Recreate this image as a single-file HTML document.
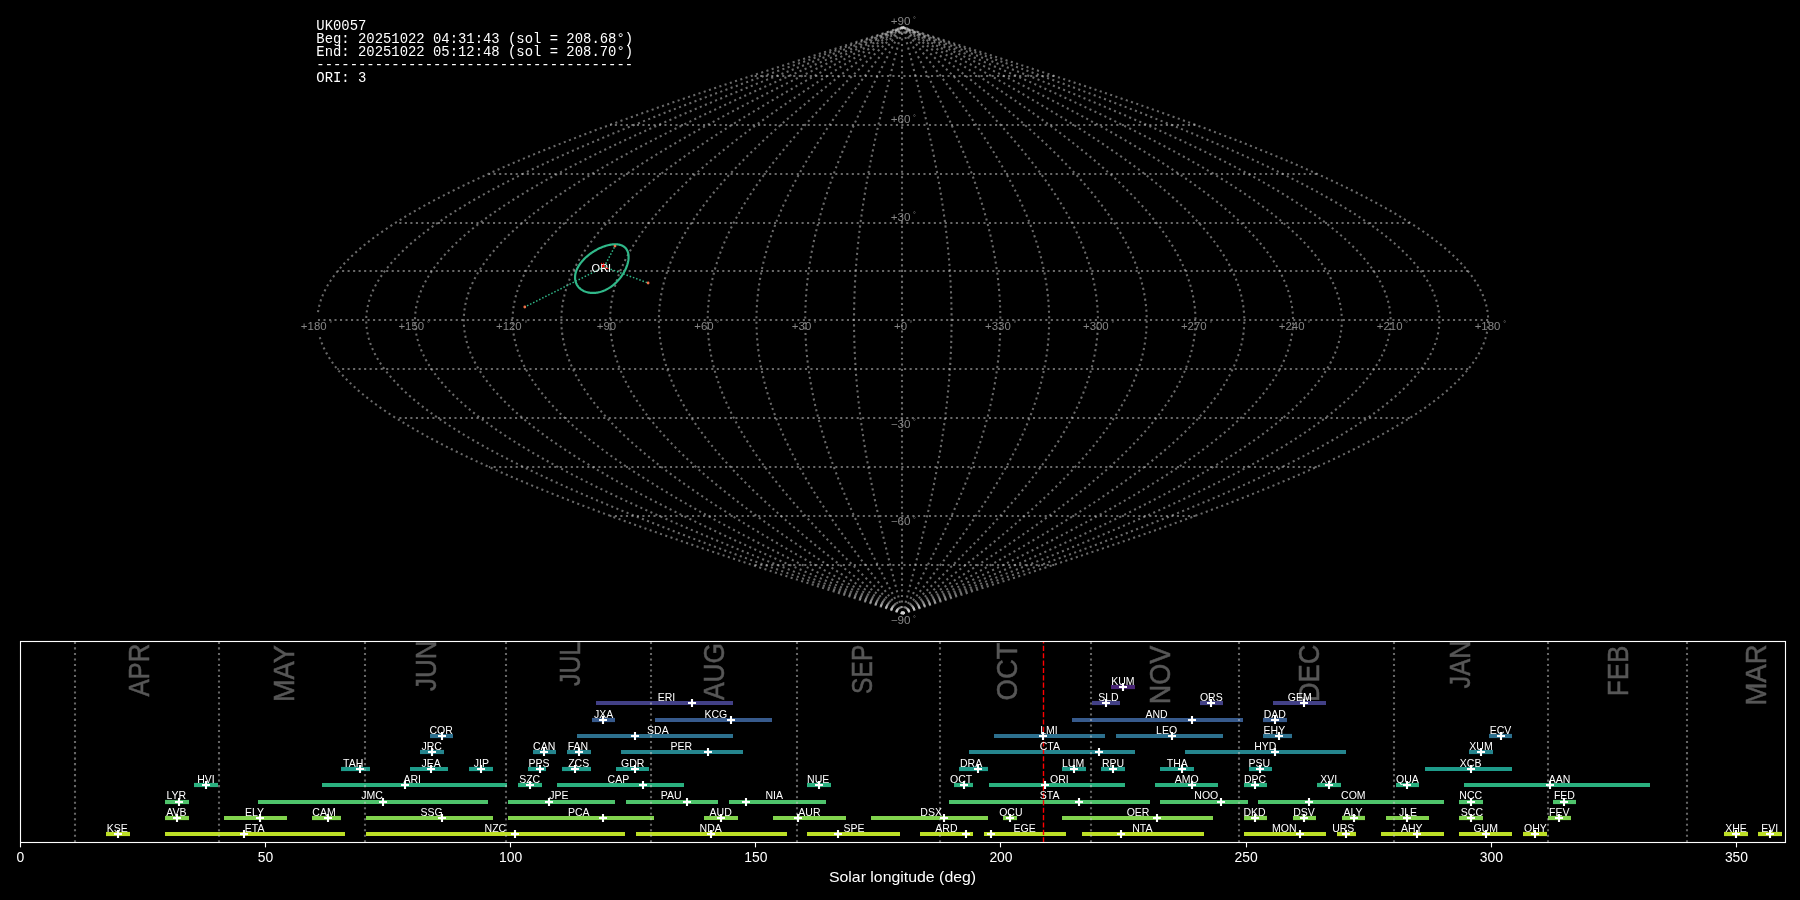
<!DOCTYPE html>
<html><head><meta charset="utf-8"><title>UK0057</title>
<style>html,body{margin:0;padding:0;background:#000;width:1800px;height:900px;overflow:hidden}svg{display:block;will-change:transform}</style>
</head><body>
<svg width="1800" height="900" viewBox="0 0 1800 900">
<rect width="1800" height="900" fill="#000"/>
<g fill="none" stroke="#d2d2d2" stroke-opacity="0.5" stroke-width="2.08" stroke-dasharray="2.08 3.43">
<path d="M902.80,613.52 L907.91,611.89 L913.02,610.26 L918.12,608.63 L923.23,607.00 L928.33,605.38 L933.44,603.75 L938.54,602.12 L943.63,600.49 L948.73,598.86 L953.82,597.23 L958.90,595.60 L963.99,593.97 L969.06,592.34 L974.14,590.71 L979.20,589.09 L984.27,587.46 L989.32,585.83 L994.37,584.20 L999.41,582.57 L1004.45,580.94 L1009.47,579.31 L1014.49,577.68 L1019.50,576.05 L1024.50,574.42 L1029.50,572.80 L1034.48,571.17 L1039.45,569.54 L1044.41,567.91 L1049.36,566.28 L1054.30,564.65 L1059.23,563.02 L1064.15,561.39 L1069.05,559.76 L1073.94,558.13 L1078.82,556.50 L1083.69,554.88 L1088.54,553.25 L1093.37,551.62 L1098.20,549.99 L1103.00,548.36 L1107.80,546.73 L1112.57,545.10 L1117.34,543.47 L1122.08,541.84 L1126.81,540.22 L1131.52,538.59 L1136.21,536.96 L1140.89,535.33 L1145.54,533.70 L1150.18,532.07 L1154.80,530.44 L1159.40,528.81 L1163.99,527.18 L1168.55,525.55 L1173.09,523.92 L1177.61,522.30 L1182.11,520.67 L1186.59,519.04 L1191.05,517.41 L1195.48,515.78 L1199.89,514.15 L1204.28,512.52 L1208.65,510.89 L1212.99,509.26 L1217.31,507.63 L1221.61,506.01 L1225.88,504.38 L1230.13,502.75 L1234.35,501.12 L1238.55,499.49 L1242.72,497.86 L1246.87,496.23 L1250.99,494.60 L1255.08,492.97 L1259.14,491.35 L1263.18,489.72 L1267.20,488.09 L1271.18,486.46 L1275.13,484.83 L1279.06,483.20 L1282.96,481.57 L1286.83,479.94 L1290.67,478.31 L1294.48,476.68 L1298.26,475.06 L1302.01,473.43 L1305.74,471.80 L1309.43,470.17 L1313.08,468.54 L1316.71,466.91 L1320.31,465.28 L1323.87,463.65 L1327.41,462.02 L1330.91,460.39 L1334.37,458.76 L1337.81,457.14 L1341.21,455.51 L1344.58,453.88 L1347.91,452.25 L1351.21,450.62 L1354.48,448.99 L1357.71,447.36 L1360.91,445.73 L1364.07,444.10 L1367.20,442.48 L1370.29,440.85 L1373.35,439.22 L1376.37,437.59 L1379.35,435.96 L1382.30,434.33 L1385.21,432.70 L1388.09,431.07 L1390.92,429.44 L1393.72,427.81 L1396.49,426.19 L1399.21,424.56 L1401.90,422.93 L1404.55,421.30 L1407.16,419.67 L1409.74,418.04 L1412.27,416.41 L1414.77,414.78 L1417.22,413.15 L1419.64,411.52 L1422.02,409.89 L1424.36,408.27 L1426.66,406.64 L1428.92,405.01 L1431.14,403.38 L1433.32,401.75 L1435.45,400.12 L1437.55,398.49 L1439.61,396.86 L1441.63,395.23 L1443.60,393.61 L1445.54,391.98 L1447.43,390.35 L1449.28,388.72 L1451.09,387.09 L1452.86,385.46 L1454.58,383.83 L1456.27,382.20 L1457.91,380.57 L1459.51,378.94 L1461.07,377.31 L1462.58,375.69 L1464.05,374.06 L1465.48,372.43 L1466.87,370.80 L1468.21,369.17 L1469.51,367.54 L1470.77,365.91 L1471.99,364.28 L1473.16,362.65 L1474.28,361.03 L1475.37,359.40 L1476.41,357.77 L1477.41,356.14 L1478.36,354.51 L1479.27,352.88 L1480.13,351.25 L1480.95,349.62 L1481.73,347.99 L1482.46,346.36 L1483.15,344.74 L1483.80,343.11 L1484.40,341.48 L1484.95,339.85 L1485.47,338.22 L1485.93,336.59 L1486.36,334.96 L1486.73,333.33 L1487.07,331.70 L1487.36,330.07 L1487.60,328.44 L1487.80,326.82 L1487.96,325.19 L1488.07,323.56 L1488.14,321.93 L1488.16,320.30 L1488.14,318.67 L1488.07,317.04 L1487.96,315.41 L1487.80,313.78 L1487.60,312.16 L1487.36,310.53 L1487.07,308.90 L1486.73,307.27 L1486.36,305.64 L1485.93,304.01 L1485.47,302.38 L1484.95,300.75 L1484.40,299.12 L1483.80,297.49 L1483.15,295.87 L1482.46,294.24 L1481.73,292.61 L1480.95,290.98 L1480.13,289.35 L1479.27,287.72 L1478.36,286.09 L1477.41,284.46 L1476.41,282.83 L1475.37,281.20 L1474.28,279.57 L1473.16,277.95 L1471.99,276.32 L1470.77,274.69 L1469.51,273.06 L1468.21,271.43 L1466.87,269.80 L1465.48,268.17 L1464.05,266.54 L1462.58,264.91 L1461.07,263.29 L1459.51,261.66 L1457.91,260.03 L1456.27,258.40 L1454.58,256.77 L1452.86,255.14 L1451.09,253.51 L1449.28,251.88 L1447.43,250.25 L1445.54,248.62 L1443.60,247.00 L1441.63,245.37 L1439.61,243.74 L1437.55,242.11 L1435.45,240.48 L1433.32,238.85 L1431.14,237.22 L1428.92,235.59 L1426.66,233.96 L1424.36,232.33 L1422.02,230.71 L1419.64,229.08 L1417.22,227.45 L1414.77,225.82 L1412.27,224.19 L1409.74,222.56 L1407.16,220.93 L1404.55,219.30 L1401.90,217.67 L1399.21,216.04 L1396.49,214.42 L1393.72,212.79 L1390.92,211.16 L1388.09,209.53 L1385.21,207.90 L1382.30,206.27 L1379.35,204.64 L1376.37,203.01 L1373.35,201.38 L1370.29,199.75 L1367.20,198.12 L1364.07,196.50 L1360.91,194.87 L1357.71,193.24 L1354.48,191.61 L1351.21,189.98 L1347.91,188.35 L1344.58,186.72 L1341.21,185.09 L1337.81,183.46 L1334.37,181.84 L1330.91,180.21 L1327.41,178.58 L1323.87,176.95 L1320.31,175.32 L1316.71,173.69 L1313.08,172.06 L1309.43,170.43 L1305.74,168.80 L1302.01,167.17 L1298.26,165.55 L1294.48,163.92 L1290.67,162.29 L1286.83,160.66 L1282.96,159.03 L1279.06,157.40 L1275.13,155.77 L1271.18,154.14 L1267.20,152.51 L1263.18,150.88 L1259.14,149.26 L1255.08,147.63 L1250.99,146.00 L1246.87,144.37 L1242.72,142.74 L1238.55,141.11 L1234.35,139.48 L1230.13,137.85 L1225.88,136.22 L1221.61,134.59 L1217.31,132.97 L1212.99,131.34 L1208.65,129.71 L1204.28,128.08 L1199.89,126.45 L1195.48,124.82 L1191.05,123.19 L1186.59,121.56 L1182.11,119.93 L1177.61,118.30 L1173.09,116.68 L1168.55,115.05 L1163.99,113.42 L1159.40,111.79 L1154.80,110.16 L1150.18,108.53 L1145.54,106.90 L1140.89,105.27 L1136.21,103.64 L1131.52,102.01 L1126.81,100.39 L1122.08,98.76 L1117.34,97.13 L1112.57,95.50 L1107.80,93.87 L1103.00,92.24 L1098.20,90.61 L1093.37,88.98 L1088.54,87.35 L1083.69,85.72 L1078.82,84.09 L1073.94,82.47 L1069.05,80.84 L1064.15,79.21 L1059.23,77.58 L1054.30,75.95 L1049.36,74.32 L1044.41,72.69 L1039.45,71.06 L1034.48,69.43 L1029.50,67.81 L1024.50,66.18 L1019.50,64.55 L1014.49,62.92 L1009.47,61.29 L1004.45,59.66 L999.41,58.03 L994.37,56.40 L989.32,54.77 L984.27,53.14 L979.20,51.51 L974.14,49.89 L969.06,48.26 L963.99,46.63 L958.90,45.00 L953.82,43.37 L948.73,41.74 L943.63,40.11 L938.54,38.48 L933.44,36.85 L928.33,35.23 L923.23,33.60 L918.12,31.97 L913.02,30.34 L907.91,28.71 L902.80,27.08"/>
<path d="M902.80,613.52 L907.48,611.89 L912.16,610.26 L916.85,608.63 L921.53,607.00 L926.21,605.38 L930.88,603.75 L935.56,602.12 L940.23,600.49 L944.90,598.86 L949.57,597.23 L954.23,595.60 L958.89,593.97 L963.54,592.34 L968.19,590.71 L972.84,589.09 L977.48,587.46 L982.11,585.83 L986.74,584.20 L991.36,582.57 L995.98,580.94 L1000.58,579.31 L1005.18,577.68 L1009.78,576.05 L1014.36,574.42 L1018.94,572.80 L1023.50,571.17 L1028.06,569.54 L1032.61,567.91 L1037.15,566.28 L1041.68,564.65 L1046.19,563.02 L1050.70,561.39 L1055.20,559.76 L1059.68,558.13 L1064.15,556.50 L1068.61,554.88 L1073.06,553.25 L1077.49,551.62 L1081.91,549.99 L1086.32,548.36 L1090.71,546.73 L1095.09,545.10 L1099.46,543.47 L1103.81,541.84 L1108.14,540.22 L1112.46,538.59 L1116.76,536.96 L1121.05,535.33 L1125.32,533.70 L1129.57,532.07 L1133.80,530.44 L1138.02,528.81 L1142.22,527.18 L1146.40,525.55 L1150.57,523.92 L1154.71,522.30 L1158.83,520.67 L1162.94,519.04 L1167.02,517.41 L1171.09,515.78 L1175.13,514.15 L1179.16,512.52 L1183.16,510.89 L1187.14,509.26 L1191.10,507.63 L1195.04,506.01 L1198.96,504.38 L1202.85,502.75 L1206.72,501.12 L1210.57,499.49 L1214.39,497.86 L1218.19,496.23 L1221.97,494.60 L1225.72,492.97 L1229.45,491.35 L1233.15,489.72 L1236.83,488.09 L1240.48,486.46 L1244.11,484.83 L1247.71,483.20 L1251.28,481.57 L1254.83,479.94 L1258.35,478.31 L1261.84,476.68 L1265.31,475.06 L1268.75,473.43 L1272.16,471.80 L1275.54,470.17 L1278.89,468.54 L1282.22,466.91 L1285.52,465.28 L1288.78,463.65 L1292.02,462.02 L1295.23,460.39 L1298.41,458.76 L1301.56,457.14 L1304.67,455.51 L1307.76,453.88 L1310.82,452.25 L1313.84,450.62 L1316.84,448.99 L1319.80,447.36 L1322.73,445.73 L1325.63,444.10 L1328.50,442.48 L1331.33,440.85 L1334.13,439.22 L1336.90,437.59 L1339.64,435.96 L1342.34,434.33 L1345.01,432.70 L1347.64,431.07 L1350.25,429.44 L1352.81,427.81 L1355.35,426.19 L1357.85,424.56 L1360.31,422.93 L1362.74,421.30 L1365.13,419.67 L1367.49,418.04 L1369.82,416.41 L1372.10,414.78 L1374.36,413.15 L1376.57,411.52 L1378.75,409.89 L1380.90,408.27 L1383.00,406.64 L1385.07,405.01 L1387.11,403.38 L1389.11,401.75 L1391.07,400.12 L1392.99,398.49 L1394.88,396.86 L1396.72,395.23 L1398.54,393.61 L1400.31,391.98 L1402.04,390.35 L1403.74,388.72 L1405.40,387.09 L1407.02,385.46 L1408.60,383.83 L1410.15,382.20 L1411.65,380.57 L1413.12,378.94 L1414.55,377.31 L1415.93,375.69 L1417.28,374.06 L1418.59,372.43 L1419.86,370.80 L1421.10,369.17 L1422.29,367.54 L1423.44,365.91 L1424.55,364.28 L1425.63,362.65 L1426.66,361.03 L1427.65,359.40 L1428.61,357.77 L1429.52,356.14 L1430.39,354.51 L1431.23,352.88 L1432.02,351.25 L1432.77,349.62 L1433.49,347.99 L1434.16,346.36 L1434.79,344.74 L1435.38,343.11 L1435.93,341.48 L1436.44,339.85 L1436.91,338.22 L1437.34,336.59 L1437.73,334.96 L1438.07,333.33 L1438.38,331.70 L1438.64,330.07 L1438.87,328.44 L1439.05,326.82 L1439.20,325.19 L1439.30,323.56 L1439.36,321.93 L1439.38,320.30 L1439.36,318.67 L1439.30,317.04 L1439.20,315.41 L1439.05,313.78 L1438.87,312.16 L1438.64,310.53 L1438.38,308.90 L1438.07,307.27 L1437.73,305.64 L1437.34,304.01 L1436.91,302.38 L1436.44,300.75 L1435.93,299.12 L1435.38,297.49 L1434.79,295.87 L1434.16,294.24 L1433.49,292.61 L1432.77,290.98 L1432.02,289.35 L1431.23,287.72 L1430.39,286.09 L1429.52,284.46 L1428.61,282.83 L1427.65,281.20 L1426.66,279.57 L1425.63,277.95 L1424.55,276.32 L1423.44,274.69 L1422.29,273.06 L1421.10,271.43 L1419.86,269.80 L1418.59,268.17 L1417.28,266.54 L1415.93,264.91 L1414.55,263.29 L1413.12,261.66 L1411.65,260.03 L1410.15,258.40 L1408.60,256.77 L1407.02,255.14 L1405.40,253.51 L1403.74,251.88 L1402.04,250.25 L1400.31,248.62 L1398.54,247.00 L1396.72,245.37 L1394.88,243.74 L1392.99,242.11 L1391.07,240.48 L1389.11,238.85 L1387.11,237.22 L1385.07,235.59 L1383.00,233.96 L1380.90,232.33 L1378.75,230.71 L1376.57,229.08 L1374.36,227.45 L1372.10,225.82 L1369.82,224.19 L1367.49,222.56 L1365.13,220.93 L1362.74,219.30 L1360.31,217.67 L1357.85,216.04 L1355.35,214.42 L1352.81,212.79 L1350.25,211.16 L1347.64,209.53 L1345.01,207.90 L1342.34,206.27 L1339.64,204.64 L1336.90,203.01 L1334.13,201.38 L1331.33,199.75 L1328.50,198.12 L1325.63,196.50 L1322.73,194.87 L1319.80,193.24 L1316.84,191.61 L1313.84,189.98 L1310.82,188.35 L1307.76,186.72 L1304.67,185.09 L1301.56,183.46 L1298.41,181.84 L1295.23,180.21 L1292.02,178.58 L1288.78,176.95 L1285.52,175.32 L1282.22,173.69 L1278.89,172.06 L1275.54,170.43 L1272.16,168.80 L1268.75,167.17 L1265.31,165.55 L1261.84,163.92 L1258.35,162.29 L1254.83,160.66 L1251.28,159.03 L1247.71,157.40 L1244.11,155.77 L1240.48,154.14 L1236.83,152.51 L1233.15,150.88 L1229.45,149.26 L1225.72,147.63 L1221.97,146.00 L1218.19,144.37 L1214.39,142.74 L1210.57,141.11 L1206.72,139.48 L1202.85,137.85 L1198.96,136.22 L1195.04,134.59 L1191.10,132.97 L1187.14,131.34 L1183.16,129.71 L1179.16,128.08 L1175.13,126.45 L1171.09,124.82 L1167.02,123.19 L1162.94,121.56 L1158.83,119.93 L1154.71,118.30 L1150.57,116.68 L1146.40,115.05 L1142.22,113.42 L1138.02,111.79 L1133.80,110.16 L1129.57,108.53 L1125.32,106.90 L1121.05,105.27 L1116.76,103.64 L1112.46,102.01 L1108.14,100.39 L1103.81,98.76 L1099.46,97.13 L1095.09,95.50 L1090.71,93.87 L1086.32,92.24 L1081.91,90.61 L1077.49,88.98 L1073.06,87.35 L1068.61,85.72 L1064.15,84.09 L1059.68,82.47 L1055.20,80.84 L1050.70,79.21 L1046.19,77.58 L1041.68,75.95 L1037.15,74.32 L1032.61,72.69 L1028.06,71.06 L1023.50,69.43 L1018.94,67.81 L1014.36,66.18 L1009.78,64.55 L1005.18,62.92 L1000.58,61.29 L995.98,59.66 L991.36,58.03 L986.74,56.40 L982.11,54.77 L977.48,53.14 L972.84,51.51 L968.19,49.89 L963.54,48.26 L958.89,46.63 L954.23,45.00 L949.57,43.37 L944.90,41.74 L940.23,40.11 L935.56,38.48 L930.88,36.85 L926.21,35.23 L921.53,33.60 L916.85,31.97 L912.16,30.34 L907.48,28.71 L902.80,27.08"/>
<path d="M902.80,613.52 L907.06,611.89 L911.31,610.26 L915.57,608.63 L919.82,607.00 L924.08,605.38 L928.33,603.75 L932.58,602.12 L936.83,600.49 L941.07,598.86 L945.31,597.23 L949.55,595.60 L953.79,593.97 L958.02,592.34 L962.25,590.71 L966.47,589.09 L970.69,587.46 L974.90,585.83 L979.11,584.20 L983.31,582.57 L987.51,580.94 L991.69,579.31 L995.88,577.68 L1000.05,576.05 L1004.22,574.42 L1008.38,572.80 L1012.53,571.17 L1016.67,569.54 L1020.81,567.91 L1024.94,566.28 L1029.05,564.65 L1033.16,563.02 L1037.26,561.39 L1041.34,559.76 L1045.42,558.13 L1049.48,556.50 L1053.54,554.88 L1057.58,553.25 L1061.61,551.62 L1065.63,549.99 L1069.64,548.36 L1073.63,546.73 L1077.61,545.10 L1081.58,543.47 L1085.53,541.84 L1089.47,540.22 L1093.40,538.59 L1097.31,536.96 L1101.21,535.33 L1105.09,533.70 L1108.95,532.07 L1112.80,530.44 L1116.64,528.81 L1120.46,527.18 L1124.26,525.55 L1128.04,523.92 L1131.81,522.30 L1135.56,520.67 L1139.29,519.04 L1143.00,517.41 L1146.70,515.78 L1150.38,514.15 L1154.04,512.52 L1157.67,510.89 L1161.29,509.26 L1164.89,507.63 L1168.47,506.01 L1172.03,504.38 L1175.57,502.75 L1179.09,501.12 L1182.59,499.49 L1186.07,497.86 L1189.52,496.23 L1192.95,494.60 L1196.37,492.97 L1199.75,491.35 L1203.12,489.72 L1206.46,488.09 L1209.78,486.46 L1213.08,484.83 L1216.35,483.20 L1219.60,481.57 L1222.83,479.94 L1226.03,478.31 L1229.20,476.68 L1232.35,475.06 L1235.48,473.43 L1238.58,471.80 L1241.65,470.17 L1244.70,468.54 L1247.73,466.91 L1250.72,465.28 L1253.69,463.65 L1256.64,462.02 L1259.55,460.39 L1262.44,458.76 L1265.31,457.14 L1268.14,455.51 L1270.95,453.88 L1273.73,452.25 L1276.48,450.62 L1279.20,448.99 L1281.89,447.36 L1284.56,445.73 L1287.19,444.10 L1289.80,442.48 L1292.37,440.85 L1294.92,439.22 L1297.44,437.59 L1299.93,435.96 L1302.38,434.33 L1304.81,432.70 L1307.20,431.07 L1309.57,429.44 L1311.90,427.81 L1314.21,426.19 L1316.48,424.56 L1318.72,422.93 L1320.93,421.30 L1323.10,419.67 L1325.25,418.04 L1327.36,416.41 L1329.44,414.78 L1331.49,413.15 L1333.50,411.52 L1335.48,409.89 L1337.43,408.27 L1339.35,406.64 L1341.23,405.01 L1343.08,403.38 L1344.90,401.75 L1346.68,400.12 L1348.43,398.49 L1350.14,396.86 L1351.82,395.23 L1353.47,393.61 L1355.08,391.98 L1356.66,390.35 L1358.20,388.72 L1359.71,387.09 L1361.18,385.46 L1362.62,383.83 L1364.02,382.20 L1365.39,380.57 L1366.73,378.94 L1368.02,377.31 L1369.29,375.69 L1370.51,374.06 L1371.70,372.43 L1372.86,370.80 L1373.98,369.17 L1375.06,367.54 L1376.11,365.91 L1377.12,364.28 L1378.10,362.65 L1379.04,361.03 L1379.94,359.40 L1380.81,357.77 L1381.64,356.14 L1382.43,354.51 L1383.19,352.88 L1383.91,351.25 L1384.59,349.62 L1385.24,347.99 L1385.85,346.36 L1386.43,344.74 L1386.96,343.11 L1387.46,341.48 L1387.93,339.85 L1388.35,338.22 L1388.74,336.59 L1389.10,334.96 L1389.41,333.33 L1389.69,331.70 L1389.93,330.07 L1390.14,328.44 L1390.30,326.82 L1390.43,325.19 L1390.53,323.56 L1390.58,321.93 L1390.60,320.30 L1390.58,318.67 L1390.53,317.04 L1390.43,315.41 L1390.30,313.78 L1390.14,312.16 L1389.93,310.53 L1389.69,308.90 L1389.41,307.27 L1389.10,305.64 L1388.74,304.01 L1388.35,302.38 L1387.93,300.75 L1387.46,299.12 L1386.96,297.49 L1386.43,295.87 L1385.85,294.24 L1385.24,292.61 L1384.59,290.98 L1383.91,289.35 L1383.19,287.72 L1382.43,286.09 L1381.64,284.46 L1380.81,282.83 L1379.94,281.20 L1379.04,279.57 L1378.10,277.95 L1377.12,276.32 L1376.11,274.69 L1375.06,273.06 L1373.98,271.43 L1372.86,269.80 L1371.70,268.17 L1370.51,266.54 L1369.29,264.91 L1368.02,263.29 L1366.73,261.66 L1365.39,260.03 L1364.02,258.40 L1362.62,256.77 L1361.18,255.14 L1359.71,253.51 L1358.20,251.88 L1356.66,250.25 L1355.08,248.62 L1353.47,247.00 L1351.82,245.37 L1350.14,243.74 L1348.43,242.11 L1346.68,240.48 L1344.90,238.85 L1343.08,237.22 L1341.23,235.59 L1339.35,233.96 L1337.43,232.33 L1335.48,230.71 L1333.50,229.08 L1331.49,227.45 L1329.44,225.82 L1327.36,224.19 L1325.25,222.56 L1323.10,220.93 L1320.93,219.30 L1318.72,217.67 L1316.48,216.04 L1314.21,214.42 L1311.90,212.79 L1309.57,211.16 L1307.20,209.53 L1304.81,207.90 L1302.38,206.27 L1299.93,204.64 L1297.44,203.01 L1294.92,201.38 L1292.37,199.75 L1289.80,198.12 L1287.19,196.50 L1284.56,194.87 L1281.89,193.24 L1279.20,191.61 L1276.48,189.98 L1273.73,188.35 L1270.95,186.72 L1268.14,185.09 L1265.31,183.46 L1262.44,181.84 L1259.55,180.21 L1256.64,178.58 L1253.69,176.95 L1250.72,175.32 L1247.73,173.69 L1244.70,172.06 L1241.65,170.43 L1238.58,168.80 L1235.48,167.17 L1232.35,165.55 L1229.20,163.92 L1226.03,162.29 L1222.83,160.66 L1219.60,159.03 L1216.35,157.40 L1213.08,155.77 L1209.78,154.14 L1206.46,152.51 L1203.12,150.88 L1199.75,149.26 L1196.37,147.63 L1192.95,146.00 L1189.52,144.37 L1186.07,142.74 L1182.59,141.11 L1179.09,139.48 L1175.57,137.85 L1172.03,136.22 L1168.47,134.59 L1164.89,132.97 L1161.29,131.34 L1157.67,129.71 L1154.04,128.08 L1150.38,126.45 L1146.70,124.82 L1143.00,123.19 L1139.29,121.56 L1135.56,119.93 L1131.81,118.30 L1128.04,116.68 L1124.26,115.05 L1120.46,113.42 L1116.64,111.79 L1112.80,110.16 L1108.95,108.53 L1105.09,106.90 L1101.21,105.27 L1097.31,103.64 L1093.40,102.01 L1089.47,100.39 L1085.53,98.76 L1081.58,97.13 L1077.61,95.50 L1073.63,93.87 L1069.64,92.24 L1065.63,90.61 L1061.61,88.98 L1057.58,87.35 L1053.54,85.72 L1049.48,84.09 L1045.42,82.47 L1041.34,80.84 L1037.26,79.21 L1033.16,77.58 L1029.05,75.95 L1024.94,74.32 L1020.81,72.69 L1016.67,71.06 L1012.53,69.43 L1008.38,67.81 L1004.22,66.18 L1000.05,64.55 L995.88,62.92 L991.69,61.29 L987.51,59.66 L983.31,58.03 L979.11,56.40 L974.90,54.77 L970.69,53.14 L966.47,51.51 L962.25,49.89 L958.02,48.26 L953.79,46.63 L949.55,45.00 L945.31,43.37 L941.07,41.74 L936.83,40.11 L932.58,38.48 L928.33,36.85 L924.08,35.23 L919.82,33.60 L915.57,31.97 L911.31,30.34 L907.06,28.71 L902.80,27.08"/>
<path d="M902.80,613.52 L906.63,611.89 L910.46,610.26 L914.29,608.63 L918.12,607.00 L921.95,605.38 L925.78,603.75 L929.60,602.12 L933.42,600.49 L937.25,598.86 L941.06,597.23 L944.88,595.60 L948.69,593.97 L952.50,592.34 L956.30,590.71 L960.10,589.09 L963.90,587.46 L967.69,585.83 L971.48,584.20 L975.26,582.57 L979.04,580.94 L982.81,579.31 L986.57,577.68 L990.33,576.05 L994.08,574.42 L997.82,572.80 L1001.56,571.17 L1005.29,569.54 L1009.01,567.91 L1012.72,566.28 L1016.43,564.65 L1020.12,563.02 L1023.81,561.39 L1027.49,559.76 L1031.16,558.13 L1034.82,556.50 L1038.46,554.88 L1042.10,553.25 L1045.73,551.62 L1049.35,549.99 L1052.95,548.36 L1056.55,546.73 L1060.13,545.10 L1063.70,543.47 L1067.26,541.84 L1070.81,540.22 L1074.34,538.59 L1077.86,536.96 L1081.37,535.33 L1084.86,533.70 L1088.34,532.07 L1091.80,530.44 L1095.25,528.81 L1098.69,527.18 L1102.11,525.55 L1105.52,523.92 L1108.91,522.30 L1112.28,520.67 L1115.64,519.04 L1118.98,517.41 L1122.31,515.78 L1125.62,514.15 L1128.91,512.52 L1132.19,510.89 L1135.45,509.26 L1138.69,507.63 L1141.91,506.01 L1145.11,504.38 L1148.30,502.75 L1151.46,501.12 L1154.61,499.49 L1157.74,497.86 L1160.85,496.23 L1163.94,494.60 L1167.01,492.97 L1170.06,491.35 L1173.09,489.72 L1176.10,488.09 L1179.08,486.46 L1182.05,484.83 L1185.00,483.20 L1187.92,481.57 L1190.82,479.94 L1193.70,478.31 L1196.56,476.68 L1199.40,475.06 L1202.21,473.43 L1205.00,471.80 L1207.77,470.17 L1210.51,468.54 L1213.23,466.91 L1215.93,465.28 L1218.60,463.65 L1221.25,462.02 L1223.88,460.39 L1226.48,458.76 L1229.06,457.14 L1231.61,455.51 L1234.13,453.88 L1236.63,452.25 L1239.11,450.62 L1241.56,448.99 L1243.98,447.36 L1246.38,445.73 L1248.75,444.10 L1251.10,442.48 L1253.42,440.85 L1255.71,439.22 L1257.97,437.59 L1260.21,435.96 L1262.42,434.33 L1264.61,432.70 L1266.76,431.07 L1268.89,429.44 L1270.99,427.81 L1273.07,426.19 L1275.11,424.56 L1277.13,422.93 L1279.11,421.30 L1281.07,419.67 L1283.00,418.04 L1284.90,416.41 L1286.78,414.78 L1288.62,413.15 L1290.43,411.52 L1292.22,409.89 L1293.97,408.27 L1295.69,406.64 L1297.39,405.01 L1299.05,403.38 L1300.69,401.75 L1302.29,400.12 L1303.86,398.49 L1305.41,396.86 L1306.92,395.23 L1308.40,393.61 L1309.85,391.98 L1311.27,390.35 L1312.66,388.72 L1314.02,387.09 L1315.34,385.46 L1316.64,383.83 L1317.90,382.20 L1319.13,380.57 L1320.33,378.94 L1321.50,377.31 L1322.64,375.69 L1323.74,374.06 L1324.81,372.43 L1325.85,370.80 L1326.86,369.17 L1327.84,367.54 L1328.78,365.91 L1329.69,364.28 L1330.57,362.65 L1331.41,361.03 L1332.23,359.40 L1333.01,357.77 L1333.75,356.14 L1334.47,354.51 L1335.15,352.88 L1335.80,351.25 L1336.41,349.62 L1337.00,347.99 L1337.55,346.36 L1338.06,344.74 L1338.55,343.11 L1339.00,341.48 L1339.42,339.85 L1339.80,338.22 L1340.15,336.59 L1340.47,334.96 L1340.75,333.33 L1341.00,331.70 L1341.22,330.07 L1341.40,328.44 L1341.55,326.82 L1341.67,325.19 L1341.75,323.56 L1341.80,321.93 L1341.82,320.30 L1341.80,318.67 L1341.75,317.04 L1341.67,315.41 L1341.55,313.78 L1341.40,312.16 L1341.22,310.53 L1341.00,308.90 L1340.75,307.27 L1340.47,305.64 L1340.15,304.01 L1339.80,302.38 L1339.42,300.75 L1339.00,299.12 L1338.55,297.49 L1338.06,295.87 L1337.55,294.24 L1337.00,292.61 L1336.41,290.98 L1335.80,289.35 L1335.15,287.72 L1334.47,286.09 L1333.75,284.46 L1333.01,282.83 L1332.23,281.20 L1331.41,279.57 L1330.57,277.95 L1329.69,276.32 L1328.78,274.69 L1327.84,273.06 L1326.86,271.43 L1325.85,269.80 L1324.81,268.17 L1323.74,266.54 L1322.64,264.91 L1321.50,263.29 L1320.33,261.66 L1319.13,260.03 L1317.90,258.40 L1316.64,256.77 L1315.34,255.14 L1314.02,253.51 L1312.66,251.88 L1311.27,250.25 L1309.85,248.62 L1308.40,247.00 L1306.92,245.37 L1305.41,243.74 L1303.86,242.11 L1302.29,240.48 L1300.69,238.85 L1299.05,237.22 L1297.39,235.59 L1295.69,233.96 L1293.97,232.33 L1292.22,230.71 L1290.43,229.08 L1288.62,227.45 L1286.78,225.82 L1284.90,224.19 L1283.00,222.56 L1281.07,220.93 L1279.11,219.30 L1277.13,217.67 L1275.11,216.04 L1273.07,214.42 L1270.99,212.79 L1268.89,211.16 L1266.76,209.53 L1264.61,207.90 L1262.42,206.27 L1260.21,204.64 L1257.97,203.01 L1255.71,201.38 L1253.42,199.75 L1251.10,198.12 L1248.75,196.50 L1246.38,194.87 L1243.98,193.24 L1241.56,191.61 L1239.11,189.98 L1236.63,188.35 L1234.13,186.72 L1231.61,185.09 L1229.06,183.46 L1226.48,181.84 L1223.88,180.21 L1221.25,178.58 L1218.60,176.95 L1215.93,175.32 L1213.23,173.69 L1210.51,172.06 L1207.77,170.43 L1205.00,168.80 L1202.21,167.17 L1199.40,165.55 L1196.56,163.92 L1193.70,162.29 L1190.82,160.66 L1187.92,159.03 L1185.00,157.40 L1182.05,155.77 L1179.08,154.14 L1176.10,152.51 L1173.09,150.88 L1170.06,149.26 L1167.01,147.63 L1163.94,146.00 L1160.85,144.37 L1157.74,142.74 L1154.61,141.11 L1151.46,139.48 L1148.30,137.85 L1145.11,136.22 L1141.91,134.59 L1138.69,132.97 L1135.45,131.34 L1132.19,129.71 L1128.91,128.08 L1125.62,126.45 L1122.31,124.82 L1118.98,123.19 L1115.64,121.56 L1112.28,119.93 L1108.91,118.30 L1105.52,116.68 L1102.11,115.05 L1098.69,113.42 L1095.25,111.79 L1091.80,110.16 L1088.34,108.53 L1084.86,106.90 L1081.37,105.27 L1077.86,103.64 L1074.34,102.01 L1070.81,100.39 L1067.26,98.76 L1063.70,97.13 L1060.13,95.50 L1056.55,93.87 L1052.95,92.24 L1049.35,90.61 L1045.73,88.98 L1042.10,87.35 L1038.46,85.72 L1034.82,84.09 L1031.16,82.47 L1027.49,80.84 L1023.81,79.21 L1020.12,77.58 L1016.43,75.95 L1012.72,74.32 L1009.01,72.69 L1005.29,71.06 L1001.56,69.43 L997.82,67.81 L994.08,66.18 L990.33,64.55 L986.57,62.92 L982.81,61.29 L979.04,59.66 L975.26,58.03 L971.48,56.40 L967.69,54.77 L963.90,53.14 L960.10,51.51 L956.30,49.89 L952.50,48.26 L948.69,46.63 L944.88,45.00 L941.06,43.37 L937.25,41.74 L933.42,40.11 L929.60,38.48 L925.78,36.85 L921.95,35.23 L918.12,33.60 L914.29,31.97 L910.46,30.34 L906.63,28.71 L902.80,27.08"/>
<path d="M902.80,613.52 L906.21,611.89 L909.61,610.26 L913.02,608.63 L916.42,607.00 L919.82,605.38 L923.22,603.75 L926.62,602.12 L930.02,600.49 L933.42,598.86 L936.81,597.23 L940.20,595.60 L943.59,593.97 L946.98,592.34 L950.36,590.71 L953.74,589.09 L957.11,587.46 L960.48,585.83 L963.85,584.20 L967.21,582.57 L970.56,580.94 L973.92,579.31 L977.26,577.68 L980.60,576.05 L983.94,574.42 L987.26,572.80 L990.58,571.17 L993.90,569.54 L997.21,567.91 L1000.51,566.28 L1003.80,564.65 L1007.09,563.02 L1010.36,561.39 L1013.63,559.76 L1016.90,558.13 L1020.15,556.50 L1023.39,554.88 L1026.62,553.25 L1029.85,551.62 L1033.06,549.99 L1036.27,548.36 L1039.46,546.73 L1042.65,545.10 L1045.82,543.47 L1048.99,541.84 L1052.14,540.22 L1055.28,538.59 L1058.41,536.96 L1061.52,535.33 L1064.63,533.70 L1067.72,532.07 L1070.80,530.44 L1073.87,528.81 L1076.92,527.18 L1079.97,525.55 L1082.99,523.92 L1086.01,522.30 L1089.01,520.67 L1091.99,519.04 L1094.96,517.41 L1097.92,515.78 L1100.86,514.15 L1103.79,512.52 L1106.70,510.89 L1109.60,509.26 L1112.48,507.63 L1115.34,506.01 L1118.19,504.38 L1121.02,502.75 L1123.83,501.12 L1126.63,499.49 L1129.41,497.86 L1132.18,496.23 L1134.92,494.60 L1137.65,492.97 L1140.36,491.35 L1143.06,489.72 L1145.73,488.09 L1148.39,486.46 L1151.02,484.83 L1153.64,483.20 L1156.24,481.57 L1158.82,479.94 L1161.38,478.31 L1163.92,476.68 L1166.44,475.06 L1168.94,473.43 L1171.42,471.80 L1173.88,470.17 L1176.32,468.54 L1178.74,466.91 L1181.14,465.28 L1183.52,463.65 L1185.87,462.02 L1188.20,460.39 L1190.52,458.76 L1192.80,457.14 L1195.07,455.51 L1197.32,453.88 L1199.54,452.25 L1201.74,450.62 L1203.92,448.99 L1206.07,447.36 L1208.21,445.73 L1210.31,444.10 L1212.40,442.48 L1214.46,440.85 L1216.50,439.22 L1218.51,437.59 L1220.50,435.96 L1222.47,434.33 L1224.41,432.70 L1226.32,431.07 L1228.22,429.44 L1230.08,427.81 L1231.93,426.19 L1233.74,424.56 L1235.53,422.93 L1237.30,421.30 L1239.04,419.67 L1240.76,418.04 L1242.45,416.41 L1244.11,414.78 L1245.75,413.15 L1247.36,411.52 L1248.95,409.89 L1250.51,408.27 L1252.04,406.64 L1253.55,405.01 L1255.02,403.38 L1256.48,401.75 L1257.90,400.12 L1259.30,398.49 L1260.67,396.86 L1262.02,395.23 L1263.33,393.61 L1264.62,391.98 L1265.89,390.35 L1267.12,388.72 L1268.33,387.09 L1269.51,385.46 L1270.66,383.83 L1271.78,382.20 L1272.87,380.57 L1273.94,378.94 L1274.98,377.31 L1275.99,375.69 L1276.97,374.06 L1277.92,372.43 L1278.85,370.80 L1279.74,369.17 L1280.61,367.54 L1281.45,365.91 L1282.26,364.28 L1283.04,362.65 L1283.79,361.03 L1284.51,359.40 L1285.21,357.77 L1285.87,356.14 L1286.51,354.51 L1287.11,352.88 L1287.69,351.25 L1288.24,349.62 L1288.75,347.99 L1289.24,346.36 L1289.70,344.74 L1290.13,343.11 L1290.53,341.48 L1290.90,339.85 L1291.24,338.22 L1291.56,336.59 L1291.84,334.96 L1292.09,333.33 L1292.31,331.70 L1292.51,330.07 L1292.67,328.44 L1292.80,326.82 L1292.91,325.19 L1292.98,323.56 L1293.03,321.93 L1293.04,320.30 L1293.03,318.67 L1292.98,317.04 L1292.91,315.41 L1292.80,313.78 L1292.67,312.16 L1292.51,310.53 L1292.31,308.90 L1292.09,307.27 L1291.84,305.64 L1291.56,304.01 L1291.24,302.38 L1290.90,300.75 L1290.53,299.12 L1290.13,297.49 L1289.70,295.87 L1289.24,294.24 L1288.75,292.61 L1288.24,290.98 L1287.69,289.35 L1287.11,287.72 L1286.51,286.09 L1285.87,284.46 L1285.21,282.83 L1284.51,281.20 L1283.79,279.57 L1283.04,277.95 L1282.26,276.32 L1281.45,274.69 L1280.61,273.06 L1279.74,271.43 L1278.85,269.80 L1277.92,268.17 L1276.97,266.54 L1275.99,264.91 L1274.98,263.29 L1273.94,261.66 L1272.87,260.03 L1271.78,258.40 L1270.66,256.77 L1269.51,255.14 L1268.33,253.51 L1267.12,251.88 L1265.89,250.25 L1264.62,248.62 L1263.33,247.00 L1262.02,245.37 L1260.67,243.74 L1259.30,242.11 L1257.90,240.48 L1256.48,238.85 L1255.02,237.22 L1253.55,235.59 L1252.04,233.96 L1250.51,232.33 L1248.95,230.71 L1247.36,229.08 L1245.75,227.45 L1244.11,225.82 L1242.45,224.19 L1240.76,222.56 L1239.04,220.93 L1237.30,219.30 L1235.53,217.67 L1233.74,216.04 L1231.93,214.42 L1230.08,212.79 L1228.22,211.16 L1226.32,209.53 L1224.41,207.90 L1222.47,206.27 L1220.50,204.64 L1218.51,203.01 L1216.50,201.38 L1214.46,199.75 L1212.40,198.12 L1210.31,196.50 L1208.21,194.87 L1206.07,193.24 L1203.92,191.61 L1201.74,189.98 L1199.54,188.35 L1197.32,186.72 L1195.07,185.09 L1192.80,183.46 L1190.52,181.84 L1188.20,180.21 L1185.87,178.58 L1183.52,176.95 L1181.14,175.32 L1178.74,173.69 L1176.32,172.06 L1173.88,170.43 L1171.42,168.80 L1168.94,167.17 L1166.44,165.55 L1163.92,163.92 L1161.38,162.29 L1158.82,160.66 L1156.24,159.03 L1153.64,157.40 L1151.02,155.77 L1148.39,154.14 L1145.73,152.51 L1143.06,150.88 L1140.36,149.26 L1137.65,147.63 L1134.92,146.00 L1132.18,144.37 L1129.41,142.74 L1126.63,141.11 L1123.83,139.48 L1121.02,137.85 L1118.19,136.22 L1115.34,134.59 L1112.48,132.97 L1109.60,131.34 L1106.70,129.71 L1103.79,128.08 L1100.86,126.45 L1097.92,124.82 L1094.96,123.19 L1091.99,121.56 L1089.01,119.93 L1086.01,118.30 L1082.99,116.68 L1079.97,115.05 L1076.92,113.42 L1073.87,111.79 L1070.80,110.16 L1067.72,108.53 L1064.63,106.90 L1061.52,105.27 L1058.41,103.64 L1055.28,102.01 L1052.14,100.39 L1048.99,98.76 L1045.82,97.13 L1042.65,95.50 L1039.46,93.87 L1036.27,92.24 L1033.06,90.61 L1029.85,88.98 L1026.62,87.35 L1023.39,85.72 L1020.15,84.09 L1016.90,82.47 L1013.63,80.84 L1010.36,79.21 L1007.09,77.58 L1003.80,75.95 L1000.51,74.32 L997.21,72.69 L993.90,71.06 L990.58,69.43 L987.26,67.81 L983.94,66.18 L980.60,64.55 L977.26,62.92 L973.92,61.29 L970.56,59.66 L967.21,58.03 L963.85,56.40 L960.48,54.77 L957.11,53.14 L953.74,51.51 L950.36,49.89 L946.98,48.26 L943.59,46.63 L940.20,45.00 L936.81,43.37 L933.42,41.74 L930.02,40.11 L926.62,38.48 L923.22,36.85 L919.82,35.23 L916.42,33.60 L913.02,31.97 L909.61,30.34 L906.21,28.71 L902.80,27.08"/>
<path d="M902.80,613.52 L905.78,611.89 L908.76,610.26 L911.74,608.63 L914.72,607.00 L917.69,605.38 L920.67,603.75 L923.65,602.12 L926.62,600.49 L929.59,598.86 L932.56,597.23 L935.53,595.60 L938.49,593.97 L941.45,592.34 L944.41,590.71 L947.37,589.09 L950.32,587.46 L953.27,585.83 L956.22,584.20 L959.16,582.57 L962.09,580.94 L965.03,579.31 L967.95,577.68 L970.88,576.05 L973.79,574.42 L976.71,572.80 L979.61,571.17 L982.51,569.54 L985.41,567.91 L988.29,566.28 L991.18,564.65 L994.05,563.02 L996.92,561.39 L999.78,559.76 L1002.63,558.13 L1005.48,556.50 L1008.32,554.88 L1011.15,553.25 L1013.97,551.62 L1016.78,549.99 L1019.59,548.36 L1022.38,546.73 L1025.17,545.10 L1027.95,543.47 L1030.71,541.84 L1033.47,540.22 L1036.22,538.59 L1038.96,536.96 L1041.68,535.33 L1044.40,533.70 L1047.11,532.07 L1049.80,530.44 L1052.49,528.81 L1055.16,527.18 L1057.82,525.55 L1060.47,523.92 L1063.11,522.30 L1065.73,520.67 L1068.34,519.04 L1070.94,517.41 L1073.53,515.78 L1076.10,514.15 L1078.66,512.52 L1081.21,510.89 L1083.75,509.26 L1086.27,507.63 L1088.77,506.01 L1091.26,504.38 L1093.74,502.75 L1096.21,501.12 L1098.65,499.49 L1101.09,497.86 L1103.51,496.23 L1105.91,494.60 L1108.30,492.97 L1110.67,491.35 L1113.02,489.72 L1115.36,488.09 L1117.69,486.46 L1120.00,484.83 L1122.29,483.20 L1124.56,481.57 L1126.82,479.94 L1129.06,478.31 L1131.28,476.68 L1133.49,475.06 L1135.68,473.43 L1137.85,471.80 L1140.00,470.17 L1142.13,468.54 L1144.25,466.91 L1146.35,465.28 L1148.43,463.65 L1150.49,462.02 L1152.53,460.39 L1154.55,458.76 L1156.55,457.14 L1158.54,455.51 L1160.50,453.88 L1162.45,452.25 L1164.37,450.62 L1166.28,448.99 L1168.16,447.36 L1170.03,445.73 L1171.87,444.10 L1173.70,442.48 L1175.50,440.85 L1177.28,439.22 L1179.05,437.59 L1180.79,435.96 L1182.51,434.33 L1184.21,432.70 L1185.88,431.07 L1187.54,429.44 L1189.17,427.81 L1190.78,426.19 L1192.37,424.56 L1193.94,422.93 L1195.49,421.30 L1197.01,419.67 L1198.51,418.04 L1199.99,416.41 L1201.45,414.78 L1202.88,413.15 L1204.29,411.52 L1205.68,409.89 L1207.04,408.27 L1208.38,406.64 L1209.70,405.01 L1211.00,403.38 L1212.27,401.75 L1213.52,400.12 L1214.74,398.49 L1215.94,396.86 L1217.12,395.23 L1218.27,393.61 L1219.40,391.98 L1220.50,390.35 L1221.58,388.72 L1222.64,387.09 L1223.67,385.46 L1224.67,383.83 L1225.66,382.20 L1226.61,380.57 L1227.55,378.94 L1228.46,377.31 L1229.34,375.69 L1230.20,374.06 L1231.03,372.43 L1231.84,370.80 L1232.63,369.17 L1233.38,367.54 L1234.12,365.91 L1234.83,364.28 L1235.51,362.65 L1236.17,361.03 L1236.80,359.40 L1237.41,357.77 L1237.99,356.14 L1238.54,354.51 L1239.07,352.88 L1239.58,351.25 L1240.06,349.62 L1240.51,347.99 L1240.94,346.36 L1241.34,344.74 L1241.71,343.11 L1242.07,341.48 L1242.39,339.85 L1242.69,338.22 L1242.96,336.59 L1243.21,334.96 L1243.43,333.33 L1243.62,331.70 L1243.79,330.07 L1243.94,328.44 L1244.05,326.82 L1244.14,325.19 L1244.21,323.56 L1244.25,321.93 L1244.26,320.30 L1244.25,318.67 L1244.21,317.04 L1244.14,315.41 L1244.05,313.78 L1243.94,312.16 L1243.79,310.53 L1243.62,308.90 L1243.43,307.27 L1243.21,305.64 L1242.96,304.01 L1242.69,302.38 L1242.39,300.75 L1242.07,299.12 L1241.71,297.49 L1241.34,295.87 L1240.94,294.24 L1240.51,292.61 L1240.06,290.98 L1239.58,289.35 L1239.07,287.72 L1238.54,286.09 L1237.99,284.46 L1237.41,282.83 L1236.80,281.20 L1236.17,279.57 L1235.51,277.95 L1234.83,276.32 L1234.12,274.69 L1233.38,273.06 L1232.63,271.43 L1231.84,269.80 L1231.03,268.17 L1230.20,266.54 L1229.34,264.91 L1228.46,263.29 L1227.55,261.66 L1226.61,260.03 L1225.66,258.40 L1224.67,256.77 L1223.67,255.14 L1222.64,253.51 L1221.58,251.88 L1220.50,250.25 L1219.40,248.62 L1218.27,247.00 L1217.12,245.37 L1215.94,243.74 L1214.74,242.11 L1213.52,240.48 L1212.27,238.85 L1211.00,237.22 L1209.70,235.59 L1208.38,233.96 L1207.04,232.33 L1205.68,230.71 L1204.29,229.08 L1202.88,227.45 L1201.45,225.82 L1199.99,224.19 L1198.51,222.56 L1197.01,220.93 L1195.49,219.30 L1193.94,217.67 L1192.37,216.04 L1190.78,214.42 L1189.17,212.79 L1187.54,211.16 L1185.88,209.53 L1184.21,207.90 L1182.51,206.27 L1180.79,204.64 L1179.05,203.01 L1177.28,201.38 L1175.50,199.75 L1173.70,198.12 L1171.87,196.50 L1170.03,194.87 L1168.16,193.24 L1166.28,191.61 L1164.37,189.98 L1162.45,188.35 L1160.50,186.72 L1158.54,185.09 L1156.55,183.46 L1154.55,181.84 L1152.53,180.21 L1150.49,178.58 L1148.43,176.95 L1146.35,175.32 L1144.25,173.69 L1142.13,172.06 L1140.00,170.43 L1137.85,168.80 L1135.68,167.17 L1133.49,165.55 L1131.28,163.92 L1129.06,162.29 L1126.82,160.66 L1124.56,159.03 L1122.29,157.40 L1120.00,155.77 L1117.69,154.14 L1115.36,152.51 L1113.02,150.88 L1110.67,149.26 L1108.30,147.63 L1105.91,146.00 L1103.51,144.37 L1101.09,142.74 L1098.65,141.11 L1096.21,139.48 L1093.74,137.85 L1091.26,136.22 L1088.77,134.59 L1086.27,132.97 L1083.75,131.34 L1081.21,129.71 L1078.66,128.08 L1076.10,126.45 L1073.53,124.82 L1070.94,123.19 L1068.34,121.56 L1065.73,119.93 L1063.11,118.30 L1060.47,116.68 L1057.82,115.05 L1055.16,113.42 L1052.49,111.79 L1049.80,110.16 L1047.11,108.53 L1044.40,106.90 L1041.68,105.27 L1038.96,103.64 L1036.22,102.01 L1033.47,100.39 L1030.71,98.76 L1027.95,97.13 L1025.17,95.50 L1022.38,93.87 L1019.59,92.24 L1016.78,90.61 L1013.97,88.98 L1011.15,87.35 L1008.32,85.72 L1005.48,84.09 L1002.63,82.47 L999.78,80.84 L996.92,79.21 L994.05,77.58 L991.18,75.95 L988.29,74.32 L985.41,72.69 L982.51,71.06 L979.61,69.43 L976.71,67.81 L973.79,66.18 L970.88,64.55 L967.95,62.92 L965.03,61.29 L962.09,59.66 L959.16,58.03 L956.22,56.40 L953.27,54.77 L950.32,53.14 L947.37,51.51 L944.41,49.89 L941.45,48.26 L938.49,46.63 L935.53,45.00 L932.56,43.37 L929.59,41.74 L926.62,40.11 L923.65,38.48 L920.67,36.85 L917.69,35.23 L914.72,33.60 L911.74,31.97 L908.76,30.34 L905.78,28.71 L902.80,27.08"/>
<path d="M902.80,613.52 L905.35,611.89 L907.91,610.26 L910.46,608.63 L913.01,607.00 L915.57,605.38 L918.12,603.75 L920.67,602.12 L923.22,600.49 L925.76,598.86 L928.31,597.23 L930.85,595.60 L933.39,593.97 L935.93,592.34 L938.47,590.71 L941.00,589.09 L943.53,587.46 L946.06,585.83 L948.59,584.20 L951.11,582.57 L953.62,580.94 L956.14,579.31 L958.65,577.68 L961.15,576.05 L963.65,574.42 L966.15,572.80 L968.64,571.17 L971.12,569.54 L973.61,567.91 L976.08,566.28 L978.55,564.65 L981.02,563.02 L983.47,561.39 L985.93,559.76 L988.37,558.13 L990.81,556.50 L993.24,554.88 L995.67,553.25 L998.09,551.62 L1000.50,549.99 L1002.90,548.36 L1005.30,546.73 L1007.69,545.10 L1010.07,543.47 L1012.44,541.84 L1014.80,540.22 L1017.16,538.59 L1019.51,536.96 L1021.84,535.33 L1024.17,533.70 L1026.49,532.07 L1028.80,530.44 L1031.10,528.81 L1033.39,527.18 L1035.67,525.55 L1037.94,523.92 L1040.20,522.30 L1042.45,520.67 L1044.69,519.04 L1046.92,517.41 L1049.14,515.78 L1051.35,514.15 L1053.54,512.52 L1055.72,510.89 L1057.90,509.26 L1060.06,507.63 L1062.20,506.01 L1064.34,504.38 L1066.46,502.75 L1068.58,501.12 L1070.67,499.49 L1072.76,497.86 L1074.83,496.23 L1076.89,494.60 L1078.94,492.97 L1080.97,491.35 L1082.99,489.72 L1085.00,488.09 L1086.99,486.46 L1088.97,484.83 L1090.93,483.20 L1092.88,481.57 L1094.82,479.94 L1096.74,478.31 L1098.64,476.68 L1100.53,475.06 L1102.41,473.43 L1104.27,471.80 L1106.11,470.17 L1107.94,468.54 L1109.76,466.91 L1111.55,465.28 L1113.34,463.65 L1115.10,462.02 L1116.85,460.39 L1118.59,458.76 L1120.30,457.14 L1122.00,455.51 L1123.69,453.88 L1125.36,452.25 L1127.01,450.62 L1128.64,448.99 L1130.26,447.36 L1131.85,445.73 L1133.43,444.10 L1135.00,442.48 L1136.54,440.85 L1138.07,439.22 L1139.58,437.59 L1141.08,435.96 L1142.55,434.33 L1144.01,432.70 L1145.44,431.07 L1146.86,429.44 L1148.26,427.81 L1149.64,426.19 L1151.01,424.56 L1152.35,422.93 L1153.68,421.30 L1154.98,419.67 L1156.27,418.04 L1157.54,416.41 L1158.78,414.78 L1160.01,413.15 L1161.22,411.52 L1162.41,409.89 L1163.58,408.27 L1164.73,406.64 L1165.86,405.01 L1166.97,403.38 L1168.06,401.75 L1169.13,400.12 L1170.18,398.49 L1171.21,396.86 L1172.21,395.23 L1173.20,393.61 L1174.17,391.98 L1175.11,390.35 L1176.04,388.72 L1176.95,387.09 L1177.83,385.46 L1178.69,383.83 L1179.53,382.20 L1180.36,380.57 L1181.16,378.94 L1181.93,377.31 L1182.69,375.69 L1183.43,374.06 L1184.14,372.43 L1184.84,370.80 L1185.51,369.17 L1186.16,367.54 L1186.79,365.91 L1187.39,364.28 L1187.98,362.65 L1188.54,361.03 L1189.08,359.40 L1189.60,357.77 L1190.10,356.14 L1190.58,354.51 L1191.03,352.88 L1191.47,351.25 L1191.88,349.62 L1192.27,347.99 L1192.63,346.36 L1192.98,344.74 L1193.30,343.11 L1193.60,341.48 L1193.88,339.85 L1194.13,338.22 L1194.37,336.59 L1194.58,334.96 L1194.77,333.33 L1194.93,331.70 L1195.08,330.07 L1195.20,328.44 L1195.30,326.82 L1195.38,325.19 L1195.44,323.56 L1195.47,321.93 L1195.48,320.30 L1195.47,318.67 L1195.44,317.04 L1195.38,315.41 L1195.30,313.78 L1195.20,312.16 L1195.08,310.53 L1194.93,308.90 L1194.77,307.27 L1194.58,305.64 L1194.37,304.01 L1194.13,302.38 L1193.88,300.75 L1193.60,299.12 L1193.30,297.49 L1192.98,295.87 L1192.63,294.24 L1192.27,292.61 L1191.88,290.98 L1191.47,289.35 L1191.03,287.72 L1190.58,286.09 L1190.10,284.46 L1189.60,282.83 L1189.08,281.20 L1188.54,279.57 L1187.98,277.95 L1187.39,276.32 L1186.79,274.69 L1186.16,273.06 L1185.51,271.43 L1184.84,269.80 L1184.14,268.17 L1183.43,266.54 L1182.69,264.91 L1181.93,263.29 L1181.16,261.66 L1180.36,260.03 L1179.53,258.40 L1178.69,256.77 L1177.83,255.14 L1176.95,253.51 L1176.04,251.88 L1175.11,250.25 L1174.17,248.62 L1173.20,247.00 L1172.21,245.37 L1171.21,243.74 L1170.18,242.11 L1169.13,240.48 L1168.06,238.85 L1166.97,237.22 L1165.86,235.59 L1164.73,233.96 L1163.58,232.33 L1162.41,230.71 L1161.22,229.08 L1160.01,227.45 L1158.78,225.82 L1157.54,224.19 L1156.27,222.56 L1154.98,220.93 L1153.68,219.30 L1152.35,217.67 L1151.01,216.04 L1149.64,214.42 L1148.26,212.79 L1146.86,211.16 L1145.44,209.53 L1144.01,207.90 L1142.55,206.27 L1141.08,204.64 L1139.58,203.01 L1138.07,201.38 L1136.54,199.75 L1135.00,198.12 L1133.43,196.50 L1131.85,194.87 L1130.26,193.24 L1128.64,191.61 L1127.01,189.98 L1125.36,188.35 L1123.69,186.72 L1122.00,185.09 L1120.30,183.46 L1118.59,181.84 L1116.85,180.21 L1115.10,178.58 L1113.34,176.95 L1111.55,175.32 L1109.76,173.69 L1107.94,172.06 L1106.11,170.43 L1104.27,168.80 L1102.41,167.17 L1100.53,165.55 L1098.64,163.92 L1096.74,162.29 L1094.82,160.66 L1092.88,159.03 L1090.93,157.40 L1088.97,155.77 L1086.99,154.14 L1085.00,152.51 L1082.99,150.88 L1080.97,149.26 L1078.94,147.63 L1076.89,146.00 L1074.83,144.37 L1072.76,142.74 L1070.67,141.11 L1068.58,139.48 L1066.46,137.85 L1064.34,136.22 L1062.20,134.59 L1060.06,132.97 L1057.90,131.34 L1055.72,129.71 L1053.54,128.08 L1051.35,126.45 L1049.14,124.82 L1046.92,123.19 L1044.69,121.56 L1042.45,119.93 L1040.20,118.30 L1037.94,116.68 L1035.67,115.05 L1033.39,113.42 L1031.10,111.79 L1028.80,110.16 L1026.49,108.53 L1024.17,106.90 L1021.84,105.27 L1019.51,103.64 L1017.16,102.01 L1014.80,100.39 L1012.44,98.76 L1010.07,97.13 L1007.69,95.50 L1005.30,93.87 L1002.90,92.24 L1000.50,90.61 L998.09,88.98 L995.67,87.35 L993.24,85.72 L990.81,84.09 L988.37,82.47 L985.93,80.84 L983.47,79.21 L981.02,77.58 L978.55,75.95 L976.08,74.32 L973.61,72.69 L971.12,71.06 L968.64,69.43 L966.15,67.81 L963.65,66.18 L961.15,64.55 L958.65,62.92 L956.14,61.29 L953.62,59.66 L951.11,58.03 L948.59,56.40 L946.06,54.77 L943.53,53.14 L941.00,51.51 L938.47,49.89 L935.93,48.26 L933.39,46.63 L930.85,45.00 L928.31,43.37 L925.76,41.74 L923.22,40.11 L920.67,38.48 L918.12,36.85 L915.57,35.23 L913.01,33.60 L910.46,31.97 L907.91,30.34 L905.35,28.71 L902.80,27.08"/>
<path d="M902.80,613.52 L904.93,611.89 L907.06,610.26 L909.18,608.63 L911.31,607.00 L913.44,605.38 L915.56,603.75 L917.69,602.12 L919.81,600.49 L921.94,598.86 L924.06,597.23 L926.18,595.60 L928.29,593.97 L930.41,592.34 L932.52,590.71 L934.64,589.09 L936.74,587.46 L938.85,585.83 L940.95,584.20 L943.06,582.57 L945.15,580.94 L947.25,579.31 L949.34,577.68 L951.43,576.05 L953.51,574.42 L955.59,572.80 L957.67,571.17 L959.74,569.54 L961.80,567.91 L963.87,566.28 L965.93,564.65 L967.98,563.02 L970.03,561.39 L972.07,559.76 L974.11,558.13 L976.14,556.50 L978.17,554.88 L980.19,553.25 L982.21,551.62 L984.22,549.99 L986.22,548.36 L988.22,546.73 L990.21,545.10 L992.19,543.47 L994.17,541.84 L996.14,540.22 L998.10,538.59 L1000.05,536.96 L1002.00,535.33 L1003.94,533.70 L1005.88,532.07 L1007.80,530.44 L1009.72,528.81 L1011.63,527.18 L1013.53,525.55 L1015.42,523.92 L1017.30,522.30 L1019.18,520.67 L1021.05,519.04 L1022.90,517.41 L1024.75,515.78 L1026.59,514.15 L1028.42,512.52 L1030.24,510.89 L1032.05,509.26 L1033.85,507.63 L1035.64,506.01 L1037.42,504.38 L1039.19,502.75 L1040.95,501.12 L1042.70,499.49 L1044.43,497.86 L1046.16,496.23 L1047.88,494.60 L1049.58,492.97 L1051.28,491.35 L1052.96,489.72 L1054.63,488.09 L1056.29,486.46 L1057.94,484.83 L1059.58,483.20 L1061.20,481.57 L1062.81,479.94 L1064.41,478.31 L1066.00,476.68 L1067.58,475.06 L1069.14,473.43 L1070.69,471.80 L1072.23,470.17 L1073.75,468.54 L1075.26,466.91 L1076.76,465.28 L1078.25,463.65 L1079.72,462.02 L1081.18,460.39 L1082.62,458.76 L1084.05,457.14 L1085.47,455.51 L1086.87,453.88 L1088.26,452.25 L1089.64,450.62 L1091.00,448.99 L1092.35,447.36 L1093.68,445.73 L1095.00,444.10 L1096.30,442.48 L1097.59,440.85 L1098.86,439.22 L1100.12,437.59 L1101.36,435.96 L1102.59,434.33 L1103.80,432.70 L1105.00,431.07 L1106.18,429.44 L1107.35,427.81 L1108.50,426.19 L1109.64,424.56 L1110.76,422.93 L1111.86,421.30 L1112.95,419.67 L1114.02,418.04 L1115.08,416.41 L1116.12,414.78 L1117.14,413.15 L1118.15,411.52 L1119.14,409.89 L1120.12,408.27 L1121.07,406.64 L1122.02,405.01 L1122.94,403.38 L1123.85,401.75 L1124.74,400.12 L1125.61,398.49 L1126.47,396.86 L1127.31,395.23 L1128.13,393.61 L1128.94,391.98 L1129.73,390.35 L1130.50,388.72 L1131.25,387.09 L1131.99,385.46 L1132.71,383.83 L1133.41,382.20 L1134.10,380.57 L1134.76,378.94 L1135.41,377.31 L1136.04,375.69 L1136.66,374.06 L1137.25,372.43 L1137.83,370.80 L1138.39,369.17 L1138.93,367.54 L1139.46,365.91 L1139.96,364.28 L1140.45,362.65 L1140.92,361.03 L1141.37,359.40 L1141.80,357.77 L1142.22,356.14 L1142.62,354.51 L1142.99,352.88 L1143.36,351.25 L1143.70,349.62 L1144.02,347.99 L1144.33,346.36 L1144.61,344.74 L1144.88,343.11 L1145.13,341.48 L1145.36,339.85 L1145.58,338.22 L1145.77,336.59 L1145.95,334.96 L1146.11,333.33 L1146.25,331.70 L1146.37,330.07 L1146.47,328.44 L1146.55,326.82 L1146.62,325.19 L1146.66,323.56 L1146.69,321.93 L1146.70,320.30 L1146.69,318.67 L1146.66,317.04 L1146.62,315.41 L1146.55,313.78 L1146.47,312.16 L1146.37,310.53 L1146.25,308.90 L1146.11,307.27 L1145.95,305.64 L1145.77,304.01 L1145.58,302.38 L1145.36,300.75 L1145.13,299.12 L1144.88,297.49 L1144.61,295.87 L1144.33,294.24 L1144.02,292.61 L1143.70,290.98 L1143.36,289.35 L1142.99,287.72 L1142.62,286.09 L1142.22,284.46 L1141.80,282.83 L1141.37,281.20 L1140.92,279.57 L1140.45,277.95 L1139.96,276.32 L1139.46,274.69 L1138.93,273.06 L1138.39,271.43 L1137.83,269.80 L1137.25,268.17 L1136.66,266.54 L1136.04,264.91 L1135.41,263.29 L1134.76,261.66 L1134.10,260.03 L1133.41,258.40 L1132.71,256.77 L1131.99,255.14 L1131.25,253.51 L1130.50,251.88 L1129.73,250.25 L1128.94,248.62 L1128.13,247.00 L1127.31,245.37 L1126.47,243.74 L1125.61,242.11 L1124.74,240.48 L1123.85,238.85 L1122.94,237.22 L1122.02,235.59 L1121.07,233.96 L1120.12,232.33 L1119.14,230.71 L1118.15,229.08 L1117.14,227.45 L1116.12,225.82 L1115.08,224.19 L1114.02,222.56 L1112.95,220.93 L1111.86,219.30 L1110.76,217.67 L1109.64,216.04 L1108.50,214.42 L1107.35,212.79 L1106.18,211.16 L1105.00,209.53 L1103.80,207.90 L1102.59,206.27 L1101.36,204.64 L1100.12,203.01 L1098.86,201.38 L1097.59,199.75 L1096.30,198.12 L1095.00,196.50 L1093.68,194.87 L1092.35,193.24 L1091.00,191.61 L1089.64,189.98 L1088.26,188.35 L1086.87,186.72 L1085.47,185.09 L1084.05,183.46 L1082.62,181.84 L1081.18,180.21 L1079.72,178.58 L1078.25,176.95 L1076.76,175.32 L1075.26,173.69 L1073.75,172.06 L1072.23,170.43 L1070.69,168.80 L1069.14,167.17 L1067.58,165.55 L1066.00,163.92 L1064.41,162.29 L1062.81,160.66 L1061.20,159.03 L1059.58,157.40 L1057.94,155.77 L1056.29,154.14 L1054.63,152.51 L1052.96,150.88 L1051.28,149.26 L1049.58,147.63 L1047.88,146.00 L1046.16,144.37 L1044.43,142.74 L1042.70,141.11 L1040.95,139.48 L1039.19,137.85 L1037.42,136.22 L1035.64,134.59 L1033.85,132.97 L1032.05,131.34 L1030.24,129.71 L1028.42,128.08 L1026.59,126.45 L1024.75,124.82 L1022.90,123.19 L1021.05,121.56 L1019.18,119.93 L1017.30,118.30 L1015.42,116.68 L1013.53,115.05 L1011.63,113.42 L1009.72,111.79 L1007.80,110.16 L1005.88,108.53 L1003.94,106.90 L1002.00,105.27 L1000.05,103.64 L998.10,102.01 L996.14,100.39 L994.17,98.76 L992.19,97.13 L990.21,95.50 L988.22,93.87 L986.22,92.24 L984.22,90.61 L982.21,88.98 L980.19,87.35 L978.17,85.72 L976.14,84.09 L974.11,82.47 L972.07,80.84 L970.03,79.21 L967.98,77.58 L965.93,75.95 L963.87,74.32 L961.80,72.69 L959.74,71.06 L957.67,69.43 L955.59,67.81 L953.51,66.18 L951.43,64.55 L949.34,62.92 L947.25,61.29 L945.15,59.66 L943.06,58.03 L940.95,56.40 L938.85,54.77 L936.74,53.14 L934.64,51.51 L932.52,49.89 L930.41,48.26 L928.29,46.63 L926.18,45.00 L924.06,43.37 L921.94,41.74 L919.81,40.11 L917.69,38.48 L915.56,36.85 L913.44,35.23 L911.31,33.60 L909.18,31.97 L907.06,30.34 L904.93,28.71 L902.80,27.08"/>
<path d="M902.80,613.52 L904.50,611.89 L906.21,610.26 L907.91,608.63 L909.61,607.00 L911.31,605.38 L913.01,603.75 L914.71,602.12 L916.41,600.49 L918.11,598.86 L919.81,597.23 L921.50,595.60 L923.20,593.97 L924.89,592.34 L926.58,590.71 L928.27,589.09 L929.96,587.46 L931.64,585.83 L933.32,584.20 L935.00,582.57 L936.68,580.94 L938.36,579.31 L940.03,577.68 L941.70,576.05 L943.37,574.42 L945.03,572.80 L946.69,571.17 L948.35,569.54 L950.00,567.91 L951.65,566.28 L953.30,564.65 L954.94,563.02 L956.58,561.39 L958.22,559.76 L959.85,558.13 L961.47,556.50 L963.10,554.88 L964.71,553.25 L966.32,551.62 L967.93,549.99 L969.53,548.36 L971.13,546.73 L972.72,545.10 L974.31,543.47 L975.89,541.84 L977.47,540.22 L979.04,538.59 L980.60,536.96 L982.16,535.33 L983.71,533.70 L985.26,532.07 L986.80,530.44 L988.33,528.81 L989.86,527.18 L991.38,525.55 L992.90,523.92 L994.40,522.30 L995.90,520.67 L997.40,519.04 L998.88,517.41 L1000.36,515.78 L1001.83,514.15 L1003.29,512.52 L1004.75,510.89 L1006.20,509.26 L1007.64,507.63 L1009.07,506.01 L1010.49,504.38 L1011.91,502.75 L1013.32,501.12 L1014.72,499.49 L1016.11,497.86 L1017.49,496.23 L1018.86,494.60 L1020.23,492.97 L1021.58,491.35 L1022.93,489.72 L1024.27,488.09 L1025.59,486.46 L1026.91,484.83 L1028.22,483.20 L1029.52,481.57 L1030.81,479.94 L1032.09,478.31 L1033.36,476.68 L1034.62,475.06 L1035.87,473.43 L1037.11,471.80 L1038.34,470.17 L1039.56,468.54 L1040.77,466.91 L1041.97,465.28 L1043.16,463.65 L1044.34,462.02 L1045.50,460.39 L1046.66,458.76 L1047.80,457.14 L1048.94,455.51 L1050.06,453.88 L1051.17,452.25 L1052.27,450.62 L1053.36,448.99 L1054.44,447.36 L1055.50,445.73 L1056.56,444.10 L1057.60,442.48 L1058.63,440.85 L1059.65,439.22 L1060.66,437.59 L1061.65,435.96 L1062.63,434.33 L1063.60,432.70 L1064.56,431.07 L1065.51,429.44 L1066.44,427.81 L1067.36,426.19 L1068.27,424.56 L1069.17,422.93 L1070.05,421.30 L1070.92,419.67 L1071.78,418.04 L1072.62,416.41 L1073.46,414.78 L1074.27,413.15 L1075.08,411.52 L1075.87,409.89 L1076.65,408.27 L1077.42,406.64 L1078.17,405.01 L1078.91,403.38 L1079.64,401.75 L1080.35,400.12 L1081.05,398.49 L1081.74,396.86 L1082.41,395.23 L1083.07,393.61 L1083.71,391.98 L1084.34,390.35 L1084.96,388.72 L1085.56,387.09 L1086.15,385.46 L1086.73,383.83 L1087.29,382.20 L1087.84,380.57 L1088.37,378.94 L1088.89,377.31 L1089.39,375.69 L1089.88,374.06 L1090.36,372.43 L1090.82,370.80 L1091.27,369.17 L1091.70,367.54 L1092.12,365.91 L1092.53,364.28 L1092.92,362.65 L1093.29,361.03 L1093.66,359.40 L1094.00,357.77 L1094.34,356.14 L1094.65,354.51 L1094.96,352.88 L1095.24,351.25 L1095.52,349.62 L1095.78,347.99 L1096.02,346.36 L1096.25,344.74 L1096.47,343.11 L1096.67,341.48 L1096.85,339.85 L1097.02,338.22 L1097.18,336.59 L1097.32,334.96 L1097.44,333.33 L1097.56,331.70 L1097.65,330.07 L1097.73,328.44 L1097.80,326.82 L1097.85,325.19 L1097.89,323.56 L1097.91,321.93 L1097.92,320.30 L1097.91,318.67 L1097.89,317.04 L1097.85,315.41 L1097.80,313.78 L1097.73,312.16 L1097.65,310.53 L1097.56,308.90 L1097.44,307.27 L1097.32,305.64 L1097.18,304.01 L1097.02,302.38 L1096.85,300.75 L1096.67,299.12 L1096.47,297.49 L1096.25,295.87 L1096.02,294.24 L1095.78,292.61 L1095.52,290.98 L1095.24,289.35 L1094.96,287.72 L1094.65,286.09 L1094.34,284.46 L1094.00,282.83 L1093.66,281.20 L1093.29,279.57 L1092.92,277.95 L1092.53,276.32 L1092.12,274.69 L1091.70,273.06 L1091.27,271.43 L1090.82,269.80 L1090.36,268.17 L1089.88,266.54 L1089.39,264.91 L1088.89,263.29 L1088.37,261.66 L1087.84,260.03 L1087.29,258.40 L1086.73,256.77 L1086.15,255.14 L1085.56,253.51 L1084.96,251.88 L1084.34,250.25 L1083.71,248.62 L1083.07,247.00 L1082.41,245.37 L1081.74,243.74 L1081.05,242.11 L1080.35,240.48 L1079.64,238.85 L1078.91,237.22 L1078.17,235.59 L1077.42,233.96 L1076.65,232.33 L1075.87,230.71 L1075.08,229.08 L1074.27,227.45 L1073.46,225.82 L1072.62,224.19 L1071.78,222.56 L1070.92,220.93 L1070.05,219.30 L1069.17,217.67 L1068.27,216.04 L1067.36,214.42 L1066.44,212.79 L1065.51,211.16 L1064.56,209.53 L1063.60,207.90 L1062.63,206.27 L1061.65,204.64 L1060.66,203.01 L1059.65,201.38 L1058.63,199.75 L1057.60,198.12 L1056.56,196.50 L1055.50,194.87 L1054.44,193.24 L1053.36,191.61 L1052.27,189.98 L1051.17,188.35 L1050.06,186.72 L1048.94,185.09 L1047.80,183.46 L1046.66,181.84 L1045.50,180.21 L1044.34,178.58 L1043.16,176.95 L1041.97,175.32 L1040.77,173.69 L1039.56,172.06 L1038.34,170.43 L1037.11,168.80 L1035.87,167.17 L1034.62,165.55 L1033.36,163.92 L1032.09,162.29 L1030.81,160.66 L1029.52,159.03 L1028.22,157.40 L1026.91,155.77 L1025.59,154.14 L1024.27,152.51 L1022.93,150.88 L1021.58,149.26 L1020.23,147.63 L1018.86,146.00 L1017.49,144.37 L1016.11,142.74 L1014.72,141.11 L1013.32,139.48 L1011.91,137.85 L1010.49,136.22 L1009.07,134.59 L1007.64,132.97 L1006.20,131.34 L1004.75,129.71 L1003.29,128.08 L1001.83,126.45 L1000.36,124.82 L998.88,123.19 L997.40,121.56 L995.90,119.93 L994.40,118.30 L992.90,116.68 L991.38,115.05 L989.86,113.42 L988.33,111.79 L986.80,110.16 L985.26,108.53 L983.71,106.90 L982.16,105.27 L980.60,103.64 L979.04,102.01 L977.47,100.39 L975.89,98.76 L974.31,97.13 L972.72,95.50 L971.13,93.87 L969.53,92.24 L967.93,90.61 L966.32,88.98 L964.71,87.35 L963.10,85.72 L961.47,84.09 L959.85,82.47 L958.22,80.84 L956.58,79.21 L954.94,77.58 L953.30,75.95 L951.65,74.32 L950.00,72.69 L948.35,71.06 L946.69,69.43 L945.03,67.81 L943.37,66.18 L941.70,64.55 L940.03,62.92 L938.36,61.29 L936.68,59.66 L935.00,58.03 L933.32,56.40 L931.64,54.77 L929.96,53.14 L928.27,51.51 L926.58,49.89 L924.89,48.26 L923.20,46.63 L921.50,45.00 L919.81,43.37 L918.11,41.74 L916.41,40.11 L914.71,38.48 L913.01,36.85 L911.31,35.23 L909.61,33.60 L907.91,31.97 L906.21,30.34 L904.50,28.71 L902.80,27.08"/>
<path d="M902.80,613.52 L904.08,611.89 L905.35,610.26 L906.63,608.63 L907.91,607.00 L909.18,605.38 L910.46,603.75 L911.73,602.12 L913.01,600.49 L914.28,598.86 L915.55,597.23 L916.83,595.60 L918.10,593.97 L919.37,592.34 L920.63,590.71 L921.90,589.09 L923.17,587.46 L924.43,585.83 L925.69,584.20 L926.95,582.57 L928.21,580.94 L929.47,579.31 L930.72,577.68 L931.98,576.05 L933.23,574.42 L934.47,572.80 L935.72,571.17 L936.96,569.54 L938.20,567.91 L939.44,566.28 L940.68,564.65 L941.91,563.02 L943.14,561.39 L944.36,559.76 L945.59,558.13 L946.81,556.50 L948.02,554.88 L949.23,553.25 L950.44,551.62 L951.65,549.99 L952.85,548.36 L954.05,546.73 L955.24,545.10 L956.43,543.47 L957.62,541.84 L958.80,540.22 L959.98,538.59 L961.15,536.96 L962.32,535.33 L963.49,533.70 L964.65,532.07 L965.80,530.44 L966.95,528.81 L968.10,527.18 L969.24,525.55 L970.37,523.92 L971.50,522.30 L972.63,520.67 L973.75,519.04 L974.86,517.41 L975.97,515.78 L977.07,514.15 L978.17,512.52 L979.26,510.89 L980.35,509.26 L981.43,507.63 L982.50,506.01 L983.57,504.38 L984.63,502.75 L985.69,501.12 L986.74,499.49 L987.78,497.86 L988.82,496.23 L989.85,494.60 L990.87,492.97 L991.89,491.35 L992.90,489.72 L993.90,488.09 L994.89,486.46 L995.88,484.83 L996.87,483.20 L997.84,481.57 L998.81,479.94 L999.77,478.31 L1000.72,476.68 L1001.67,475.06 L1002.60,473.43 L1003.53,471.80 L1004.46,470.17 L1005.37,468.54 L1006.28,466.91 L1007.18,465.28 L1008.07,463.65 L1008.95,462.02 L1009.83,460.39 L1010.69,458.76 L1011.55,457.14 L1012.40,455.51 L1013.24,453.88 L1014.08,452.25 L1014.90,450.62 L1015.72,448.99 L1016.53,447.36 L1017.33,445.73 L1018.12,444.10 L1018.90,442.48 L1019.67,440.85 L1020.44,439.22 L1021.19,437.59 L1021.94,435.96 L1022.67,434.33 L1023.40,432.70 L1024.12,431.07 L1024.83,429.44 L1025.53,427.81 L1026.22,426.19 L1026.90,424.56 L1027.58,422.93 L1028.24,421.30 L1028.89,419.67 L1029.53,418.04 L1030.17,416.41 L1030.79,414.78 L1031.41,413.15 L1032.01,411.52 L1032.61,409.89 L1033.19,408.27 L1033.76,406.64 L1034.33,405.01 L1034.88,403.38 L1035.43,401.75 L1035.96,400.12 L1036.49,398.49 L1037.00,396.86 L1037.51,395.23 L1038.00,393.61 L1038.48,391.98 L1038.96,390.35 L1039.42,388.72 L1039.87,387.09 L1040.31,385.46 L1040.75,383.83 L1041.17,382.20 L1041.58,380.57 L1041.98,378.94 L1042.37,377.31 L1042.75,375.69 L1043.11,374.06 L1043.47,372.43 L1043.82,370.80 L1044.15,369.17 L1044.48,367.54 L1044.79,365.91 L1045.10,364.28 L1045.39,362.65 L1045.67,361.03 L1045.94,359.40 L1046.20,357.77 L1046.45,356.14 L1046.69,354.51 L1046.92,352.88 L1047.13,351.25 L1047.34,349.62 L1047.53,347.99 L1047.72,346.36 L1047.89,344.74 L1048.05,343.11 L1048.20,341.48 L1048.34,339.85 L1048.47,338.22 L1048.58,336.59 L1048.69,334.96 L1048.78,333.33 L1048.87,331.70 L1048.94,330.07 L1049.00,328.44 L1049.05,326.82 L1049.09,325.19 L1049.12,323.56 L1049.13,321.93 L1049.14,320.30 L1049.13,318.67 L1049.12,317.04 L1049.09,315.41 L1049.05,313.78 L1049.00,312.16 L1048.94,310.53 L1048.87,308.90 L1048.78,307.27 L1048.69,305.64 L1048.58,304.01 L1048.47,302.38 L1048.34,300.75 L1048.20,299.12 L1048.05,297.49 L1047.89,295.87 L1047.72,294.24 L1047.53,292.61 L1047.34,290.98 L1047.13,289.35 L1046.92,287.72 L1046.69,286.09 L1046.45,284.46 L1046.20,282.83 L1045.94,281.20 L1045.67,279.57 L1045.39,277.95 L1045.10,276.32 L1044.79,274.69 L1044.48,273.06 L1044.15,271.43 L1043.82,269.80 L1043.47,268.17 L1043.11,266.54 L1042.75,264.91 L1042.37,263.29 L1041.98,261.66 L1041.58,260.03 L1041.17,258.40 L1040.75,256.77 L1040.31,255.14 L1039.87,253.51 L1039.42,251.88 L1038.96,250.25 L1038.48,248.62 L1038.00,247.00 L1037.51,245.37 L1037.00,243.74 L1036.49,242.11 L1035.96,240.48 L1035.43,238.85 L1034.88,237.22 L1034.33,235.59 L1033.76,233.96 L1033.19,232.33 L1032.61,230.71 L1032.01,229.08 L1031.41,227.45 L1030.79,225.82 L1030.17,224.19 L1029.53,222.56 L1028.89,220.93 L1028.24,219.30 L1027.58,217.67 L1026.90,216.04 L1026.22,214.42 L1025.53,212.79 L1024.83,211.16 L1024.12,209.53 L1023.40,207.90 L1022.67,206.27 L1021.94,204.64 L1021.19,203.01 L1020.44,201.38 L1019.67,199.75 L1018.90,198.12 L1018.12,196.50 L1017.33,194.87 L1016.53,193.24 L1015.72,191.61 L1014.90,189.98 L1014.08,188.35 L1013.24,186.72 L1012.40,185.09 L1011.55,183.46 L1010.69,181.84 L1009.83,180.21 L1008.95,178.58 L1008.07,176.95 L1007.18,175.32 L1006.28,173.69 L1005.37,172.06 L1004.46,170.43 L1003.53,168.80 L1002.60,167.17 L1001.67,165.55 L1000.72,163.92 L999.77,162.29 L998.81,160.66 L997.84,159.03 L996.87,157.40 L995.88,155.77 L994.89,154.14 L993.90,152.51 L992.90,150.88 L991.89,149.26 L990.87,147.63 L989.85,146.00 L988.82,144.37 L987.78,142.74 L986.74,141.11 L985.69,139.48 L984.63,137.85 L983.57,136.22 L982.50,134.59 L981.43,132.97 L980.35,131.34 L979.26,129.71 L978.17,128.08 L977.07,126.45 L975.97,124.82 L974.86,123.19 L973.75,121.56 L972.63,119.93 L971.50,118.30 L970.37,116.68 L969.24,115.05 L968.10,113.42 L966.95,111.79 L965.80,110.16 L964.65,108.53 L963.49,106.90 L962.32,105.27 L961.15,103.64 L959.98,102.01 L958.80,100.39 L957.62,98.76 L956.43,97.13 L955.24,95.50 L954.05,93.87 L952.85,92.24 L951.65,90.61 L950.44,88.98 L949.23,87.35 L948.02,85.72 L946.81,84.09 L945.59,82.47 L944.36,80.84 L943.14,79.21 L941.91,77.58 L940.68,75.95 L939.44,74.32 L938.20,72.69 L936.96,71.06 L935.72,69.43 L934.47,67.81 L933.23,66.18 L931.98,64.55 L930.72,62.92 L929.47,61.29 L928.21,59.66 L926.95,58.03 L925.69,56.40 L924.43,54.77 L923.17,53.14 L921.90,51.51 L920.63,49.89 L919.37,48.26 L918.10,46.63 L916.83,45.00 L915.55,43.37 L914.28,41.74 L913.01,40.11 L911.73,38.48 L910.46,36.85 L909.18,35.23 L907.91,33.60 L906.63,31.97 L905.35,30.34 L904.08,28.71 L902.80,27.08"/>
<path d="M902.80,613.52 L903.65,611.89 L904.50,610.26 L905.35,608.63 L906.20,607.00 L907.06,605.38 L907.91,603.75 L908.76,602.12 L909.61,600.49 L910.45,598.86 L911.30,597.23 L912.15,595.60 L913.00,593.97 L913.84,592.34 L914.69,590.71 L915.53,589.09 L916.38,587.46 L917.22,585.83 L918.06,584.20 L918.90,582.57 L919.74,580.94 L920.58,579.31 L921.42,577.68 L922.25,576.05 L923.08,574.42 L923.92,572.80 L924.75,571.17 L925.57,569.54 L926.40,567.91 L927.23,566.28 L928.05,564.65 L928.87,563.02 L929.69,561.39 L930.51,559.76 L931.32,558.13 L932.14,556.50 L932.95,554.88 L933.76,553.25 L934.56,551.62 L935.37,549.99 L936.17,548.36 L936.97,546.73 L937.76,545.10 L938.56,543.47 L939.35,541.84 L940.13,540.22 L940.92,538.59 L941.70,536.96 L942.48,535.33 L943.26,533.70 L944.03,532.07 L944.80,530.44 L945.57,528.81 L946.33,527.18 L947.09,525.55 L947.85,523.92 L948.60,522.30 L949.35,520.67 L950.10,519.04 L950.84,517.41 L951.58,515.78 L952.32,514.15 L953.05,512.52 L953.77,510.89 L954.50,509.26 L955.22,507.63 L955.93,506.01 L956.65,504.38 L957.35,502.75 L958.06,501.12 L958.76,499.49 L959.45,497.86 L960.14,496.23 L960.83,494.60 L961.51,492.97 L962.19,491.35 L962.86,489.72 L963.53,488.09 L964.20,486.46 L964.86,484.83 L965.51,483.20 L966.16,481.57 L966.81,479.94 L967.45,478.31 L968.08,476.68 L968.71,475.06 L969.34,473.43 L969.96,471.80 L970.57,470.17 L971.18,468.54 L971.79,466.91 L972.38,465.28 L972.98,463.65 L973.57,462.02 L974.15,460.39 L974.73,458.76 L975.30,457.14 L975.87,455.51 L976.43,453.88 L976.99,452.25 L977.54,450.62 L978.08,448.99 L978.62,447.36 L979.15,445.73 L979.68,444.10 L980.20,442.48 L980.71,440.85 L981.22,439.22 L981.73,437.59 L982.23,435.96 L982.72,434.33 L983.20,432.70 L983.68,431.07 L984.15,429.44 L984.62,427.81 L985.08,426.19 L985.54,424.56 L985.98,422.93 L986.43,421.30 L986.86,419.67 L987.29,418.04 L987.71,416.41 L988.13,414.78 L988.54,413.15 L988.94,411.52 L989.34,409.89 L989.73,408.27 L990.11,406.64 L990.49,405.01 L990.86,403.38 L991.22,401.75 L991.58,400.12 L991.93,398.49 L992.27,396.86 L992.60,395.23 L992.93,393.61 L993.26,391.98 L993.57,390.35 L993.88,388.72 L994.18,387.09 L994.48,385.46 L994.76,383.83 L995.04,382.20 L995.32,380.57 L995.59,378.94 L995.84,377.31 L996.10,375.69 L996.34,374.06 L996.58,372.43 L996.81,370.80 L997.04,369.17 L997.25,367.54 L997.46,365.91 L997.66,364.28 L997.86,362.65 L998.05,361.03 L998.23,359.40 L998.40,357.77 L998.57,356.14 L998.73,354.51 L998.88,352.88 L999.02,351.25 L999.16,349.62 L999.29,347.99 L999.41,346.36 L999.53,344.74 L999.63,343.11 L999.73,341.48 L999.83,339.85 L999.91,338.22 L999.99,336.59 L1000.06,334.96 L1000.12,333.33 L1000.18,331.70 L1000.23,330.07 L1000.27,328.44 L1000.30,326.82 L1000.33,325.19 L1000.35,323.56 L1000.36,321.93 L1000.36,320.30 L1000.36,318.67 L1000.35,317.04 L1000.33,315.41 L1000.30,313.78 L1000.27,312.16 L1000.23,310.53 L1000.18,308.90 L1000.12,307.27 L1000.06,305.64 L999.99,304.01 L999.91,302.38 L999.83,300.75 L999.73,299.12 L999.63,297.49 L999.53,295.87 L999.41,294.24 L999.29,292.61 L999.16,290.98 L999.02,289.35 L998.88,287.72 L998.73,286.09 L998.57,284.46 L998.40,282.83 L998.23,281.20 L998.05,279.57 L997.86,277.95 L997.66,276.32 L997.46,274.69 L997.25,273.06 L997.04,271.43 L996.81,269.80 L996.58,268.17 L996.34,266.54 L996.10,264.91 L995.84,263.29 L995.59,261.66 L995.32,260.03 L995.04,258.40 L994.76,256.77 L994.48,255.14 L994.18,253.51 L993.88,251.88 L993.57,250.25 L993.26,248.62 L992.93,247.00 L992.60,245.37 L992.27,243.74 L991.93,242.11 L991.58,240.48 L991.22,238.85 L990.86,237.22 L990.49,235.59 L990.11,233.96 L989.73,232.33 L989.34,230.71 L988.94,229.08 L988.54,227.45 L988.13,225.82 L987.71,224.19 L987.29,222.56 L986.86,220.93 L986.43,219.30 L985.98,217.67 L985.54,216.04 L985.08,214.42 L984.62,212.79 L984.15,211.16 L983.68,209.53 L983.20,207.90 L982.72,206.27 L982.23,204.64 L981.73,203.01 L981.22,201.38 L980.71,199.75 L980.20,198.12 L979.68,196.50 L979.15,194.87 L978.62,193.24 L978.08,191.61 L977.54,189.98 L976.99,188.35 L976.43,186.72 L975.87,185.09 L975.30,183.46 L974.73,181.84 L974.15,180.21 L973.57,178.58 L972.98,176.95 L972.38,175.32 L971.79,173.69 L971.18,172.06 L970.57,170.43 L969.96,168.80 L969.34,167.17 L968.71,165.55 L968.08,163.92 L967.45,162.29 L966.81,160.66 L966.16,159.03 L965.51,157.40 L964.86,155.77 L964.20,154.14 L963.53,152.51 L962.86,150.88 L962.19,149.26 L961.51,147.63 L960.83,146.00 L960.14,144.37 L959.45,142.74 L958.76,141.11 L958.06,139.48 L957.35,137.85 L956.65,136.22 L955.93,134.59 L955.22,132.97 L954.50,131.34 L953.77,129.71 L953.05,128.08 L952.32,126.45 L951.58,124.82 L950.84,123.19 L950.10,121.56 L949.35,119.93 L948.60,118.30 L947.85,116.68 L947.09,115.05 L946.33,113.42 L945.57,111.79 L944.80,110.16 L944.03,108.53 L943.26,106.90 L942.48,105.27 L941.70,103.64 L940.92,102.01 L940.13,100.39 L939.35,98.76 L938.56,97.13 L937.76,95.50 L936.97,93.87 L936.17,92.24 L935.37,90.61 L934.56,88.98 L933.76,87.35 L932.95,85.72 L932.14,84.09 L931.32,82.47 L930.51,80.84 L929.69,79.21 L928.87,77.58 L928.05,75.95 L927.23,74.32 L926.40,72.69 L925.57,71.06 L924.75,69.43 L923.92,67.81 L923.08,66.18 L922.25,64.55 L921.42,62.92 L920.58,61.29 L919.74,59.66 L918.90,58.03 L918.06,56.40 L917.22,54.77 L916.38,53.14 L915.53,51.51 L914.69,49.89 L913.84,48.26 L913.00,46.63 L912.15,45.00 L911.30,43.37 L910.45,41.74 L909.61,40.11 L908.76,38.48 L907.91,36.85 L907.06,35.23 L906.20,33.60 L905.35,31.97 L904.50,30.34 L903.65,28.71 L902.80,27.08"/>
<path d="M902.80,613.52 L903.23,611.89 L903.65,610.26 L904.08,608.63 L904.50,607.00 L904.93,605.38 L905.35,603.75 L905.78,602.12 L906.20,600.49 L906.63,598.86 L907.05,597.23 L907.48,595.60 L907.90,593.97 L908.32,592.34 L908.74,590.71 L909.17,589.09 L909.59,587.46 L910.01,585.83 L910.43,584.20 L910.85,582.57 L911.27,580.94 L911.69,579.31 L912.11,577.68 L912.53,576.05 L912.94,574.42 L913.36,572.80 L913.77,571.17 L914.19,569.54 L914.60,567.91 L915.01,566.28 L915.43,564.65 L915.84,563.02 L916.25,561.39 L916.65,559.76 L917.06,558.13 L917.47,556.50 L917.87,554.88 L918.28,553.25 L918.68,551.62 L919.08,549.99 L919.48,548.36 L919.88,546.73 L920.28,545.10 L920.68,543.47 L921.07,541.84 L921.47,540.22 L921.86,538.59 L922.25,536.96 L922.64,535.33 L923.03,533.70 L923.42,532.07 L923.80,530.44 L924.18,528.81 L924.57,527.18 L924.95,525.55 L925.32,523.92 L925.70,522.30 L926.08,520.67 L926.45,519.04 L926.82,517.41 L927.19,515.78 L927.56,514.15 L927.92,512.52 L928.29,510.89 L928.65,509.26 L929.01,507.63 L929.37,506.01 L929.72,504.38 L930.08,502.75 L930.43,501.12 L930.78,499.49 L931.13,497.86 L931.47,496.23 L931.82,494.60 L932.16,492.97 L932.50,491.35 L932.83,489.72 L933.17,488.09 L933.50,486.46 L933.83,484.83 L934.16,483.20 L934.48,481.57 L934.80,479.94 L935.12,478.31 L935.44,476.68 L935.76,475.06 L936.07,473.43 L936.38,471.80 L936.69,470.17 L936.99,468.54 L937.29,466.91 L937.59,465.28 L937.89,463.65 L938.18,462.02 L938.48,460.39 L938.76,458.76 L939.05,457.14 L939.33,455.51 L939.61,453.88 L939.89,452.25 L940.17,450.62 L940.44,448.99 L940.71,447.36 L940.98,445.73 L941.24,444.10 L941.50,442.48 L941.76,440.85 L942.01,439.22 L942.26,437.59 L942.51,435.96 L942.76,434.33 L943.00,432.70 L943.24,431.07 L943.48,429.44 L943.71,427.81 L943.94,426.19 L944.17,424.56 L944.39,422.93 L944.61,421.30 L944.83,419.67 L945.04,418.04 L945.26,416.41 L945.46,414.78 L945.67,413.15 L945.87,411.52 L946.07,409.89 L946.26,408.27 L946.45,406.64 L946.64,405.01 L946.83,403.38 L947.01,401.75 L947.19,400.12 L947.36,398.49 L947.53,396.86 L947.70,395.23 L947.87,393.61 L948.03,391.98 L948.19,390.35 L948.34,388.72 L948.49,387.09 L948.64,385.46 L948.78,383.83 L948.92,382.20 L949.06,380.57 L949.19,378.94 L949.32,377.31 L949.45,375.69 L949.57,374.06 L949.69,372.43 L949.81,370.80 L949.92,369.17 L950.03,367.54 L950.13,365.91 L950.23,364.28 L950.33,362.65 L950.42,361.03 L950.51,359.40 L950.60,357.77 L950.68,356.14 L950.76,354.51 L950.84,352.88 L950.91,351.25 L950.98,349.62 L951.04,347.99 L951.11,346.36 L951.16,344.74 L951.22,343.11 L951.27,341.48 L951.31,339.85 L951.36,338.22 L951.39,336.59 L951.43,334.96 L951.46,333.33 L951.49,331.70 L951.51,330.07 L951.53,328.44 L951.55,326.82 L951.56,325.19 L951.57,323.56 L951.58,321.93 L951.58,320.30 L951.58,318.67 L951.57,317.04 L951.56,315.41 L951.55,313.78 L951.53,312.16 L951.51,310.53 L951.49,308.90 L951.46,307.27 L951.43,305.64 L951.39,304.01 L951.36,302.38 L951.31,300.75 L951.27,299.12 L951.22,297.49 L951.16,295.87 L951.11,294.24 L951.04,292.61 L950.98,290.98 L950.91,289.35 L950.84,287.72 L950.76,286.09 L950.68,284.46 L950.60,282.83 L950.51,281.20 L950.42,279.57 L950.33,277.95 L950.23,276.32 L950.13,274.69 L950.03,273.06 L949.92,271.43 L949.81,269.80 L949.69,268.17 L949.57,266.54 L949.45,264.91 L949.32,263.29 L949.19,261.66 L949.06,260.03 L948.92,258.40 L948.78,256.77 L948.64,255.14 L948.49,253.51 L948.34,251.88 L948.19,250.25 L948.03,248.62 L947.87,247.00 L947.70,245.37 L947.53,243.74 L947.36,242.11 L947.19,240.48 L947.01,238.85 L946.83,237.22 L946.64,235.59 L946.45,233.96 L946.26,232.33 L946.07,230.71 L945.87,229.08 L945.67,227.45 L945.46,225.82 L945.26,224.19 L945.04,222.56 L944.83,220.93 L944.61,219.30 L944.39,217.67 L944.17,216.04 L943.94,214.42 L943.71,212.79 L943.48,211.16 L943.24,209.53 L943.00,207.90 L942.76,206.27 L942.51,204.64 L942.26,203.01 L942.01,201.38 L941.76,199.75 L941.50,198.12 L941.24,196.50 L940.98,194.87 L940.71,193.24 L940.44,191.61 L940.17,189.98 L939.89,188.35 L939.61,186.72 L939.33,185.09 L939.05,183.46 L938.76,181.84 L938.48,180.21 L938.18,178.58 L937.89,176.95 L937.59,175.32 L937.29,173.69 L936.99,172.06 L936.69,170.43 L936.38,168.80 L936.07,167.17 L935.76,165.55 L935.44,163.92 L935.12,162.29 L934.80,160.66 L934.48,159.03 L934.16,157.40 L933.83,155.77 L933.50,154.14 L933.17,152.51 L932.83,150.88 L932.50,149.26 L932.16,147.63 L931.82,146.00 L931.47,144.37 L931.13,142.74 L930.78,141.11 L930.43,139.48 L930.08,137.85 L929.72,136.22 L929.37,134.59 L929.01,132.97 L928.65,131.34 L928.29,129.71 L927.92,128.08 L927.56,126.45 L927.19,124.82 L926.82,123.19 L926.45,121.56 L926.08,119.93 L925.70,118.30 L925.32,116.68 L924.95,115.05 L924.57,113.42 L924.18,111.79 L923.80,110.16 L923.42,108.53 L923.03,106.90 L922.64,105.27 L922.25,103.64 L921.86,102.01 L921.47,100.39 L921.07,98.76 L920.68,97.13 L920.28,95.50 L919.88,93.87 L919.48,92.24 L919.08,90.61 L918.68,88.98 L918.28,87.35 L917.87,85.72 L917.47,84.09 L917.06,82.47 L916.65,80.84 L916.25,79.21 L915.84,77.58 L915.43,75.95 L915.01,74.32 L914.60,72.69 L914.19,71.06 L913.77,69.43 L913.36,67.81 L912.94,66.18 L912.53,64.55 L912.11,62.92 L911.69,61.29 L911.27,59.66 L910.85,58.03 L910.43,56.40 L910.01,54.77 L909.59,53.14 L909.17,51.51 L908.74,49.89 L908.32,48.26 L907.90,46.63 L907.48,45.00 L907.05,43.37 L906.63,41.74 L906.20,40.11 L905.78,38.48 L905.35,36.85 L904.93,35.23 L904.50,33.60 L904.08,31.97 L903.65,30.34 L903.23,28.71 L902.80,27.08"/>
<path d="M902.00,613.52 L902.00,611.89 L902.00,610.26 L902.00,608.63 L902.00,607.00 L902.00,605.38 L902.00,603.75 L902.00,602.12 L902.00,600.49 L902.00,598.86 L902.00,597.23 L902.00,595.60 L902.00,593.97 L902.00,592.34 L902.00,590.71 L902.00,589.09 L902.00,587.46 L902.00,585.83 L902.00,584.20 L902.00,582.57 L902.00,580.94 L902.00,579.31 L902.00,577.68 L902.00,576.05 L902.00,574.42 L902.00,572.80 L902.00,571.17 L902.00,569.54 L902.00,567.91 L902.00,566.28 L902.00,564.65 L902.00,563.02 L902.00,561.39 L902.00,559.76 L902.00,558.13 L902.00,556.50 L902.00,554.88 L902.00,553.25 L902.00,551.62 L902.00,549.99 L902.00,548.36 L902.00,546.73 L902.00,545.10 L902.00,543.47 L902.00,541.84 L902.00,540.22 L902.00,538.59 L902.00,536.96 L902.00,535.33 L902.00,533.70 L902.00,532.07 L902.00,530.44 L902.00,528.81 L902.00,527.18 L902.00,525.55 L902.00,523.92 L902.00,522.30 L902.00,520.67 L902.00,519.04 L902.00,517.41 L902.00,515.78 L902.00,514.15 L902.00,512.52 L902.00,510.89 L902.00,509.26 L902.00,507.63 L902.00,506.01 L902.00,504.38 L902.00,502.75 L902.00,501.12 L902.00,499.49 L902.00,497.86 L902.00,496.23 L902.00,494.60 L902.00,492.97 L902.00,491.35 L902.00,489.72 L902.00,488.09 L902.00,486.46 L902.00,484.83 L902.00,483.20 L902.00,481.57 L902.00,479.94 L902.00,478.31 L902.00,476.68 L902.00,475.06 L902.00,473.43 L902.00,471.80 L902.00,470.17 L902.00,468.54 L902.00,466.91 L902.00,465.28 L902.00,463.65 L902.00,462.02 L902.00,460.39 L902.00,458.76 L902.00,457.14 L902.00,455.51 L902.00,453.88 L902.00,452.25 L902.00,450.62 L902.00,448.99 L902.00,447.36 L902.00,445.73 L902.00,444.10 L902.00,442.48 L902.00,440.85 L902.00,439.22 L902.00,437.59 L902.00,435.96 L902.00,434.33 L902.00,432.70 L902.00,431.07 L902.00,429.44 L902.00,427.81 L902.00,426.19 L902.00,424.56 L902.00,422.93 L902.00,421.30 L902.00,419.67 L902.00,418.04 L902.00,416.41 L902.00,414.78 L902.00,413.15 L902.00,411.52 L902.00,409.89 L902.00,408.27 L902.00,406.64 L902.00,405.01 L902.00,403.38 L902.00,401.75 L902.00,400.12 L902.00,398.49 L902.00,396.86 L902.00,395.23 L902.00,393.61 L902.00,391.98 L902.00,390.35 L902.00,388.72 L902.00,387.09 L902.00,385.46 L902.00,383.83 L902.00,382.20 L902.00,380.57 L902.00,378.94 L902.00,377.31 L902.00,375.69 L902.00,374.06 L902.00,372.43 L902.00,370.80 L902.00,369.17 L902.00,367.54 L902.00,365.91 L902.00,364.28 L902.00,362.65 L902.00,361.03 L902.00,359.40 L902.00,357.77 L902.00,356.14 L902.00,354.51 L902.00,352.88 L902.00,351.25 L902.00,349.62 L902.00,347.99 L902.00,346.36 L902.00,344.74 L902.00,343.11 L902.00,341.48 L902.00,339.85 L902.00,338.22 L902.00,336.59 L902.00,334.96 L902.00,333.33 L902.00,331.70 L902.00,330.07 L902.00,328.44 L902.00,326.82 L902.00,325.19 L902.00,323.56 L902.00,321.93 L902.00,320.30 L902.00,318.67 L902.00,317.04 L902.00,315.41 L902.00,313.78 L902.00,312.16 L902.00,310.53 L902.00,308.90 L902.00,307.27 L902.00,305.64 L902.00,304.01 L902.00,302.38 L902.00,300.75 L902.00,299.12 L902.00,297.49 L902.00,295.87 L902.00,294.24 L902.00,292.61 L902.00,290.98 L902.00,289.35 L902.00,287.72 L902.00,286.09 L902.00,284.46 L902.00,282.83 L902.00,281.20 L902.00,279.57 L902.00,277.95 L902.00,276.32 L902.00,274.69 L902.00,273.06 L902.00,271.43 L902.00,269.80 L902.00,268.17 L902.00,266.54 L902.00,264.91 L902.00,263.29 L902.00,261.66 L902.00,260.03 L902.00,258.40 L902.00,256.77 L902.00,255.14 L902.00,253.51 L902.00,251.88 L902.00,250.25 L902.00,248.62 L902.00,247.00 L902.00,245.37 L902.00,243.74 L902.00,242.11 L902.00,240.48 L902.00,238.85 L902.00,237.22 L902.00,235.59 L902.00,233.96 L902.00,232.33 L902.00,230.71 L902.00,229.08 L902.00,227.45 L902.00,225.82 L902.00,224.19 L902.00,222.56 L902.00,220.93 L902.00,219.30 L902.00,217.67 L902.00,216.04 L902.00,214.42 L902.00,212.79 L902.00,211.16 L902.00,209.53 L902.00,207.90 L902.00,206.27 L902.00,204.64 L902.00,203.01 L902.00,201.38 L902.00,199.75 L902.00,198.12 L902.00,196.50 L902.00,194.87 L902.00,193.24 L902.00,191.61 L902.00,189.98 L902.00,188.35 L902.00,186.72 L902.00,185.09 L902.00,183.46 L902.00,181.84 L902.00,180.21 L902.00,178.58 L902.00,176.95 L902.00,175.32 L902.00,173.69 L902.00,172.06 L902.00,170.43 L902.00,168.80 L902.00,167.17 L902.00,165.55 L902.00,163.92 L902.00,162.29 L902.00,160.66 L902.00,159.03 L902.00,157.40 L902.00,155.77 L902.00,154.14 L902.00,152.51 L902.00,150.88 L902.00,149.26 L902.00,147.63 L902.00,146.00 L902.00,144.37 L902.00,142.74 L902.00,141.11 L902.00,139.48 L902.00,137.85 L902.00,136.22 L902.00,134.59 L902.00,132.97 L902.00,131.34 L902.00,129.71 L902.00,128.08 L902.00,126.45 L902.00,124.82 L902.00,123.19 L902.00,121.56 L902.00,119.93 L902.00,118.30 L902.00,116.68 L902.00,115.05 L902.00,113.42 L902.00,111.79 L902.00,110.16 L902.00,108.53 L902.00,106.90 L902.00,105.27 L902.00,103.64 L902.00,102.01 L902.00,100.39 L902.00,98.76 L902.00,97.13 L902.00,95.50 L902.00,93.87 L902.00,92.24 L902.00,90.61 L902.00,88.98 L902.00,87.35 L902.00,85.72 L902.00,84.09 L902.00,82.47 L902.00,80.84 L902.00,79.21 L902.00,77.58 L902.00,75.95 L902.00,74.32 L902.00,72.69 L902.00,71.06 L902.00,69.43 L902.00,67.81 L902.00,66.18 L902.00,64.55 L902.00,62.92 L902.00,61.29 L902.00,59.66 L902.00,58.03 L902.00,56.40 L902.00,54.77 L902.00,53.14 L902.00,51.51 L902.00,49.89 L902.00,48.26 L902.00,46.63 L902.00,45.00 L902.00,43.37 L902.00,41.74 L902.00,40.11 L902.00,38.48 L902.00,36.85 L902.00,35.23 L902.00,33.60 L902.00,31.97 L902.00,30.34 L902.00,28.71 L902.00,27.08"/>
<path d="M902.80,613.52 L902.37,611.89 L901.95,610.26 L901.52,608.63 L901.10,607.00 L900.67,605.38 L900.25,603.75 L899.82,602.12 L899.40,600.49 L898.97,598.86 L898.55,597.23 L898.12,595.60 L897.70,593.97 L897.28,592.34 L896.86,590.71 L896.43,589.09 L896.01,587.46 L895.59,585.83 L895.17,584.20 L894.75,582.57 L894.33,580.94 L893.91,579.31 L893.49,577.68 L893.07,576.05 L892.66,574.42 L892.24,572.80 L891.83,571.17 L891.41,569.54 L891.00,567.91 L890.59,566.28 L890.17,564.65 L889.76,563.02 L889.35,561.39 L888.95,559.76 L888.54,558.13 L888.13,556.50 L887.73,554.88 L887.32,553.25 L886.92,551.62 L886.52,549.99 L886.12,548.36 L885.72,546.73 L885.32,545.10 L884.92,543.47 L884.53,541.84 L884.13,540.22 L883.74,538.59 L883.35,536.96 L882.96,535.33 L882.57,533.70 L882.18,532.07 L881.80,530.44 L881.42,528.81 L881.03,527.18 L880.65,525.55 L880.28,523.92 L879.90,522.30 L879.52,520.67 L879.15,519.04 L878.78,517.41 L878.41,515.78 L878.04,514.15 L877.68,512.52 L877.31,510.89 L876.95,509.26 L876.59,507.63 L876.23,506.01 L875.88,504.38 L875.52,502.75 L875.17,501.12 L874.82,499.49 L874.47,497.86 L874.13,496.23 L873.78,494.60 L873.44,492.97 L873.10,491.35 L872.77,489.72 L872.43,488.09 L872.10,486.46 L871.77,484.83 L871.44,483.20 L871.12,481.57 L870.80,479.94 L870.48,478.31 L870.16,476.68 L869.84,475.06 L869.53,473.43 L869.22,471.80 L868.91,470.17 L868.61,468.54 L868.31,466.91 L868.01,465.28 L867.71,463.65 L867.42,462.02 L867.12,460.39 L866.84,458.76 L866.55,457.14 L866.27,455.51 L865.99,453.88 L865.71,452.25 L865.43,450.62 L865.16,448.99 L864.89,447.36 L864.62,445.73 L864.36,444.10 L864.10,442.48 L863.84,440.85 L863.59,439.22 L863.34,437.59 L863.09,435.96 L862.84,434.33 L862.60,432.70 L862.36,431.07 L862.12,429.44 L861.89,427.81 L861.66,426.19 L861.43,424.56 L861.21,422.93 L860.99,421.30 L860.77,419.67 L860.56,418.04 L860.34,416.41 L860.14,414.78 L859.93,413.15 L859.73,411.52 L859.53,409.89 L859.34,408.27 L859.15,406.64 L858.96,405.01 L858.77,403.38 L858.59,401.75 L858.41,400.12 L858.24,398.49 L858.07,396.86 L857.90,395.23 L857.73,393.61 L857.57,391.98 L857.41,390.35 L857.26,388.72 L857.11,387.09 L856.96,385.46 L856.82,383.83 L856.68,382.20 L856.54,380.57 L856.41,378.94 L856.28,377.31 L856.15,375.69 L856.03,374.06 L855.91,372.43 L855.79,370.80 L855.68,369.17 L855.57,367.54 L855.47,365.91 L855.37,364.28 L855.27,362.65 L855.18,361.03 L855.09,359.40 L855.00,357.77 L854.92,356.14 L854.84,354.51 L854.76,352.88 L854.69,351.25 L854.62,349.62 L854.56,347.99 L854.49,346.36 L854.44,344.74 L854.38,343.11 L854.33,341.48 L854.29,339.85 L854.24,338.22 L854.21,336.59 L854.17,334.96 L854.14,333.33 L854.11,331.70 L854.09,330.07 L854.07,328.44 L854.05,326.82 L854.04,325.19 L854.03,323.56 L854.02,321.93 L854.02,320.30 L854.02,318.67 L854.03,317.04 L854.04,315.41 L854.05,313.78 L854.07,312.16 L854.09,310.53 L854.11,308.90 L854.14,307.27 L854.17,305.64 L854.21,304.01 L854.24,302.38 L854.29,300.75 L854.33,299.12 L854.38,297.49 L854.44,295.87 L854.49,294.24 L854.56,292.61 L854.62,290.98 L854.69,289.35 L854.76,287.72 L854.84,286.09 L854.92,284.46 L855.00,282.83 L855.09,281.20 L855.18,279.57 L855.27,277.95 L855.37,276.32 L855.47,274.69 L855.57,273.06 L855.68,271.43 L855.79,269.80 L855.91,268.17 L856.03,266.54 L856.15,264.91 L856.28,263.29 L856.41,261.66 L856.54,260.03 L856.68,258.40 L856.82,256.77 L856.96,255.14 L857.11,253.51 L857.26,251.88 L857.41,250.25 L857.57,248.62 L857.73,247.00 L857.90,245.37 L858.07,243.74 L858.24,242.11 L858.41,240.48 L858.59,238.85 L858.77,237.22 L858.96,235.59 L859.15,233.96 L859.34,232.33 L859.53,230.71 L859.73,229.08 L859.93,227.45 L860.14,225.82 L860.34,224.19 L860.56,222.56 L860.77,220.93 L860.99,219.30 L861.21,217.67 L861.43,216.04 L861.66,214.42 L861.89,212.79 L862.12,211.16 L862.36,209.53 L862.60,207.90 L862.84,206.27 L863.09,204.64 L863.34,203.01 L863.59,201.38 L863.84,199.75 L864.10,198.12 L864.36,196.50 L864.62,194.87 L864.89,193.24 L865.16,191.61 L865.43,189.98 L865.71,188.35 L865.99,186.72 L866.27,185.09 L866.55,183.46 L866.84,181.84 L867.12,180.21 L867.42,178.58 L867.71,176.95 L868.01,175.32 L868.31,173.69 L868.61,172.06 L868.91,170.43 L869.22,168.80 L869.53,167.17 L869.84,165.55 L870.16,163.92 L870.48,162.29 L870.80,160.66 L871.12,159.03 L871.44,157.40 L871.77,155.77 L872.10,154.14 L872.43,152.51 L872.77,150.88 L873.10,149.26 L873.44,147.63 L873.78,146.00 L874.13,144.37 L874.47,142.74 L874.82,141.11 L875.17,139.48 L875.52,137.85 L875.88,136.22 L876.23,134.59 L876.59,132.97 L876.95,131.34 L877.31,129.71 L877.68,128.08 L878.04,126.45 L878.41,124.82 L878.78,123.19 L879.15,121.56 L879.52,119.93 L879.90,118.30 L880.28,116.68 L880.65,115.05 L881.03,113.42 L881.42,111.79 L881.80,110.16 L882.18,108.53 L882.57,106.90 L882.96,105.27 L883.35,103.64 L883.74,102.01 L884.13,100.39 L884.53,98.76 L884.92,97.13 L885.32,95.50 L885.72,93.87 L886.12,92.24 L886.52,90.61 L886.92,88.98 L887.32,87.35 L887.73,85.72 L888.13,84.09 L888.54,82.47 L888.95,80.84 L889.35,79.21 L889.76,77.58 L890.17,75.95 L890.59,74.32 L891.00,72.69 L891.41,71.06 L891.83,69.43 L892.24,67.81 L892.66,66.18 L893.07,64.55 L893.49,62.92 L893.91,61.29 L894.33,59.66 L894.75,58.03 L895.17,56.40 L895.59,54.77 L896.01,53.14 L896.43,51.51 L896.86,49.89 L897.28,48.26 L897.70,46.63 L898.12,45.00 L898.55,43.37 L898.97,41.74 L899.40,40.11 L899.82,38.48 L900.25,36.85 L900.67,35.23 L901.10,33.60 L901.52,31.97 L901.95,30.34 L902.37,28.71 L902.80,27.08"/>
<path d="M902.80,613.52 L901.95,611.89 L901.10,610.26 L900.25,608.63 L899.40,607.00 L898.54,605.38 L897.69,603.75 L896.84,602.12 L895.99,600.49 L895.15,598.86 L894.30,597.23 L893.45,595.60 L892.60,593.97 L891.76,592.34 L890.91,590.71 L890.07,589.09 L889.22,587.46 L888.38,585.83 L887.54,584.20 L886.70,582.57 L885.86,580.94 L885.02,579.31 L884.18,577.68 L883.35,576.05 L882.52,574.42 L881.68,572.80 L880.85,571.17 L880.03,569.54 L879.20,567.91 L878.37,566.28 L877.55,564.65 L876.73,563.02 L875.91,561.39 L875.09,559.76 L874.28,558.13 L873.46,556.50 L872.65,554.88 L871.84,553.25 L871.04,551.62 L870.23,549.99 L869.43,548.36 L868.63,546.73 L867.84,545.10 L867.04,543.47 L866.25,541.84 L865.47,540.22 L864.68,538.59 L863.90,536.96 L863.12,535.33 L862.34,533.70 L861.57,532.07 L860.80,530.44 L860.03,528.81 L859.27,527.18 L858.51,525.55 L857.75,523.92 L857.00,522.30 L856.25,520.67 L855.50,519.04 L854.76,517.41 L854.02,515.78 L853.28,514.15 L852.55,512.52 L851.83,510.89 L851.10,509.26 L850.38,507.63 L849.67,506.01 L848.95,504.38 L848.25,502.75 L847.54,501.12 L846.84,499.49 L846.15,497.86 L845.46,496.23 L844.77,494.60 L844.09,492.97 L843.41,491.35 L842.74,489.72 L842.07,488.09 L841.40,486.46 L840.74,484.83 L840.09,483.20 L839.44,481.57 L838.79,479.94 L838.15,478.31 L837.52,476.68 L836.89,475.06 L836.26,473.43 L835.64,471.80 L835.03,470.17 L834.42,468.54 L833.81,466.91 L833.22,465.28 L832.62,463.65 L832.03,462.02 L831.45,460.39 L830.87,458.76 L830.30,457.14 L829.73,455.51 L829.17,453.88 L828.61,452.25 L828.06,450.62 L827.52,448.99 L826.98,447.36 L826.45,445.73 L825.92,444.10 L825.40,442.48 L824.89,440.85 L824.38,439.22 L823.87,437.59 L823.37,435.96 L822.88,434.33 L822.40,432.70 L821.92,431.07 L821.45,429.44 L820.98,427.81 L820.52,426.19 L820.06,424.56 L819.62,422.93 L819.17,421.30 L818.74,419.67 L818.31,418.04 L817.89,416.41 L817.47,414.78 L817.06,413.15 L816.66,411.52 L816.26,409.89 L815.87,408.27 L815.49,406.64 L815.11,405.01 L814.74,403.38 L814.38,401.75 L814.02,400.12 L813.67,398.49 L813.33,396.86 L813.00,395.23 L812.67,393.61 L812.34,391.98 L812.03,390.35 L811.72,388.72 L811.42,387.09 L811.12,385.46 L810.84,383.83 L810.56,382.20 L810.28,380.57 L810.01,378.94 L809.76,377.31 L809.50,375.69 L809.26,374.06 L809.02,372.43 L808.79,370.80 L808.56,369.17 L808.35,367.54 L808.14,365.91 L807.94,364.28 L807.74,362.65 L807.55,361.03 L807.37,359.40 L807.20,357.77 L807.03,356.14 L806.87,354.51 L806.72,352.88 L806.58,351.25 L806.44,349.62 L806.31,347.99 L806.19,346.36 L806.07,344.74 L805.97,343.11 L805.87,341.48 L805.77,339.85 L805.69,338.22 L805.61,336.59 L805.54,334.96 L805.48,333.33 L805.42,331.70 L805.37,330.07 L805.33,328.44 L805.30,326.82 L805.27,325.19 L805.25,323.56 L805.24,321.93 L805.24,320.30 L805.24,318.67 L805.25,317.04 L805.27,315.41 L805.30,313.78 L805.33,312.16 L805.37,310.53 L805.42,308.90 L805.48,307.27 L805.54,305.64 L805.61,304.01 L805.69,302.38 L805.77,300.75 L805.87,299.12 L805.97,297.49 L806.07,295.87 L806.19,294.24 L806.31,292.61 L806.44,290.98 L806.58,289.35 L806.72,287.72 L806.87,286.09 L807.03,284.46 L807.20,282.83 L807.37,281.20 L807.55,279.57 L807.74,277.95 L807.94,276.32 L808.14,274.69 L808.35,273.06 L808.56,271.43 L808.79,269.80 L809.02,268.17 L809.26,266.54 L809.50,264.91 L809.76,263.29 L810.01,261.66 L810.28,260.03 L810.56,258.40 L810.84,256.77 L811.12,255.14 L811.42,253.51 L811.72,251.88 L812.03,250.25 L812.34,248.62 L812.67,247.00 L813.00,245.37 L813.33,243.74 L813.67,242.11 L814.02,240.48 L814.38,238.85 L814.74,237.22 L815.11,235.59 L815.49,233.96 L815.87,232.33 L816.26,230.71 L816.66,229.08 L817.06,227.45 L817.47,225.82 L817.89,224.19 L818.31,222.56 L818.74,220.93 L819.17,219.30 L819.62,217.67 L820.06,216.04 L820.52,214.42 L820.98,212.79 L821.45,211.16 L821.92,209.53 L822.40,207.90 L822.88,206.27 L823.37,204.64 L823.87,203.01 L824.38,201.38 L824.89,199.75 L825.40,198.12 L825.92,196.50 L826.45,194.87 L826.98,193.24 L827.52,191.61 L828.06,189.98 L828.61,188.35 L829.17,186.72 L829.73,185.09 L830.30,183.46 L830.87,181.84 L831.45,180.21 L832.03,178.58 L832.62,176.95 L833.22,175.32 L833.81,173.69 L834.42,172.06 L835.03,170.43 L835.64,168.80 L836.26,167.17 L836.89,165.55 L837.52,163.92 L838.15,162.29 L838.79,160.66 L839.44,159.03 L840.09,157.40 L840.74,155.77 L841.40,154.14 L842.07,152.51 L842.74,150.88 L843.41,149.26 L844.09,147.63 L844.77,146.00 L845.46,144.37 L846.15,142.74 L846.84,141.11 L847.54,139.48 L848.25,137.85 L848.95,136.22 L849.67,134.59 L850.38,132.97 L851.10,131.34 L851.83,129.71 L852.55,128.08 L853.28,126.45 L854.02,124.82 L854.76,123.19 L855.50,121.56 L856.25,119.93 L857.00,118.30 L857.75,116.68 L858.51,115.05 L859.27,113.42 L860.03,111.79 L860.80,110.16 L861.57,108.53 L862.34,106.90 L863.12,105.27 L863.90,103.64 L864.68,102.01 L865.47,100.39 L866.25,98.76 L867.04,97.13 L867.84,95.50 L868.63,93.87 L869.43,92.24 L870.23,90.61 L871.04,88.98 L871.84,87.35 L872.65,85.72 L873.46,84.09 L874.28,82.47 L875.09,80.84 L875.91,79.21 L876.73,77.58 L877.55,75.95 L878.37,74.32 L879.20,72.69 L880.03,71.06 L880.85,69.43 L881.68,67.81 L882.52,66.18 L883.35,64.55 L884.18,62.92 L885.02,61.29 L885.86,59.66 L886.70,58.03 L887.54,56.40 L888.38,54.77 L889.22,53.14 L890.07,51.51 L890.91,49.89 L891.76,48.26 L892.60,46.63 L893.45,45.00 L894.30,43.37 L895.15,41.74 L895.99,40.11 L896.84,38.48 L897.69,36.85 L898.54,35.23 L899.40,33.60 L900.25,31.97 L901.10,30.34 L901.95,28.71 L902.80,27.08"/>
<path d="M902.80,613.52 L901.52,611.89 L900.25,610.26 L898.97,608.63 L897.69,607.00 L896.42,605.38 L895.14,603.75 L893.87,602.12 L892.59,600.49 L891.32,598.86 L890.05,597.23 L888.77,595.60 L887.50,593.97 L886.23,592.34 L884.97,590.71 L883.70,589.09 L882.43,587.46 L881.17,585.83 L879.91,584.20 L878.65,582.57 L877.39,580.94 L876.13,579.31 L874.88,577.68 L873.62,576.05 L872.37,574.42 L871.13,572.80 L869.88,571.17 L868.64,569.54 L867.40,567.91 L866.16,566.28 L864.92,564.65 L863.69,563.02 L862.46,561.39 L861.24,559.76 L860.01,558.13 L858.79,556.50 L857.58,554.88 L856.37,553.25 L855.16,551.62 L853.95,549.99 L852.75,548.36 L851.55,546.73 L850.36,545.10 L849.17,543.47 L847.98,541.84 L846.80,540.22 L845.62,538.59 L844.45,536.96 L843.28,535.33 L842.11,533.70 L840.95,532.07 L839.80,530.44 L838.65,528.81 L837.50,527.18 L836.36,525.55 L835.23,523.92 L834.10,522.30 L832.97,520.67 L831.85,519.04 L830.74,517.41 L829.63,515.78 L828.53,514.15 L827.43,512.52 L826.34,510.89 L825.25,509.26 L824.17,507.63 L823.10,506.01 L822.03,504.38 L820.97,502.75 L819.91,501.12 L818.86,499.49 L817.82,497.86 L816.78,496.23 L815.75,494.60 L814.73,492.97 L813.71,491.35 L812.70,489.72 L811.70,488.09 L810.71,486.46 L809.72,484.83 L808.73,483.20 L807.76,481.57 L806.79,479.94 L805.83,478.31 L804.88,476.68 L803.93,475.06 L803.00,473.43 L802.07,471.80 L801.14,470.17 L800.23,468.54 L799.32,466.91 L798.42,465.28 L797.53,463.65 L796.65,462.02 L795.77,460.39 L794.91,458.76 L794.05,457.14 L793.20,455.51 L792.36,453.88 L791.52,452.25 L790.70,450.62 L789.88,448.99 L789.07,447.36 L788.27,445.73 L787.48,444.10 L786.70,442.48 L785.93,440.85 L785.16,439.22 L784.41,437.59 L783.66,435.96 L782.93,434.33 L782.20,432.70 L781.48,431.07 L780.77,429.44 L780.07,427.81 L779.38,426.19 L778.70,424.56 L778.02,422.93 L777.36,421.30 L776.71,419.67 L776.07,418.04 L775.43,416.41 L774.81,414.78 L774.19,413.15 L773.59,411.52 L772.99,409.89 L772.41,408.27 L771.84,406.64 L771.27,405.01 L770.72,403.38 L770.17,401.75 L769.64,400.12 L769.11,398.49 L768.60,396.86 L768.09,395.23 L767.60,393.61 L767.12,391.98 L766.64,390.35 L766.18,388.72 L765.73,387.09 L765.29,385.46 L764.85,383.83 L764.43,382.20 L764.02,380.57 L763.62,378.94 L763.23,377.31 L762.85,375.69 L762.49,374.06 L762.13,372.43 L761.78,370.80 L761.45,369.17 L761.12,367.54 L760.81,365.91 L760.50,364.28 L760.21,362.65 L759.93,361.03 L759.66,359.40 L759.40,357.77 L759.15,356.14 L758.91,354.51 L758.68,352.88 L758.47,351.25 L758.26,349.62 L758.07,347.99 L757.88,346.36 L757.71,344.74 L757.55,343.11 L757.40,341.48 L757.26,339.85 L757.13,338.22 L757.02,336.59 L756.91,334.96 L756.82,333.33 L756.73,331.70 L756.66,330.07 L756.60,328.44 L756.55,326.82 L756.51,325.19 L756.48,323.56 L756.47,321.93 L756.46,320.30 L756.47,318.67 L756.48,317.04 L756.51,315.41 L756.55,313.78 L756.60,312.16 L756.66,310.53 L756.73,308.90 L756.82,307.27 L756.91,305.64 L757.02,304.01 L757.13,302.38 L757.26,300.75 L757.40,299.12 L757.55,297.49 L757.71,295.87 L757.88,294.24 L758.07,292.61 L758.26,290.98 L758.47,289.35 L758.68,287.72 L758.91,286.09 L759.15,284.46 L759.40,282.83 L759.66,281.20 L759.93,279.57 L760.21,277.95 L760.50,276.32 L760.81,274.69 L761.12,273.06 L761.45,271.43 L761.78,269.80 L762.13,268.17 L762.49,266.54 L762.85,264.91 L763.23,263.29 L763.62,261.66 L764.02,260.03 L764.43,258.40 L764.85,256.77 L765.29,255.14 L765.73,253.51 L766.18,251.88 L766.64,250.25 L767.12,248.62 L767.60,247.00 L768.09,245.37 L768.60,243.74 L769.11,242.11 L769.64,240.48 L770.17,238.85 L770.72,237.22 L771.27,235.59 L771.84,233.96 L772.41,232.33 L772.99,230.71 L773.59,229.08 L774.19,227.45 L774.81,225.82 L775.43,224.19 L776.07,222.56 L776.71,220.93 L777.36,219.30 L778.02,217.67 L778.70,216.04 L779.38,214.42 L780.07,212.79 L780.77,211.16 L781.48,209.53 L782.20,207.90 L782.93,206.27 L783.66,204.64 L784.41,203.01 L785.16,201.38 L785.93,199.75 L786.70,198.12 L787.48,196.50 L788.27,194.87 L789.07,193.24 L789.88,191.61 L790.70,189.98 L791.52,188.35 L792.36,186.72 L793.20,185.09 L794.05,183.46 L794.91,181.84 L795.77,180.21 L796.65,178.58 L797.53,176.95 L798.42,175.32 L799.32,173.69 L800.23,172.06 L801.14,170.43 L802.07,168.80 L803.00,167.17 L803.93,165.55 L804.88,163.92 L805.83,162.29 L806.79,160.66 L807.76,159.03 L808.73,157.40 L809.72,155.77 L810.71,154.14 L811.70,152.51 L812.70,150.88 L813.71,149.26 L814.73,147.63 L815.75,146.00 L816.78,144.37 L817.82,142.74 L818.86,141.11 L819.91,139.48 L820.97,137.85 L822.03,136.22 L823.10,134.59 L824.17,132.97 L825.25,131.34 L826.34,129.71 L827.43,128.08 L828.53,126.45 L829.63,124.82 L830.74,123.19 L831.85,121.56 L832.97,119.93 L834.10,118.30 L835.23,116.68 L836.36,115.05 L837.50,113.42 L838.65,111.79 L839.80,110.16 L840.95,108.53 L842.11,106.90 L843.28,105.27 L844.45,103.64 L845.62,102.01 L846.80,100.39 L847.98,98.76 L849.17,97.13 L850.36,95.50 L851.55,93.87 L852.75,92.24 L853.95,90.61 L855.16,88.98 L856.37,87.35 L857.58,85.72 L858.79,84.09 L860.01,82.47 L861.24,80.84 L862.46,79.21 L863.69,77.58 L864.92,75.95 L866.16,74.32 L867.40,72.69 L868.64,71.06 L869.88,69.43 L871.13,67.81 L872.37,66.18 L873.62,64.55 L874.88,62.92 L876.13,61.29 L877.39,59.66 L878.65,58.03 L879.91,56.40 L881.17,54.77 L882.43,53.14 L883.70,51.51 L884.97,49.89 L886.23,48.26 L887.50,46.63 L888.77,45.00 L890.05,43.37 L891.32,41.74 L892.59,40.11 L893.87,38.48 L895.14,36.85 L896.42,35.23 L897.69,33.60 L898.97,31.97 L900.25,30.34 L901.52,28.71 L902.80,27.08"/>
<path d="M902.80,613.52 L901.10,611.89 L899.39,610.26 L897.69,608.63 L895.99,607.00 L894.29,605.38 L892.59,603.75 L890.89,602.12 L889.19,600.49 L887.49,598.86 L885.79,597.23 L884.10,595.60 L882.40,593.97 L880.71,592.34 L879.02,590.71 L877.33,589.09 L875.64,587.46 L873.96,585.83 L872.28,584.20 L870.60,582.57 L868.92,580.94 L867.24,579.31 L865.57,577.68 L863.90,576.05 L862.23,574.42 L860.57,572.80 L858.91,571.17 L857.25,569.54 L855.60,567.91 L853.95,566.28 L852.30,564.65 L850.66,563.02 L849.02,561.39 L847.38,559.76 L845.75,558.13 L844.13,556.50 L842.50,554.88 L840.89,553.25 L839.28,551.62 L837.67,549.99 L836.07,548.36 L834.47,546.73 L832.88,545.10 L831.29,543.47 L829.71,541.84 L828.13,540.22 L826.56,538.59 L825.00,536.96 L823.44,535.33 L821.89,533.70 L820.34,532.07 L818.80,530.44 L817.27,528.81 L815.74,527.18 L814.22,525.55 L812.70,523.92 L811.20,522.30 L809.70,520.67 L808.20,519.04 L806.72,517.41 L805.24,515.78 L803.77,514.15 L802.31,512.52 L800.85,510.89 L799.40,509.26 L797.96,507.63 L796.53,506.01 L795.11,504.38 L793.69,502.75 L792.28,501.12 L790.88,499.49 L789.49,497.86 L788.11,496.23 L786.74,494.60 L785.37,492.97 L784.02,491.35 L782.67,489.72 L781.33,488.09 L780.01,486.46 L778.69,484.83 L777.38,483.20 L776.08,481.57 L774.79,479.94 L773.51,478.31 L772.24,476.68 L770.98,475.06 L769.73,473.43 L768.49,471.80 L767.26,470.17 L766.04,468.54 L764.83,466.91 L763.63,465.28 L762.44,463.65 L761.26,462.02 L760.10,460.39 L758.94,458.76 L757.80,457.14 L756.66,455.51 L755.54,453.88 L754.43,452.25 L753.33,450.62 L752.24,448.99 L751.16,447.36 L750.10,445.73 L749.04,444.10 L748.00,442.48 L746.97,440.85 L745.95,439.22 L744.94,437.59 L743.95,435.96 L742.97,434.33 L742.00,432.70 L741.04,431.07 L740.09,429.44 L739.16,427.81 L738.24,426.19 L737.33,424.56 L736.43,422.93 L735.55,421.30 L734.68,419.67 L733.82,418.04 L732.98,416.41 L732.14,414.78 L731.33,413.15 L730.52,411.52 L729.73,409.89 L728.95,408.27 L728.18,406.64 L727.43,405.01 L726.69,403.38 L725.96,401.75 L725.25,400.12 L724.55,398.49 L723.86,396.86 L723.19,395.23 L722.53,393.61 L721.89,391.98 L721.26,390.35 L720.64,388.72 L720.04,387.09 L719.45,385.46 L718.87,383.83 L718.31,382.20 L717.76,380.57 L717.23,378.94 L716.71,377.31 L716.21,375.69 L715.72,374.06 L715.24,372.43 L714.78,370.80 L714.33,369.17 L713.90,367.54 L713.48,365.91 L713.07,364.28 L712.68,362.65 L712.31,361.03 L711.94,359.40 L711.60,357.77 L711.26,356.14 L710.95,354.51 L710.64,352.88 L710.36,351.25 L710.08,349.62 L709.82,347.99 L709.58,346.36 L709.35,344.74 L709.13,343.11 L708.93,341.48 L708.75,339.85 L708.58,338.22 L708.42,336.59 L708.28,334.96 L708.16,333.33 L708.04,331.70 L707.95,330.07 L707.87,328.44 L707.80,326.82 L707.75,325.19 L707.71,323.56 L707.69,321.93 L707.68,320.30 L707.69,318.67 L707.71,317.04 L707.75,315.41 L707.80,313.78 L707.87,312.16 L707.95,310.53 L708.04,308.90 L708.16,307.27 L708.28,305.64 L708.42,304.01 L708.58,302.38 L708.75,300.75 L708.93,299.12 L709.13,297.49 L709.35,295.87 L709.58,294.24 L709.82,292.61 L710.08,290.98 L710.36,289.35 L710.64,287.72 L710.95,286.09 L711.26,284.46 L711.60,282.83 L711.94,281.20 L712.31,279.57 L712.68,277.95 L713.07,276.32 L713.48,274.69 L713.90,273.06 L714.33,271.43 L714.78,269.80 L715.24,268.17 L715.72,266.54 L716.21,264.91 L716.71,263.29 L717.23,261.66 L717.76,260.03 L718.31,258.40 L718.87,256.77 L719.45,255.14 L720.04,253.51 L720.64,251.88 L721.26,250.25 L721.89,248.62 L722.53,247.00 L723.19,245.37 L723.86,243.74 L724.55,242.11 L725.25,240.48 L725.96,238.85 L726.69,237.22 L727.43,235.59 L728.18,233.96 L728.95,232.33 L729.73,230.71 L730.52,229.08 L731.33,227.45 L732.14,225.82 L732.98,224.19 L733.82,222.56 L734.68,220.93 L735.55,219.30 L736.43,217.67 L737.33,216.04 L738.24,214.42 L739.16,212.79 L740.09,211.16 L741.04,209.53 L742.00,207.90 L742.97,206.27 L743.95,204.64 L744.94,203.01 L745.95,201.38 L746.97,199.75 L748.00,198.12 L749.04,196.50 L750.10,194.87 L751.16,193.24 L752.24,191.61 L753.33,189.98 L754.43,188.35 L755.54,186.72 L756.66,185.09 L757.80,183.46 L758.94,181.84 L760.10,180.21 L761.26,178.58 L762.44,176.95 L763.63,175.32 L764.83,173.69 L766.04,172.06 L767.26,170.43 L768.49,168.80 L769.73,167.17 L770.98,165.55 L772.24,163.92 L773.51,162.29 L774.79,160.66 L776.08,159.03 L777.38,157.40 L778.69,155.77 L780.01,154.14 L781.33,152.51 L782.67,150.88 L784.02,149.26 L785.37,147.63 L786.74,146.00 L788.11,144.37 L789.49,142.74 L790.88,141.11 L792.28,139.48 L793.69,137.85 L795.11,136.22 L796.53,134.59 L797.96,132.97 L799.40,131.34 L800.85,129.71 L802.31,128.08 L803.77,126.45 L805.24,124.82 L806.72,123.19 L808.20,121.56 L809.70,119.93 L811.20,118.30 L812.70,116.68 L814.22,115.05 L815.74,113.42 L817.27,111.79 L818.80,110.16 L820.34,108.53 L821.89,106.90 L823.44,105.27 L825.00,103.64 L826.56,102.01 L828.13,100.39 L829.71,98.76 L831.29,97.13 L832.88,95.50 L834.47,93.87 L836.07,92.24 L837.67,90.61 L839.28,88.98 L840.89,87.35 L842.50,85.72 L844.13,84.09 L845.75,82.47 L847.38,80.84 L849.02,79.21 L850.66,77.58 L852.30,75.95 L853.95,74.32 L855.60,72.69 L857.25,71.06 L858.91,69.43 L860.57,67.81 L862.23,66.18 L863.90,64.55 L865.57,62.92 L867.24,61.29 L868.92,59.66 L870.60,58.03 L872.28,56.40 L873.96,54.77 L875.64,53.14 L877.33,51.51 L879.02,49.89 L880.71,48.26 L882.40,46.63 L884.10,45.00 L885.79,43.37 L887.49,41.74 L889.19,40.11 L890.89,38.48 L892.59,36.85 L894.29,35.23 L895.99,33.60 L897.69,31.97 L899.39,30.34 L901.10,28.71 L902.80,27.08"/>
<path d="M902.80,613.52 L900.67,611.89 L898.54,610.26 L896.42,608.63 L894.29,607.00 L892.16,605.38 L890.04,603.75 L887.91,602.12 L885.79,600.49 L883.66,598.86 L881.54,597.23 L879.42,595.60 L877.31,593.97 L875.19,592.34 L873.08,590.71 L870.96,589.09 L868.86,587.46 L866.75,585.83 L864.65,584.20 L862.54,582.57 L860.45,580.94 L858.35,579.31 L856.26,577.68 L854.17,576.05 L852.09,574.42 L850.01,572.80 L847.93,571.17 L845.86,569.54 L843.80,567.91 L841.73,566.28 L839.67,564.65 L837.62,563.02 L835.57,561.39 L833.53,559.76 L831.49,558.13 L829.46,556.50 L827.43,554.88 L825.41,553.25 L823.39,551.62 L821.38,549.99 L819.38,548.36 L817.38,546.73 L815.39,545.10 L813.41,543.47 L811.43,541.84 L809.46,540.22 L807.50,538.59 L805.55,536.96 L803.60,535.33 L801.66,533.70 L799.72,532.07 L797.80,530.44 L795.88,528.81 L793.97,527.18 L792.07,525.55 L790.18,523.92 L788.30,522.30 L786.42,520.67 L784.55,519.04 L782.70,517.41 L780.85,515.78 L779.01,514.15 L777.18,512.52 L775.36,510.89 L773.55,509.26 L771.75,507.63 L769.96,506.01 L768.18,504.38 L766.41,502.75 L764.65,501.12 L762.90,499.49 L761.17,497.86 L759.44,496.23 L757.72,494.60 L756.02,492.97 L754.32,491.35 L752.64,489.72 L750.97,488.09 L749.31,486.46 L747.66,484.83 L746.02,483.20 L744.40,481.57 L742.79,479.94 L741.19,478.31 L739.60,476.68 L738.02,475.06 L736.46,473.43 L734.91,471.80 L733.37,470.17 L731.85,468.54 L730.34,466.91 L728.84,465.28 L727.35,463.65 L725.88,462.02 L724.42,460.39 L722.98,458.76 L721.55,457.14 L720.13,455.51 L718.73,453.88 L717.34,452.25 L715.96,450.62 L714.60,448.99 L713.25,447.36 L711.92,445.73 L710.60,444.10 L709.30,442.48 L708.01,440.85 L706.74,439.22 L705.48,437.59 L704.24,435.96 L703.01,434.33 L701.80,432.70 L700.60,431.07 L699.42,429.44 L698.25,427.81 L697.10,426.19 L695.96,424.56 L694.84,422.93 L693.74,421.30 L692.65,419.67 L691.58,418.04 L690.52,416.41 L689.48,414.78 L688.46,413.15 L687.45,411.52 L686.46,409.89 L685.48,408.27 L684.53,406.64 L683.58,405.01 L682.66,403.38 L681.75,401.75 L680.86,400.12 L679.99,398.49 L679.13,396.86 L678.29,395.23 L677.47,393.61 L676.66,391.98 L675.87,390.35 L675.10,388.72 L674.35,387.09 L673.61,385.46 L672.89,383.83 L672.19,382.20 L671.50,380.57 L670.84,378.94 L670.19,377.31 L669.56,375.69 L668.94,374.06 L668.35,372.43 L667.77,370.80 L667.21,369.17 L666.67,367.54 L666.14,365.91 L665.64,364.28 L665.15,362.65 L664.68,361.03 L664.23,359.40 L663.80,357.77 L663.38,356.14 L662.98,354.51 L662.61,352.88 L662.24,351.25 L661.90,349.62 L661.58,347.99 L661.27,346.36 L660.99,344.74 L660.72,343.11 L660.47,341.48 L660.24,339.85 L660.02,338.22 L659.83,336.59 L659.65,334.96 L659.49,333.33 L659.35,331.70 L659.23,330.07 L659.13,328.44 L659.05,326.82 L658.98,325.19 L658.94,323.56 L658.91,321.93 L658.90,320.30 L658.91,318.67 L658.94,317.04 L658.98,315.41 L659.05,313.78 L659.13,312.16 L659.23,310.53 L659.35,308.90 L659.49,307.27 L659.65,305.64 L659.83,304.01 L660.02,302.38 L660.24,300.75 L660.47,299.12 L660.72,297.49 L660.99,295.87 L661.27,294.24 L661.58,292.61 L661.90,290.98 L662.24,289.35 L662.61,287.72 L662.98,286.09 L663.38,284.46 L663.80,282.83 L664.23,281.20 L664.68,279.57 L665.15,277.95 L665.64,276.32 L666.14,274.69 L666.67,273.06 L667.21,271.43 L667.77,269.80 L668.35,268.17 L668.94,266.54 L669.56,264.91 L670.19,263.29 L670.84,261.66 L671.50,260.03 L672.19,258.40 L672.89,256.77 L673.61,255.14 L674.35,253.51 L675.10,251.88 L675.87,250.25 L676.66,248.62 L677.47,247.00 L678.29,245.37 L679.13,243.74 L679.99,242.11 L680.86,240.48 L681.75,238.85 L682.66,237.22 L683.58,235.59 L684.53,233.96 L685.48,232.33 L686.46,230.71 L687.45,229.08 L688.46,227.45 L689.48,225.82 L690.52,224.19 L691.58,222.56 L692.65,220.93 L693.74,219.30 L694.84,217.67 L695.96,216.04 L697.10,214.42 L698.25,212.79 L699.42,211.16 L700.60,209.53 L701.80,207.90 L703.01,206.27 L704.24,204.64 L705.48,203.01 L706.74,201.38 L708.01,199.75 L709.30,198.12 L710.60,196.50 L711.92,194.87 L713.25,193.24 L714.60,191.61 L715.96,189.98 L717.34,188.35 L718.73,186.72 L720.13,185.09 L721.55,183.46 L722.98,181.84 L724.42,180.21 L725.88,178.58 L727.35,176.95 L728.84,175.32 L730.34,173.69 L731.85,172.06 L733.37,170.43 L734.91,168.80 L736.46,167.17 L738.02,165.55 L739.60,163.92 L741.19,162.29 L742.79,160.66 L744.40,159.03 L746.02,157.40 L747.66,155.77 L749.31,154.14 L750.97,152.51 L752.64,150.88 L754.32,149.26 L756.02,147.63 L757.72,146.00 L759.44,144.37 L761.17,142.74 L762.90,141.11 L764.65,139.48 L766.41,137.85 L768.18,136.22 L769.96,134.59 L771.75,132.97 L773.55,131.34 L775.36,129.71 L777.18,128.08 L779.01,126.45 L780.85,124.82 L782.70,123.19 L784.55,121.56 L786.42,119.93 L788.30,118.30 L790.18,116.68 L792.07,115.05 L793.97,113.42 L795.88,111.79 L797.80,110.16 L799.72,108.53 L801.66,106.90 L803.60,105.27 L805.55,103.64 L807.50,102.01 L809.46,100.39 L811.43,98.76 L813.41,97.13 L815.39,95.50 L817.38,93.87 L819.38,92.24 L821.38,90.61 L823.39,88.98 L825.41,87.35 L827.43,85.72 L829.46,84.09 L831.49,82.47 L833.53,80.84 L835.57,79.21 L837.62,77.58 L839.67,75.95 L841.73,74.32 L843.80,72.69 L845.86,71.06 L847.93,69.43 L850.01,67.81 L852.09,66.18 L854.17,64.55 L856.26,62.92 L858.35,61.29 L860.45,59.66 L862.54,58.03 L864.65,56.40 L866.75,54.77 L868.86,53.14 L870.96,51.51 L873.08,49.89 L875.19,48.26 L877.31,46.63 L879.42,45.00 L881.54,43.37 L883.66,41.74 L885.79,40.11 L887.91,38.48 L890.04,36.85 L892.16,35.23 L894.29,33.60 L896.42,31.97 L898.54,30.34 L900.67,28.71 L902.80,27.08"/>
<path d="M902.80,613.52 L900.25,611.89 L897.69,610.26 L895.14,608.63 L892.59,607.00 L890.03,605.38 L887.48,603.75 L884.93,602.12 L882.38,600.49 L879.84,598.86 L877.29,597.23 L874.75,595.60 L872.21,593.97 L869.67,592.34 L867.13,590.71 L864.60,589.09 L862.07,587.46 L859.54,585.83 L857.01,584.20 L854.49,582.57 L851.98,580.94 L849.46,579.31 L846.95,577.68 L844.45,576.05 L841.95,574.42 L839.45,572.80 L836.96,571.17 L834.48,569.54 L831.99,567.91 L829.52,566.28 L827.05,564.65 L824.58,563.02 L822.13,561.39 L819.67,559.76 L817.23,558.13 L814.79,556.50 L812.36,554.88 L809.93,553.25 L807.51,551.62 L805.10,549.99 L802.70,548.36 L800.30,546.73 L797.91,545.10 L795.53,543.47 L793.16,541.84 L790.80,540.22 L788.44,538.59 L786.09,536.96 L783.76,535.33 L781.43,533.70 L779.11,532.07 L776.80,530.44 L774.50,528.81 L772.21,527.18 L769.93,525.55 L767.66,523.92 L765.40,522.30 L763.15,520.67 L760.91,519.04 L758.68,517.41 L756.46,515.78 L754.25,514.15 L752.06,512.52 L749.88,510.89 L747.70,509.26 L745.54,507.63 L743.40,506.01 L741.26,504.38 L739.14,502.75 L737.02,501.12 L734.93,499.49 L732.84,497.86 L730.77,496.23 L728.71,494.60 L726.66,492.97 L724.63,491.35 L722.61,489.72 L720.60,488.09 L718.61,486.46 L716.63,484.83 L714.67,483.20 L712.72,481.57 L710.78,479.94 L708.86,478.31 L706.96,476.68 L705.07,475.06 L703.19,473.43 L701.33,471.80 L699.49,470.17 L697.66,468.54 L695.84,466.91 L694.05,465.28 L692.26,463.65 L690.50,462.02 L688.75,460.39 L687.01,458.76 L685.30,457.14 L683.60,455.51 L681.91,453.88 L680.24,452.25 L678.59,450.62 L676.96,448.99 L675.34,447.36 L673.75,445.73 L672.17,444.10 L670.60,442.48 L669.06,440.85 L667.53,439.22 L666.02,437.59 L664.52,435.96 L663.05,434.33 L661.59,432.70 L660.16,431.07 L658.74,429.44 L657.34,427.81 L655.96,426.19 L654.59,424.56 L653.25,422.93 L651.92,421.30 L650.62,419.67 L649.33,418.04 L648.06,416.41 L646.82,414.78 L645.59,413.15 L644.38,411.52 L643.19,409.89 L642.02,408.27 L640.87,406.64 L639.74,405.01 L638.63,403.38 L637.54,401.75 L636.47,400.12 L635.42,398.49 L634.39,396.86 L633.39,395.23 L632.40,393.61 L631.43,391.98 L630.49,390.35 L629.56,388.72 L628.65,387.09 L627.77,385.46 L626.91,383.83 L626.07,382.20 L625.24,380.57 L624.44,378.94 L623.67,377.31 L622.91,375.69 L622.17,374.06 L621.46,372.43 L620.76,370.80 L620.09,369.17 L619.44,367.54 L618.81,365.91 L618.21,364.28 L617.62,362.65 L617.06,361.03 L616.52,359.40 L616.00,357.77 L615.50,356.14 L615.02,354.51 L614.57,352.88 L614.13,351.25 L613.72,349.62 L613.33,347.99 L612.97,346.36 L612.62,344.74 L612.30,343.11 L612.00,341.48 L611.72,339.85 L611.47,338.22 L611.23,336.59 L611.02,334.96 L610.83,333.33 L610.67,331.70 L610.52,330.07 L610.40,328.44 L610.30,326.82 L610.22,325.19 L610.16,323.56 L610.13,321.93 L610.12,320.30 L610.13,318.67 L610.16,317.04 L610.22,315.41 L610.30,313.78 L610.40,312.16 L610.52,310.53 L610.67,308.90 L610.83,307.27 L611.02,305.64 L611.23,304.01 L611.47,302.38 L611.72,300.75 L612.00,299.12 L612.30,297.49 L612.62,295.87 L612.97,294.24 L613.33,292.61 L613.72,290.98 L614.13,289.35 L614.57,287.72 L615.02,286.09 L615.50,284.46 L616.00,282.83 L616.52,281.20 L617.06,279.57 L617.62,277.95 L618.21,276.32 L618.81,274.69 L619.44,273.06 L620.09,271.43 L620.76,269.80 L621.46,268.17 L622.17,266.54 L622.91,264.91 L623.67,263.29 L624.44,261.66 L625.24,260.03 L626.07,258.40 L626.91,256.77 L627.77,255.14 L628.65,253.51 L629.56,251.88 L630.49,250.25 L631.43,248.62 L632.40,247.00 L633.39,245.37 L634.39,243.74 L635.42,242.11 L636.47,240.48 L637.54,238.85 L638.63,237.22 L639.74,235.59 L640.87,233.96 L642.02,232.33 L643.19,230.71 L644.38,229.08 L645.59,227.45 L646.82,225.82 L648.06,224.19 L649.33,222.56 L650.62,220.93 L651.92,219.30 L653.25,217.67 L654.59,216.04 L655.96,214.42 L657.34,212.79 L658.74,211.16 L660.16,209.53 L661.59,207.90 L663.05,206.27 L664.52,204.64 L666.02,203.01 L667.53,201.38 L669.06,199.75 L670.60,198.12 L672.17,196.50 L673.75,194.87 L675.34,193.24 L676.96,191.61 L678.59,189.98 L680.24,188.35 L681.91,186.72 L683.60,185.09 L685.30,183.46 L687.01,181.84 L688.75,180.21 L690.50,178.58 L692.26,176.95 L694.05,175.32 L695.84,173.69 L697.66,172.06 L699.49,170.43 L701.33,168.80 L703.19,167.17 L705.07,165.55 L706.96,163.92 L708.86,162.29 L710.78,160.66 L712.72,159.03 L714.67,157.40 L716.63,155.77 L718.61,154.14 L720.60,152.51 L722.61,150.88 L724.63,149.26 L726.66,147.63 L728.71,146.00 L730.77,144.37 L732.84,142.74 L734.93,141.11 L737.02,139.48 L739.14,137.85 L741.26,136.22 L743.40,134.59 L745.54,132.97 L747.70,131.34 L749.88,129.71 L752.06,128.08 L754.25,126.45 L756.46,124.82 L758.68,123.19 L760.91,121.56 L763.15,119.93 L765.40,118.30 L767.66,116.68 L769.93,115.05 L772.21,113.42 L774.50,111.79 L776.80,110.16 L779.11,108.53 L781.43,106.90 L783.76,105.27 L786.09,103.64 L788.44,102.01 L790.80,100.39 L793.16,98.76 L795.53,97.13 L797.91,95.50 L800.30,93.87 L802.70,92.24 L805.10,90.61 L807.51,88.98 L809.93,87.35 L812.36,85.72 L814.79,84.09 L817.23,82.47 L819.67,80.84 L822.13,79.21 L824.58,77.58 L827.05,75.95 L829.52,74.32 L831.99,72.69 L834.48,71.06 L836.96,69.43 L839.45,67.81 L841.95,66.18 L844.45,64.55 L846.95,62.92 L849.46,61.29 L851.98,59.66 L854.49,58.03 L857.01,56.40 L859.54,54.77 L862.07,53.14 L864.60,51.51 L867.13,49.89 L869.67,48.26 L872.21,46.63 L874.75,45.00 L877.29,43.37 L879.84,41.74 L882.38,40.11 L884.93,38.48 L887.48,36.85 L890.03,35.23 L892.59,33.60 L895.14,31.97 L897.69,30.34 L900.25,28.71 L902.80,27.08"/>
<path d="M902.80,613.52 L899.82,611.89 L896.84,610.26 L893.86,608.63 L890.88,607.00 L887.91,605.38 L884.93,603.75 L881.95,602.12 L878.98,600.49 L876.01,598.86 L873.04,597.23 L870.07,595.60 L867.11,593.97 L864.15,592.34 L861.19,590.71 L858.23,589.09 L855.28,587.46 L852.33,585.83 L849.38,584.20 L846.44,582.57 L843.51,580.94 L840.57,579.31 L837.65,577.68 L834.72,576.05 L831.81,574.42 L828.89,572.80 L825.99,571.17 L823.09,569.54 L820.19,567.91 L817.31,566.28 L814.42,564.65 L811.55,563.02 L808.68,561.39 L805.82,559.76 L802.97,558.13 L800.12,556.50 L797.28,554.88 L794.45,553.25 L791.63,551.62 L788.82,549.99 L786.01,548.36 L783.22,546.73 L780.43,545.10 L777.65,543.47 L774.89,541.84 L772.13,540.22 L769.38,538.59 L766.64,536.96 L763.92,535.33 L761.20,533.70 L758.49,532.07 L755.80,530.44 L753.11,528.81 L750.44,527.18 L747.78,525.55 L745.13,523.92 L742.49,522.30 L739.87,520.67 L737.26,519.04 L734.66,517.41 L732.07,515.78 L729.50,514.15 L726.94,512.52 L724.39,510.89 L721.85,509.26 L719.33,507.63 L716.83,506.01 L714.34,504.38 L711.86,502.75 L709.39,501.12 L706.95,499.49 L704.51,497.86 L702.09,496.23 L699.69,494.60 L697.30,492.97 L694.93,491.35 L692.58,489.72 L690.24,488.09 L687.91,486.46 L685.60,484.83 L683.31,483.20 L681.04,481.57 L678.78,479.94 L676.54,478.31 L674.32,476.68 L672.11,475.06 L669.92,473.43 L667.75,471.80 L665.60,470.17 L663.47,468.54 L661.35,466.91 L659.25,465.28 L657.17,463.65 L655.11,462.02 L653.07,460.39 L651.05,458.76 L649.05,457.14 L647.06,455.51 L645.10,453.88 L643.15,452.25 L641.23,450.62 L639.32,448.99 L637.44,447.36 L635.57,445.73 L633.73,444.10 L631.90,442.48 L630.10,440.85 L628.32,439.22 L626.55,437.59 L624.81,435.96 L623.09,434.33 L621.39,432.70 L619.72,431.07 L618.06,429.44 L616.43,427.81 L614.82,426.19 L613.23,424.56 L611.66,422.93 L610.11,421.30 L608.59,419.67 L607.09,418.04 L605.61,416.41 L604.15,414.78 L602.72,413.15 L601.31,411.52 L599.92,409.89 L598.56,408.27 L597.22,406.64 L595.90,405.01 L594.60,403.38 L593.33,401.75 L592.08,400.12 L590.86,398.49 L589.66,396.86 L588.48,395.23 L587.33,393.61 L586.20,391.98 L585.10,390.35 L584.02,388.72 L582.96,387.09 L581.93,385.46 L580.93,383.83 L579.94,382.20 L578.99,380.57 L578.05,378.94 L577.14,377.31 L576.26,375.69 L575.40,374.06 L574.57,372.43 L573.76,370.80 L572.97,369.17 L572.22,367.54 L571.48,365.91 L570.77,364.28 L570.09,362.65 L569.43,361.03 L568.80,359.40 L568.19,357.77 L567.61,356.14 L567.06,354.51 L566.53,352.88 L566.02,351.25 L565.54,349.62 L565.09,347.99 L564.66,346.36 L564.26,344.74 L563.89,343.11 L563.53,341.48 L563.21,339.85 L562.91,338.22 L562.64,336.59 L562.39,334.96 L562.17,333.33 L561.98,331.70 L561.81,330.07 L561.66,328.44 L561.55,326.82 L561.46,325.19 L561.39,323.56 L561.35,321.93 L561.34,320.30 L561.35,318.67 L561.39,317.04 L561.46,315.41 L561.55,313.78 L561.66,312.16 L561.81,310.53 L561.98,308.90 L562.17,307.27 L562.39,305.64 L562.64,304.01 L562.91,302.38 L563.21,300.75 L563.53,299.12 L563.89,297.49 L564.26,295.87 L564.66,294.24 L565.09,292.61 L565.54,290.98 L566.02,289.35 L566.53,287.72 L567.06,286.09 L567.61,284.46 L568.19,282.83 L568.80,281.20 L569.43,279.57 L570.09,277.95 L570.77,276.32 L571.48,274.69 L572.22,273.06 L572.97,271.43 L573.76,269.80 L574.57,268.17 L575.40,266.54 L576.26,264.91 L577.14,263.29 L578.05,261.66 L578.99,260.03 L579.94,258.40 L580.93,256.77 L581.93,255.14 L582.96,253.51 L584.02,251.88 L585.10,250.25 L586.20,248.62 L587.33,247.00 L588.48,245.37 L589.66,243.74 L590.86,242.11 L592.08,240.48 L593.33,238.85 L594.60,237.22 L595.90,235.59 L597.22,233.96 L598.56,232.33 L599.92,230.71 L601.31,229.08 L602.72,227.45 L604.15,225.82 L605.61,224.19 L607.09,222.56 L608.59,220.93 L610.11,219.30 L611.66,217.67 L613.23,216.04 L614.82,214.42 L616.43,212.79 L618.06,211.16 L619.72,209.53 L621.39,207.90 L623.09,206.27 L624.81,204.64 L626.55,203.01 L628.32,201.38 L630.10,199.75 L631.90,198.12 L633.73,196.50 L635.57,194.87 L637.44,193.24 L639.32,191.61 L641.23,189.98 L643.15,188.35 L645.10,186.72 L647.06,185.09 L649.05,183.46 L651.05,181.84 L653.07,180.21 L655.11,178.58 L657.17,176.95 L659.25,175.32 L661.35,173.69 L663.47,172.06 L665.60,170.43 L667.75,168.80 L669.92,167.17 L672.11,165.55 L674.32,163.92 L676.54,162.29 L678.78,160.66 L681.04,159.03 L683.31,157.40 L685.60,155.77 L687.91,154.14 L690.24,152.51 L692.58,150.88 L694.93,149.26 L697.30,147.63 L699.69,146.00 L702.09,144.37 L704.51,142.74 L706.95,141.11 L709.39,139.48 L711.86,137.85 L714.34,136.22 L716.83,134.59 L719.33,132.97 L721.85,131.34 L724.39,129.71 L726.94,128.08 L729.50,126.45 L732.07,124.82 L734.66,123.19 L737.26,121.56 L739.87,119.93 L742.49,118.30 L745.13,116.68 L747.78,115.05 L750.44,113.42 L753.11,111.79 L755.80,110.16 L758.49,108.53 L761.20,106.90 L763.92,105.27 L766.64,103.64 L769.38,102.01 L772.13,100.39 L774.89,98.76 L777.65,97.13 L780.43,95.50 L783.22,93.87 L786.01,92.24 L788.82,90.61 L791.63,88.98 L794.45,87.35 L797.28,85.72 L800.12,84.09 L802.97,82.47 L805.82,80.84 L808.68,79.21 L811.55,77.58 L814.42,75.95 L817.31,74.32 L820.19,72.69 L823.09,71.06 L825.99,69.43 L828.89,67.81 L831.81,66.18 L834.72,64.55 L837.65,62.92 L840.57,61.29 L843.51,59.66 L846.44,58.03 L849.38,56.40 L852.33,54.77 L855.28,53.14 L858.23,51.51 L861.19,49.89 L864.15,48.26 L867.11,46.63 L870.07,45.00 L873.04,43.37 L876.01,41.74 L878.98,40.11 L881.95,38.48 L884.93,36.85 L887.91,35.23 L890.88,33.60 L893.86,31.97 L896.84,30.34 L899.82,28.71 L902.80,27.08"/>
<path d="M902.80,613.52 L899.39,611.89 L895.99,610.26 L892.58,608.63 L889.18,607.00 L885.78,605.38 L882.38,603.75 L878.98,602.12 L875.58,600.49 L872.18,598.86 L868.79,597.23 L865.40,595.60 L862.01,593.97 L858.62,592.34 L855.24,590.71 L851.86,589.09 L848.49,587.46 L845.12,585.83 L841.75,584.20 L838.39,582.57 L835.04,580.94 L831.68,579.31 L828.34,577.68 L825.00,576.05 L821.66,574.42 L818.34,572.80 L815.02,571.17 L811.70,569.54 L808.39,567.91 L805.09,566.28 L801.80,564.65 L798.51,563.02 L795.24,561.39 L791.97,559.76 L788.70,558.13 L785.45,556.50 L782.21,554.88 L778.98,553.25 L775.75,551.62 L772.54,549.99 L769.33,548.36 L766.14,546.73 L762.95,545.10 L759.78,543.47 L756.61,541.84 L753.46,540.22 L750.32,538.59 L747.19,536.96 L744.08,535.33 L740.97,533.70 L737.88,532.07 L734.80,530.44 L731.73,528.81 L728.68,527.18 L725.63,525.55 L722.61,523.92 L719.59,522.30 L716.59,520.67 L713.61,519.04 L710.64,517.41 L707.68,515.78 L704.74,514.15 L701.81,512.52 L698.90,510.89 L696.00,509.26 L693.12,507.63 L690.26,506.01 L687.41,504.38 L684.58,502.75 L681.77,501.12 L678.97,499.49 L676.19,497.86 L673.42,496.23 L670.68,494.60 L667.95,492.97 L665.24,491.35 L662.54,489.72 L659.87,488.09 L657.21,486.46 L654.58,484.83 L651.96,483.20 L649.36,481.57 L646.78,479.94 L644.22,478.31 L641.68,476.68 L639.16,475.06 L636.66,473.43 L634.18,471.80 L631.72,470.17 L629.28,468.54 L626.86,466.91 L624.46,465.28 L622.08,463.65 L619.73,462.02 L617.40,460.39 L615.08,458.76 L612.80,457.14 L610.53,455.51 L608.28,453.88 L606.06,452.25 L603.86,450.62 L601.68,448.99 L599.53,447.36 L597.39,445.73 L595.29,444.10 L593.20,442.48 L591.14,440.85 L589.10,439.22 L587.09,437.59 L585.10,435.96 L583.13,434.33 L581.19,432.70 L579.28,431.07 L577.38,429.44 L575.52,427.81 L573.67,426.19 L571.86,424.56 L570.07,422.93 L568.30,421.30 L566.56,419.67 L564.84,418.04 L563.15,416.41 L561.49,414.78 L559.85,413.15 L558.24,411.52 L556.65,409.89 L555.09,408.27 L553.56,406.64 L552.05,405.01 L550.58,403.38 L549.12,401.75 L547.70,400.12 L546.30,398.49 L544.93,396.86 L543.58,395.23 L542.27,393.61 L540.98,391.98 L539.71,390.35 L538.48,388.72 L537.27,387.09 L536.09,385.46 L534.94,383.83 L533.82,382.20 L532.73,380.57 L531.66,378.94 L530.62,377.31 L529.61,375.69 L528.63,374.06 L527.68,372.43 L526.75,370.80 L525.86,369.17 L524.99,367.54 L524.15,365.91 L523.34,364.28 L522.56,362.65 L521.81,361.03 L521.09,359.40 L520.39,357.77 L519.73,356.14 L519.09,354.51 L518.49,352.88 L517.91,351.25 L517.36,349.62 L516.85,347.99 L516.36,346.36 L515.90,344.74 L515.47,343.11 L515.07,341.48 L514.70,339.85 L514.36,338.22 L514.04,336.59 L513.76,334.96 L513.51,333.33 L513.29,331.70 L513.09,330.07 L512.93,328.44 L512.80,326.82 L512.69,325.19 L512.62,323.56 L512.57,321.93 L512.56,320.30 L512.57,318.67 L512.62,317.04 L512.69,315.41 L512.80,313.78 L512.93,312.16 L513.09,310.53 L513.29,308.90 L513.51,307.27 L513.76,305.64 L514.04,304.01 L514.36,302.38 L514.70,300.75 L515.07,299.12 L515.47,297.49 L515.90,295.87 L516.36,294.24 L516.85,292.61 L517.36,290.98 L517.91,289.35 L518.49,287.72 L519.09,286.09 L519.73,284.46 L520.39,282.83 L521.09,281.20 L521.81,279.57 L522.56,277.95 L523.34,276.32 L524.15,274.69 L524.99,273.06 L525.86,271.43 L526.75,269.80 L527.68,268.17 L528.63,266.54 L529.61,264.91 L530.62,263.29 L531.66,261.66 L532.73,260.03 L533.82,258.40 L534.94,256.77 L536.09,255.14 L537.27,253.51 L538.48,251.88 L539.71,250.25 L540.98,248.62 L542.27,247.00 L543.58,245.37 L544.93,243.74 L546.30,242.11 L547.70,240.48 L549.12,238.85 L550.58,237.22 L552.05,235.59 L553.56,233.96 L555.09,232.33 L556.65,230.71 L558.24,229.08 L559.85,227.45 L561.49,225.82 L563.15,224.19 L564.84,222.56 L566.56,220.93 L568.30,219.30 L570.07,217.67 L571.86,216.04 L573.67,214.42 L575.52,212.79 L577.38,211.16 L579.28,209.53 L581.19,207.90 L583.13,206.27 L585.10,204.64 L587.09,203.01 L589.10,201.38 L591.14,199.75 L593.20,198.12 L595.29,196.50 L597.39,194.87 L599.53,193.24 L601.68,191.61 L603.86,189.98 L606.06,188.35 L608.28,186.72 L610.53,185.09 L612.80,183.46 L615.08,181.84 L617.40,180.21 L619.73,178.58 L622.08,176.95 L624.46,175.32 L626.86,173.69 L629.28,172.06 L631.72,170.43 L634.18,168.80 L636.66,167.17 L639.16,165.55 L641.68,163.92 L644.22,162.29 L646.78,160.66 L649.36,159.03 L651.96,157.40 L654.58,155.77 L657.21,154.14 L659.87,152.51 L662.54,150.88 L665.24,149.26 L667.95,147.63 L670.68,146.00 L673.42,144.37 L676.19,142.74 L678.97,141.11 L681.77,139.48 L684.58,137.85 L687.41,136.22 L690.26,134.59 L693.12,132.97 L696.00,131.34 L698.90,129.71 L701.81,128.08 L704.74,126.45 L707.68,124.82 L710.64,123.19 L713.61,121.56 L716.59,119.93 L719.59,118.30 L722.61,116.68 L725.63,115.05 L728.68,113.42 L731.73,111.79 L734.80,110.16 L737.88,108.53 L740.97,106.90 L744.08,105.27 L747.19,103.64 L750.32,102.01 L753.46,100.39 L756.61,98.76 L759.78,97.13 L762.95,95.50 L766.14,93.87 L769.33,92.24 L772.54,90.61 L775.75,88.98 L778.98,87.35 L782.21,85.72 L785.45,84.09 L788.70,82.47 L791.97,80.84 L795.24,79.21 L798.51,77.58 L801.80,75.95 L805.09,74.32 L808.39,72.69 L811.70,71.06 L815.02,69.43 L818.34,67.81 L821.66,66.18 L825.00,64.55 L828.34,62.92 L831.68,61.29 L835.04,59.66 L838.39,58.03 L841.75,56.40 L845.12,54.77 L848.49,53.14 L851.86,51.51 L855.24,49.89 L858.62,48.26 L862.01,46.63 L865.40,45.00 L868.79,43.37 L872.18,41.74 L875.58,40.11 L878.98,38.48 L882.38,36.85 L885.78,35.23 L889.18,33.60 L892.58,31.97 L895.99,30.34 L899.39,28.71 L902.80,27.08"/>
<path d="M902.80,613.52 L898.97,611.89 L895.14,610.26 L891.31,608.63 L887.48,607.00 L883.65,605.38 L879.82,603.75 L876.00,602.12 L872.18,600.49 L868.35,598.86 L864.54,597.23 L860.72,595.60 L856.91,593.97 L853.10,592.34 L849.30,590.71 L845.50,589.09 L841.70,587.46 L837.91,585.83 L834.12,584.20 L830.34,582.57 L826.56,580.94 L822.79,579.31 L819.03,577.68 L815.27,576.05 L811.52,574.42 L807.78,572.80 L804.04,571.17 L800.31,569.54 L796.59,567.91 L792.88,566.28 L789.17,564.65 L785.48,563.02 L781.79,561.39 L778.11,559.76 L774.44,558.13 L770.78,556.50 L767.14,554.88 L763.50,553.25 L759.87,551.62 L756.25,549.99 L752.65,548.36 L749.05,546.73 L745.47,545.10 L741.90,543.47 L738.34,541.84 L734.79,540.22 L731.26,538.59 L727.74,536.96 L724.23,535.33 L720.74,533.70 L717.26,532.07 L713.80,530.44 L710.35,528.81 L706.91,527.18 L703.49,525.55 L700.08,523.92 L696.69,522.30 L693.32,520.67 L689.96,519.04 L686.62,517.41 L683.29,515.78 L679.98,514.15 L676.69,512.52 L673.41,510.89 L670.15,509.26 L666.91,507.63 L663.69,506.01 L660.49,504.38 L657.30,502.75 L654.14,501.12 L650.99,499.49 L647.86,497.86 L644.75,496.23 L641.66,494.60 L638.59,492.97 L635.54,491.35 L632.51,489.72 L629.50,488.09 L626.52,486.46 L623.55,484.83 L620.60,483.20 L617.68,481.57 L614.78,479.94 L611.90,478.31 L609.04,476.68 L606.20,475.06 L603.39,473.43 L600.60,471.80 L597.83,470.17 L595.09,468.54 L592.37,466.91 L589.67,465.28 L587.00,463.65 L584.35,462.02 L581.72,460.39 L579.12,458.76 L576.54,457.14 L573.99,455.51 L571.47,453.88 L568.97,452.25 L566.49,450.62 L564.04,448.99 L561.62,447.36 L559.22,445.73 L556.85,444.10 L554.50,442.48 L552.18,440.85 L549.89,439.22 L547.63,437.59 L545.39,435.96 L543.18,434.33 L540.99,432.70 L538.84,431.07 L536.71,429.44 L534.61,427.81 L532.53,426.19 L530.49,424.56 L528.47,422.93 L526.49,421.30 L524.53,419.67 L522.60,418.04 L520.70,416.41 L518.82,414.78 L516.98,413.15 L515.17,411.52 L513.38,409.89 L511.63,408.27 L509.91,406.64 L508.21,405.01 L506.55,403.38 L504.91,401.75 L503.31,400.12 L501.74,398.49 L500.19,396.86 L498.68,395.23 L497.20,393.61 L495.75,391.98 L494.33,390.35 L492.94,388.72 L491.58,387.09 L490.26,385.46 L488.96,383.83 L487.70,382.20 L486.47,380.57 L485.27,378.94 L484.10,377.31 L482.96,375.69 L481.86,374.06 L480.79,372.43 L479.75,370.80 L478.74,369.17 L477.76,367.54 L476.82,365.91 L475.91,364.28 L475.03,362.65 L474.19,361.03 L473.37,359.40 L472.59,357.77 L471.85,356.14 L471.13,354.51 L470.45,352.88 L469.80,351.25 L469.19,349.62 L468.60,347.99 L468.05,346.36 L467.54,344.74 L467.05,343.11 L466.60,341.48 L466.18,339.85 L465.80,338.22 L465.45,336.59 L465.13,334.96 L464.85,333.33 L464.60,331.70 L464.38,330.07 L464.20,328.44 L464.05,326.82 L463.93,325.19 L463.85,323.56 L463.80,321.93 L463.78,320.30 L463.80,318.67 L463.85,317.04 L463.93,315.41 L464.05,313.78 L464.20,312.16 L464.38,310.53 L464.60,308.90 L464.85,307.27 L465.13,305.64 L465.45,304.01 L465.80,302.38 L466.18,300.75 L466.60,299.12 L467.05,297.49 L467.54,295.87 L468.05,294.24 L468.60,292.61 L469.19,290.98 L469.80,289.35 L470.45,287.72 L471.13,286.09 L471.85,284.46 L472.59,282.83 L473.37,281.20 L474.19,279.57 L475.03,277.95 L475.91,276.32 L476.82,274.69 L477.76,273.06 L478.74,271.43 L479.75,269.80 L480.79,268.17 L481.86,266.54 L482.96,264.91 L484.10,263.29 L485.27,261.66 L486.47,260.03 L487.70,258.40 L488.96,256.77 L490.26,255.14 L491.58,253.51 L492.94,251.88 L494.33,250.25 L495.75,248.62 L497.20,247.00 L498.68,245.37 L500.19,243.74 L501.74,242.11 L503.31,240.48 L504.91,238.85 L506.55,237.22 L508.21,235.59 L509.91,233.96 L511.63,232.33 L513.38,230.71 L515.17,229.08 L516.98,227.45 L518.82,225.82 L520.70,224.19 L522.60,222.56 L524.53,220.93 L526.49,219.30 L528.47,217.67 L530.49,216.04 L532.53,214.42 L534.61,212.79 L536.71,211.16 L538.84,209.53 L540.99,207.90 L543.18,206.27 L545.39,204.64 L547.63,203.01 L549.89,201.38 L552.18,199.75 L554.50,198.12 L556.85,196.50 L559.22,194.87 L561.62,193.24 L564.04,191.61 L566.49,189.98 L568.97,188.35 L571.47,186.72 L573.99,185.09 L576.54,183.46 L579.12,181.84 L581.72,180.21 L584.35,178.58 L587.00,176.95 L589.67,175.32 L592.37,173.69 L595.09,172.06 L597.83,170.43 L600.60,168.80 L603.39,167.17 L606.20,165.55 L609.04,163.92 L611.90,162.29 L614.78,160.66 L617.68,159.03 L620.60,157.40 L623.55,155.77 L626.52,154.14 L629.50,152.51 L632.51,150.88 L635.54,149.26 L638.59,147.63 L641.66,146.00 L644.75,144.37 L647.86,142.74 L650.99,141.11 L654.14,139.48 L657.30,137.85 L660.49,136.22 L663.69,134.59 L666.91,132.97 L670.15,131.34 L673.41,129.71 L676.69,128.08 L679.98,126.45 L683.29,124.82 L686.62,123.19 L689.96,121.56 L693.32,119.93 L696.69,118.30 L700.08,116.68 L703.49,115.05 L706.91,113.42 L710.35,111.79 L713.80,110.16 L717.26,108.53 L720.74,106.90 L724.23,105.27 L727.74,103.64 L731.26,102.01 L734.79,100.39 L738.34,98.76 L741.90,97.13 L745.47,95.50 L749.05,93.87 L752.65,92.24 L756.25,90.61 L759.87,88.98 L763.50,87.35 L767.14,85.72 L770.78,84.09 L774.44,82.47 L778.11,80.84 L781.79,79.21 L785.48,77.58 L789.17,75.95 L792.88,74.32 L796.59,72.69 L800.31,71.06 L804.04,69.43 L807.78,67.81 L811.52,66.18 L815.27,64.55 L819.03,62.92 L822.79,61.29 L826.56,59.66 L830.34,58.03 L834.12,56.40 L837.91,54.77 L841.70,53.14 L845.50,51.51 L849.30,49.89 L853.10,48.26 L856.91,46.63 L860.72,45.00 L864.54,43.37 L868.35,41.74 L872.18,40.11 L876.00,38.48 L879.82,36.85 L883.65,35.23 L887.48,33.60 L891.31,31.97 L895.14,30.34 L898.97,28.71 L902.80,27.08"/>
<path d="M902.80,613.52 L898.54,611.89 L894.29,610.26 L890.03,608.63 L885.78,607.00 L881.52,605.38 L877.27,603.75 L873.02,602.12 L868.77,600.49 L864.53,598.86 L860.29,597.23 L856.05,595.60 L851.81,593.97 L847.58,592.34 L843.35,590.71 L839.13,589.09 L834.91,587.46 L830.70,585.83 L826.49,584.20 L822.29,582.57 L818.09,580.94 L813.91,579.31 L809.72,577.68 L805.55,576.05 L801.38,574.42 L797.22,572.80 L793.07,571.17 L788.93,569.54 L784.79,567.91 L780.66,566.28 L776.55,564.65 L772.44,563.02 L768.34,561.39 L764.26,559.76 L760.18,558.13 L756.12,556.50 L752.06,554.88 L748.02,553.25 L743.99,551.62 L739.97,549.99 L735.96,548.36 L731.97,546.73 L727.99,545.10 L724.02,543.47 L720.07,541.84 L716.13,540.22 L712.20,538.59 L708.29,536.96 L704.39,535.33 L700.51,533.70 L696.65,532.07 L692.80,530.44 L688.96,528.81 L685.14,527.18 L681.34,525.55 L677.56,523.92 L673.79,522.30 L670.04,520.67 L666.31,519.04 L662.60,517.41 L658.90,515.78 L655.22,514.15 L651.56,512.52 L647.93,510.89 L644.31,509.26 L640.71,507.63 L637.13,506.01 L633.57,504.38 L630.03,502.75 L626.51,501.12 L623.01,499.49 L619.53,497.86 L616.08,496.23 L612.65,494.60 L609.23,492.97 L605.85,491.35 L602.48,489.72 L599.14,488.09 L595.82,486.46 L592.52,484.83 L589.25,483.20 L586.00,481.57 L582.77,479.94 L579.57,478.31 L576.40,476.68 L573.25,475.06 L570.12,473.43 L567.02,471.80 L563.95,470.17 L560.90,468.54 L557.87,466.91 L554.88,465.28 L551.91,463.65 L548.96,462.02 L546.05,460.39 L543.16,458.76 L540.29,457.14 L537.46,455.51 L534.65,453.88 L531.87,452.25 L529.12,450.62 L526.40,448.99 L523.71,447.36 L521.04,445.73 L518.41,444.10 L515.80,442.48 L513.23,440.85 L510.68,439.22 L508.16,437.59 L505.67,435.96 L503.22,434.33 L500.79,432.70 L498.40,431.07 L496.03,429.44 L493.70,427.81 L491.39,426.19 L489.12,424.56 L486.88,422.93 L484.67,421.30 L482.50,419.67 L480.35,418.04 L478.24,416.41 L476.16,414.78 L474.11,413.15 L472.10,411.52 L470.12,409.89 L468.17,408.27 L466.25,406.64 L464.37,405.01 L462.52,403.38 L460.70,401.75 L458.92,400.12 L457.17,398.49 L455.46,396.86 L453.78,395.23 L452.13,393.61 L450.52,391.98 L448.94,390.35 L447.40,388.72 L445.89,387.09 L444.42,385.46 L442.98,383.83 L441.58,382.20 L440.21,380.57 L438.87,378.94 L437.58,377.31 L436.31,375.69 L435.09,374.06 L433.90,372.43 L432.74,370.80 L431.62,369.17 L430.54,367.54 L429.49,365.91 L428.48,364.28 L427.50,362.65 L426.56,361.03 L425.66,359.40 L424.79,357.77 L423.96,356.14 L423.17,354.51 L422.41,352.88 L421.69,351.25 L421.01,349.62 L420.36,347.99 L419.75,346.36 L419.17,344.74 L418.64,343.11 L418.14,341.48 L417.67,339.85 L417.25,338.22 L416.86,336.59 L416.50,334.96 L416.19,333.33 L415.91,331.70 L415.67,330.07 L415.46,328.44 L415.30,326.82 L415.17,325.19 L415.07,323.56 L415.02,321.93 L415.00,320.30 L415.02,318.67 L415.07,317.04 L415.17,315.41 L415.30,313.78 L415.46,312.16 L415.67,310.53 L415.91,308.90 L416.19,307.27 L416.50,305.64 L416.86,304.01 L417.25,302.38 L417.67,300.75 L418.14,299.12 L418.64,297.49 L419.17,295.87 L419.75,294.24 L420.36,292.61 L421.01,290.98 L421.69,289.35 L422.41,287.72 L423.17,286.09 L423.96,284.46 L424.79,282.83 L425.66,281.20 L426.56,279.57 L427.50,277.95 L428.48,276.32 L429.49,274.69 L430.54,273.06 L431.62,271.43 L432.74,269.80 L433.90,268.17 L435.09,266.54 L436.31,264.91 L437.58,263.29 L438.87,261.66 L440.21,260.03 L441.58,258.40 L442.98,256.77 L444.42,255.14 L445.89,253.51 L447.40,251.88 L448.94,250.25 L450.52,248.62 L452.13,247.00 L453.78,245.37 L455.46,243.74 L457.17,242.11 L458.92,240.48 L460.70,238.85 L462.52,237.22 L464.37,235.59 L466.25,233.96 L468.17,232.33 L470.12,230.71 L472.10,229.08 L474.11,227.45 L476.16,225.82 L478.24,224.19 L480.35,222.56 L482.50,220.93 L484.67,219.30 L486.88,217.67 L489.12,216.04 L491.39,214.42 L493.70,212.79 L496.03,211.16 L498.40,209.53 L500.79,207.90 L503.22,206.27 L505.67,204.64 L508.16,203.01 L510.68,201.38 L513.23,199.75 L515.80,198.12 L518.41,196.50 L521.04,194.87 L523.71,193.24 L526.40,191.61 L529.12,189.98 L531.87,188.35 L534.65,186.72 L537.46,185.09 L540.29,183.46 L543.16,181.84 L546.05,180.21 L548.96,178.58 L551.91,176.95 L554.88,175.32 L557.87,173.69 L560.90,172.06 L563.95,170.43 L567.02,168.80 L570.12,167.17 L573.25,165.55 L576.40,163.92 L579.57,162.29 L582.77,160.66 L586.00,159.03 L589.25,157.40 L592.52,155.77 L595.82,154.14 L599.14,152.51 L602.48,150.88 L605.85,149.26 L609.23,147.63 L612.65,146.00 L616.08,144.37 L619.53,142.74 L623.01,141.11 L626.51,139.48 L630.03,137.85 L633.57,136.22 L637.13,134.59 L640.71,132.97 L644.31,131.34 L647.93,129.71 L651.56,128.08 L655.22,126.45 L658.90,124.82 L662.60,123.19 L666.31,121.56 L670.04,119.93 L673.79,118.30 L677.56,116.68 L681.34,115.05 L685.14,113.42 L688.96,111.79 L692.80,110.16 L696.65,108.53 L700.51,106.90 L704.39,105.27 L708.29,103.64 L712.20,102.01 L716.13,100.39 L720.07,98.76 L724.02,97.13 L727.99,95.50 L731.97,93.87 L735.96,92.24 L739.97,90.61 L743.99,88.98 L748.02,87.35 L752.06,85.72 L756.12,84.09 L760.18,82.47 L764.26,80.84 L768.34,79.21 L772.44,77.58 L776.55,75.95 L780.66,74.32 L784.79,72.69 L788.93,71.06 L793.07,69.43 L797.22,67.81 L801.38,66.18 L805.55,64.55 L809.72,62.92 L813.91,61.29 L818.09,59.66 L822.29,58.03 L826.49,56.40 L830.70,54.77 L834.91,53.14 L839.13,51.51 L843.35,49.89 L847.58,48.26 L851.81,46.63 L856.05,45.00 L860.29,43.37 L864.53,41.74 L868.77,40.11 L873.02,38.48 L877.27,36.85 L881.52,35.23 L885.78,33.60 L890.03,31.97 L894.29,30.34 L898.54,28.71 L902.80,27.08"/>
<path d="M902.80,613.52 L898.12,611.89 L893.44,610.26 L888.75,608.63 L884.07,607.00 L879.39,605.38 L874.72,603.75 L870.04,602.12 L865.37,600.49 L860.70,598.86 L856.03,597.23 L851.37,595.60 L846.71,593.97 L842.06,592.34 L837.41,590.71 L832.76,589.09 L828.12,587.46 L823.49,585.83 L818.86,584.20 L814.24,582.57 L809.62,580.94 L805.02,579.31 L800.42,577.68 L795.82,576.05 L791.24,574.42 L786.66,572.80 L782.10,571.17 L777.54,569.54 L772.99,567.91 L768.45,566.28 L763.92,564.65 L759.41,563.02 L754.90,561.39 L750.40,559.76 L745.92,558.13 L741.45,556.50 L736.99,554.88 L732.54,553.25 L728.11,551.62 L723.69,549.99 L719.28,548.36 L714.89,546.73 L710.51,545.10 L706.14,543.47 L701.79,541.84 L697.46,540.22 L693.14,538.59 L688.84,536.96 L684.55,535.33 L680.28,533.70 L676.03,532.07 L671.80,530.44 L667.58,528.81 L663.38,527.18 L659.20,525.55 L655.03,523.92 L650.89,522.30 L646.77,520.67 L642.66,519.04 L638.58,517.41 L634.51,515.78 L630.47,514.15 L626.44,512.52 L622.44,510.89 L618.46,509.26 L614.50,507.63 L610.56,506.01 L606.64,504.38 L602.75,502.75 L598.88,501.12 L595.03,499.49 L591.21,497.86 L587.41,496.23 L583.63,494.60 L579.88,492.97 L576.15,491.35 L572.45,489.72 L568.77,488.09 L565.12,486.46 L561.49,484.83 L557.89,483.20 L554.32,481.57 L550.77,479.94 L547.25,478.31 L543.76,476.68 L540.29,475.06 L536.85,473.43 L533.44,471.80 L530.06,470.17 L526.71,468.54 L523.38,466.91 L520.08,465.28 L516.82,463.65 L513.58,462.02 L510.37,460.39 L507.19,458.76 L504.04,457.14 L500.93,455.51 L497.84,453.88 L494.78,452.25 L491.76,450.62 L488.76,448.99 L485.80,447.36 L482.87,445.73 L479.97,444.10 L477.10,442.48 L474.27,440.85 L471.47,439.22 L468.70,437.59 L465.96,435.96 L463.26,434.33 L460.59,432.70 L457.96,431.07 L455.35,429.44 L452.79,427.81 L450.25,426.19 L447.75,424.56 L445.29,422.93 L442.86,421.30 L440.47,419.67 L438.11,418.04 L435.78,416.41 L433.50,414.78 L431.24,413.15 L429.03,411.52 L426.85,409.89 L424.70,408.27 L422.60,406.64 L420.53,405.01 L418.49,403.38 L416.49,401.75 L414.53,400.12 L412.61,398.49 L410.72,396.86 L408.88,395.23 L407.06,393.61 L405.29,391.98 L403.56,390.35 L401.86,388.72 L400.20,387.09 L398.58,385.46 L397.00,383.83 L395.45,382.20 L393.95,380.57 L392.48,378.94 L391.05,377.31 L389.67,375.69 L388.32,374.06 L387.01,372.43 L385.74,370.80 L384.50,369.17 L383.31,367.54 L382.16,365.91 L381.05,364.28 L379.97,362.65 L378.94,361.03 L377.95,359.40 L376.99,357.77 L376.08,356.14 L375.21,354.51 L374.37,352.88 L373.58,351.25 L372.83,349.62 L372.11,347.99 L371.44,346.36 L370.81,344.74 L370.22,343.11 L369.67,341.48 L369.16,339.85 L368.69,338.22 L368.26,336.59 L367.87,334.96 L367.53,333.33 L367.22,331.70 L366.96,330.07 L366.73,328.44 L366.55,326.82 L366.40,325.19 L366.30,323.56 L366.24,321.93 L366.22,320.30 L366.24,318.67 L366.30,317.04 L366.40,315.41 L366.55,313.78 L366.73,312.16 L366.96,310.53 L367.22,308.90 L367.53,307.27 L367.87,305.64 L368.26,304.01 L368.69,302.38 L369.16,300.75 L369.67,299.12 L370.22,297.49 L370.81,295.87 L371.44,294.24 L372.11,292.61 L372.83,290.98 L373.58,289.35 L374.37,287.72 L375.21,286.09 L376.08,284.46 L376.99,282.83 L377.95,281.20 L378.94,279.57 L379.97,277.95 L381.05,276.32 L382.16,274.69 L383.31,273.06 L384.50,271.43 L385.74,269.80 L387.01,268.17 L388.32,266.54 L389.67,264.91 L391.05,263.29 L392.48,261.66 L393.95,260.03 L395.45,258.40 L397.00,256.77 L398.58,255.14 L400.20,253.51 L401.86,251.88 L403.56,250.25 L405.29,248.62 L407.06,247.00 L408.88,245.37 L410.72,243.74 L412.61,242.11 L414.53,240.48 L416.49,238.85 L418.49,237.22 L420.53,235.59 L422.60,233.96 L424.70,232.33 L426.85,230.71 L429.03,229.08 L431.24,227.45 L433.50,225.82 L435.78,224.19 L438.11,222.56 L440.47,220.93 L442.86,219.30 L445.29,217.67 L447.75,216.04 L450.25,214.42 L452.79,212.79 L455.35,211.16 L457.96,209.53 L460.59,207.90 L463.26,206.27 L465.96,204.64 L468.70,203.01 L471.47,201.38 L474.27,199.75 L477.10,198.12 L479.97,196.50 L482.87,194.87 L485.80,193.24 L488.76,191.61 L491.76,189.98 L494.78,188.35 L497.84,186.72 L500.93,185.09 L504.04,183.46 L507.19,181.84 L510.37,180.21 L513.58,178.58 L516.82,176.95 L520.08,175.32 L523.38,173.69 L526.71,172.06 L530.06,170.43 L533.44,168.80 L536.85,167.17 L540.29,165.55 L543.76,163.92 L547.25,162.29 L550.77,160.66 L554.32,159.03 L557.89,157.40 L561.49,155.77 L565.12,154.14 L568.77,152.51 L572.45,150.88 L576.15,149.26 L579.88,147.63 L583.63,146.00 L587.41,144.37 L591.21,142.74 L595.03,141.11 L598.88,139.48 L602.75,137.85 L606.64,136.22 L610.56,134.59 L614.50,132.97 L618.46,131.34 L622.44,129.71 L626.44,128.08 L630.47,126.45 L634.51,124.82 L638.58,123.19 L642.66,121.56 L646.77,119.93 L650.89,118.30 L655.03,116.68 L659.20,115.05 L663.38,113.42 L667.58,111.79 L671.80,110.16 L676.03,108.53 L680.28,106.90 L684.55,105.27 L688.84,103.64 L693.14,102.01 L697.46,100.39 L701.79,98.76 L706.14,97.13 L710.51,95.50 L714.89,93.87 L719.28,92.24 L723.69,90.61 L728.11,88.98 L732.54,87.35 L736.99,85.72 L741.45,84.09 L745.92,82.47 L750.40,80.84 L754.90,79.21 L759.41,77.58 L763.92,75.95 L768.45,74.32 L772.99,72.69 L777.54,71.06 L782.10,69.43 L786.66,67.81 L791.24,66.18 L795.82,64.55 L800.42,62.92 L805.02,61.29 L809.62,59.66 L814.24,58.03 L818.86,56.40 L823.49,54.77 L828.12,53.14 L832.76,51.51 L837.41,49.89 L842.06,48.26 L846.71,46.63 L851.37,45.00 L856.03,43.37 L860.70,41.74 L865.37,40.11 L870.04,38.48 L874.72,36.85 L879.39,35.23 L884.07,33.60 L888.75,31.97 L893.44,30.34 L898.12,28.71 L902.80,27.08"/>
<path d="M902.80,613.52 L897.69,611.89 L892.58,610.26 L887.48,608.63 L882.37,607.00 L877.27,605.38 L872.16,603.75 L867.06,602.12 L861.97,600.49 L856.87,598.86 L851.78,597.23 L846.70,595.60 L841.61,593.97 L836.54,592.34 L831.46,590.71 L826.40,589.09 L821.33,587.46 L816.28,585.83 L811.23,584.20 L806.19,582.57 L801.15,580.94 L796.13,579.31 L791.11,577.68 L786.10,576.05 L781.10,574.42 L776.10,572.80 L771.12,571.17 L766.15,569.54 L761.19,567.91 L756.24,566.28 L751.30,564.65 L746.37,563.02 L741.45,561.39 L736.55,559.76 L731.66,558.13 L726.78,556.50 L721.91,554.88 L717.06,553.25 L712.23,551.62 L707.40,549.99 L702.60,548.36 L697.80,546.73 L693.03,545.10 L688.26,543.47 L683.52,541.84 L678.79,540.22 L674.08,538.59 L669.39,536.96 L664.71,535.33 L660.06,533.70 L655.42,532.07 L650.80,530.44 L646.20,528.81 L641.61,527.18 L637.05,525.55 L632.51,523.92 L627.99,522.30 L623.49,520.67 L619.01,519.04 L614.55,517.41 L610.12,515.78 L605.71,514.15 L601.32,512.52 L596.95,510.89 L592.61,509.26 L588.29,507.63 L583.99,506.01 L579.72,504.38 L575.47,502.75 L571.25,501.12 L567.05,499.49 L562.88,497.86 L558.73,496.23 L554.61,494.60 L550.52,492.97 L546.46,491.35 L542.42,489.72 L538.40,488.09 L534.42,486.46 L530.47,484.83 L526.54,483.20 L522.64,481.57 L518.77,479.94 L514.93,478.31 L511.12,476.68 L507.34,475.06 L503.59,473.43 L499.86,471.80 L496.17,470.17 L492.52,468.54 L488.89,466.91 L485.29,465.28 L481.73,463.65 L478.19,462.02 L474.69,460.39 L471.23,458.76 L467.79,457.14 L464.39,455.51 L461.02,453.88 L457.69,452.25 L454.39,450.62 L451.12,448.99 L447.89,447.36 L444.69,445.73 L441.53,444.10 L438.40,442.48 L435.31,440.85 L432.25,439.22 L429.23,437.59 L426.25,435.96 L423.30,434.33 L420.39,432.70 L417.51,431.07 L414.68,429.44 L411.88,427.81 L409.11,426.19 L406.39,424.56 L403.70,422.93 L401.05,421.30 L398.44,419.67 L395.86,418.04 L393.33,416.41 L390.83,414.78 L388.38,413.15 L385.96,411.52 L383.58,409.89 L381.24,408.27 L378.94,406.64 L376.68,405.01 L374.46,403.38 L372.28,401.75 L370.15,400.12 L368.05,398.49 L365.99,396.86 L363.97,395.23 L362.00,393.61 L360.06,391.98 L358.17,390.35 L356.32,388.72 L354.51,387.09 L352.74,385.46 L351.02,383.83 L349.33,382.20 L347.69,380.57 L346.09,378.94 L344.53,377.31 L343.02,375.69 L341.55,374.06 L340.12,372.43 L338.73,370.80 L337.39,369.17 L336.09,367.54 L334.83,365.91 L333.61,364.28 L332.44,362.65 L331.32,361.03 L330.23,359.40 L329.19,357.77 L328.19,356.14 L327.24,354.51 L326.33,352.88 L325.47,351.25 L324.65,349.62 L323.87,347.99 L323.14,346.36 L322.45,344.74 L321.80,343.11 L321.20,341.48 L320.65,339.85 L320.13,338.22 L319.67,336.59"/>
<path d="M318.00,312.16 L318.24,310.53 L318.53,308.90 L318.87,307.27 L319.24,305.64 L319.67,304.01 L320.13,302.38 L320.65,300.75 L321.20,299.12 L321.80,297.49 L322.45,295.87 L323.14,294.24 L323.87,292.61 L324.65,290.98 L325.47,289.35 L326.33,287.72 L327.24,286.09 L328.19,284.46 L329.19,282.83 L330.23,281.20 L331.32,279.57 L332.44,277.95 L333.61,276.32 L334.83,274.69 L336.09,273.06 L337.39,271.43 L338.73,269.80 L340.12,268.17 L341.55,266.54 L343.02,264.91 L344.53,263.29 L346.09,261.66 L347.69,260.03 L349.33,258.40 L351.02,256.77 L352.74,255.14 L354.51,253.51 L356.32,251.88 L358.17,250.25 L360.06,248.62 L362.00,247.00 L363.97,245.37 L365.99,243.74 L368.05,242.11 L370.15,240.48 L372.28,238.85 L374.46,237.22 L376.68,235.59 L378.94,233.96 L381.24,232.33 L383.58,230.71 L385.96,229.08 L388.38,227.45 L390.83,225.82 L393.33,224.19 L395.86,222.56 L398.44,220.93 L401.05,219.30 L403.70,217.67 L406.39,216.04 L409.11,214.42 L411.88,212.79 L414.68,211.16 L417.51,209.53 L420.39,207.90 L423.30,206.27 L426.25,204.64 L429.23,203.01 L432.25,201.38 L435.31,199.75 L438.40,198.12 L441.53,196.50 L444.69,194.87 L447.89,193.24 L451.12,191.61 L454.39,189.98 L457.69,188.35 L461.02,186.72 L464.39,185.09 L467.79,183.46 L471.23,181.84 L474.69,180.21 L478.19,178.58 L481.73,176.95 L485.29,175.32 L488.89,173.69 L492.52,172.06 L496.17,170.43 L499.86,168.80 L503.59,167.17 L507.34,165.55 L511.12,163.92 L514.93,162.29 L518.77,160.66 L522.64,159.03 L526.54,157.40 L530.47,155.77 L534.42,154.14 L538.40,152.51 L542.42,150.88 L546.46,149.26 L550.52,147.63 L554.61,146.00 L558.73,144.37 L562.88,142.74 L567.05,141.11 L571.25,139.48 L575.47,137.85 L579.72,136.22 L583.99,134.59 L588.29,132.97 L592.61,131.34 L596.95,129.71 L601.32,128.08 L605.71,126.45 L610.12,124.82 L614.55,123.19 L619.01,121.56 L623.49,119.93 L627.99,118.30 L632.51,116.68 L637.05,115.05 L641.61,113.42 L646.20,111.79 L650.80,110.16 L655.42,108.53 L660.06,106.90 L664.71,105.27 L669.39,103.64 L674.08,102.01 L678.79,100.39 L683.52,98.76 L688.26,97.13 L693.03,95.50 L697.80,93.87 L702.60,92.24 L707.40,90.61 L712.23,88.98 L717.06,87.35 L721.91,85.72 L726.78,84.09 L731.66,82.47 L736.55,80.84 L741.45,79.21 L746.37,77.58 L751.30,75.95 L756.24,74.32 L761.19,72.69 L766.15,71.06 L771.12,69.43 L776.10,67.81 L781.10,66.18 L786.10,64.55 L791.11,62.92 L796.13,61.29 L801.15,59.66 L806.19,58.03 L811.23,56.40 L816.28,54.77 L821.33,53.14 L826.40,51.51 L831.46,49.89 L836.54,48.26 L841.61,46.63 L846.70,45.00 L851.78,43.37 L856.87,41.74 L861.97,40.11 L867.06,38.48 L872.16,36.85 L877.27,35.23 L882.37,33.60 L887.48,31.97 L892.58,30.34 L897.69,28.71 L902.80,27.08"/>
<path d="M1054.30,565.0 H751.30"/>
<path d="M1195.48,516.0 H610.12"/>
<path d="M1316.71,467.0 H488.89"/>
<path d="M1409.74,418.0 H395.86"/>
<path d="M1468.21,369.0 H337.39"/>
<path d="M1488.16,320.0 H317.44"/>
<path d="M1468.21,271.0 H337.39"/>
<path d="M1409.74,223.0 H395.86"/>
<path d="M1316.71,174.0 H488.89"/>
<path d="M1195.48,125.0 H610.12"/>
<path d="M1054.30,76.0 H751.30"/>
</g>
<g font-family="Liberation Sans, sans-serif" font-size="10.5" fill="#868686" text-anchor="middle">
<text transform="translate(1487.56,330.2) scale(1.09,1)">+180</text>
<text x="1504.7" y="326" font-size="7">°</text>
<text transform="translate(1389.63,330.2) scale(1.09,1)">+210</text>
<text x="1406.7" y="326" font-size="7">°</text>
<text transform="translate(1291.71,330.2) scale(1.09,1)">+240</text>
<text x="1308.8" y="326" font-size="7">°</text>
<text transform="translate(1193.78,330.2) scale(1.09,1)">+270</text>
<text x="1210.9" y="326" font-size="7">°</text>
<text transform="translate(1095.85,330.2) scale(1.09,1)">+300</text>
<text x="1113.0" y="326" font-size="7">°</text>
<text transform="translate(997.93,330.2) scale(1.09,1)">+330</text>
<text x="1015.0" y="326" font-size="7">°</text>
<text transform="translate(900.50,330.2) scale(1.09,1)">+0</text>
<text x="911.0" y="326" font-size="7">°</text>
<text transform="translate(801.54,330.2) scale(1.09,1)">+30</text>
<text x="815.1" y="326" font-size="7">°</text>
<text transform="translate(703.98,330.2) scale(1.09,1)">+60</text>
<text x="717.6" y="326" font-size="7">°</text>
<text transform="translate(606.42,330.2) scale(1.09,1)">+90</text>
<text x="620.0" y="326" font-size="7">°</text>
<text transform="translate(508.86,330.2) scale(1.09,1)">+120</text>
<text x="526.0" y="326" font-size="7">°</text>
<text transform="translate(411.30,330.2) scale(1.09,1)">+150</text>
<text x="428.4" y="326" font-size="7">°</text>
<text transform="translate(313.74,330.2) scale(1.09,1)">+180</text>
<text x="330.8" y="326" font-size="7">°</text>
<text transform="translate(900.60,25.20) scale(1.11,1)">+90</text>
<text x="914.4" y="22.0" font-size="7">°</text>
<text transform="translate(900.60,122.82) scale(1.11,1)">+60</text>
<text x="914.4" y="119.6" font-size="7">°</text>
<text transform="translate(900.60,220.56) scale(1.11,1)">+30</text>
<text x="914.4" y="217.4" font-size="7">°</text>
<text transform="translate(900.60,427.54) scale(1.11,1)">−30</text>
<text x="914.4" y="424.3" font-size="7">°</text>
<text transform="translate(900.60,525.28) scale(1.11,1)">−60</text>
<text x="914.4" y="522.1" font-size="7">°</text>
<text transform="translate(900.60,624.20) scale(1.11,1)">−90</text>
<text x="914.4" y="621.0" font-size="7">°</text>
</g>
<line x1="604.2" y1="266.8" x2="524.8" y2="307.0" stroke="#30b889" stroke-width="1.5" stroke-dasharray="1.5 1.9"/>
<line x1="604.2" y1="266.8" x2="648.1" y2="283.0" stroke="#30b889" stroke-width="1.5" stroke-dasharray="1.5 1.9"/>
<line x1="604.2" y1="266.8" x2="615.0" y2="246.1" stroke="#30b889" stroke-width="1.5" stroke-dasharray="1.5 1.9"/>
<path d="M615.23,244.26 L614.37,244.27 L613.50,244.32 L612.60,244.40 L611.69,244.51 L610.77,244.64 L609.82,244.81 L608.87,245.01 L607.90,245.24 L606.92,245.50 L605.93,245.79 L604.94,246.11 L603.93,246.45 L602.93,246.82 L601.91,247.22 L600.90,247.65 L599.88,248.10 L598.87,248.58 L597.86,249.09 L596.85,249.62 L595.85,250.17 L594.86,250.74 L593.88,251.34 L592.90,251.95 L591.94,252.59 L591.00,253.25 L590.06,253.93 L589.15,254.62 L588.25,255.33 L587.38,256.06 L586.52,256.80 L585.69,257.55 L584.88,258.32 L584.09,259.10 L583.34,259.89 L582.60,260.70 L581.90,261.51 L581.23,262.33 L580.59,263.15 L579.98,263.98 L579.40,264.82 L578.86,265.66 L578.35,266.51 L577.88,267.35 L577.44,268.20 L577.03,269.05 L576.67,269.89 L576.34,270.74 L576.05,271.58 L575.79,272.41 L575.57,273.24 L575.39,274.07 L575.25,274.89 L575.15,275.70 L575.08,276.50 L575.05,277.29 L575.06,278.07 L575.11,278.84 L575.19,279.60 L575.31,280.34 L575.47,281.07 L575.66,281.78 L575.88,282.48 L576.14,283.16 L576.44,283.83 L576.76,284.47 L577.12,285.10 L577.51,285.71 L577.93,286.29 L578.38,286.86 L578.86,287.40 L579.37,287.92 L579.90,288.42 L580.46,288.89 L581.05,289.34 L581.66,289.77 L582.29,290.17 L582.95,290.54 L583.62,290.89 L584.32,291.21 L585.03,291.51 L585.76,291.78 L586.51,292.02 L587.27,292.23 L588.05,292.42 L588.84,292.57 L589.64,292.70 L590.46,292.80 L591.28,292.88 L592.12,292.92 L592.96,292.93 L593.81,292.92 L594.66,292.88 L595.52,292.80 L596.39,292.70 L597.25,292.57 L598.12,292.42 L599.00,292.23 L599.87,292.02 L600.74,291.78 L601.61,291.51 L602.47,291.21 L603.34,290.89 L604.20,290.54 L605.05,290.17 L605.90,289.77 L606.74,289.34 L607.58,288.89 L608.41,288.42 L609.23,287.92 L610.04,287.40 L610.84,286.86 L611.63,286.29 L612.41,285.71 L613.18,285.10 L613.94,284.47 L614.68,283.83 L615.41,283.16 L616.13,282.48 L616.83,281.78 L617.52,281.07 L618.19,280.34 L618.84,279.60 L619.48,278.84 L620.10,278.07 L620.70,277.29 L621.28,276.50 L621.85,275.70 L622.39,274.89 L622.92,274.07 L623.42,273.24 L623.91,272.41 L624.37,271.58 L624.81,270.74 L625.23,269.89 L625.63,269.05 L626.00,268.20 L626.35,267.35 L626.68,266.51 L626.98,265.66 L627.26,264.82 L627.51,263.98 L627.74,263.15 L627.94,262.33 L628.11,261.51 L628.26,260.70 L628.38,259.89 L628.47,259.10 L628.53,258.32 L628.57,257.55 L628.58,256.80 L628.56,256.06 L628.51,255.33 L628.43,254.62 L628.32,253.93 L628.18,253.25 L628.01,252.59 L627.81,251.95 L627.58,251.34 L627.33,250.74 L627.04,250.17 L626.72,249.62 L626.37,249.09 L625.99,248.58 L625.58,248.10 L625.14,247.65 L624.67,247.22 L624.18,246.82 L623.65,246.45 L623.09,246.11 L622.51,245.79 L621.90,245.50 L621.26,245.24 L620.59,245.01 L619.90,244.81 L619.18,244.64 L618.44,244.51 L617.67,244.40 L616.88,244.32 L616.06,244.27 L615.23,244.26Z" fill="none" stroke="#30b889" stroke-width="2.2"/>
<circle cx="524.8" cy="307.0" r="1.4" fill="#f0724a"/>
<circle cx="648.1" cy="283.0" r="1.4" fill="#f0724a"/>
<circle cx="615.0" cy="246.1" r="1.4" fill="#f0724a"/>
<text x="601.4" y="272" font-family="Liberation Sans, sans-serif" font-size="11" fill="#ffffff" text-anchor="middle">ORI</text>
<line x1="605.2" y1="268.0" x2="608.4" y2="268.6" stroke="#ff0000" stroke-width="1.0"/>
<circle cx="603.3" cy="266.1" r="1.5" fill="#ff0000"/>
<circle cx="601.4" cy="263.3" r="0.6" fill="#ff0000"/>
<circle cx="603.6" cy="263.3" r="0.6" fill="#ff0000"/>
<g font-family="Liberation Mono, monospace" font-size="13.9" fill="#ffffff" xml:space="preserve">
<text x="316.3" y="29.90">UK0057</text>
<text x="316.3" y="42.88">Beg: 20251022 04:31:43 (sol = 208.68°)</text>
<text x="316.3" y="56.36">End: 20251022 05:12:48 (sol = 208.70°)</text>
<text x="316.3" y="68.84">--------------------------------------</text>
<text x="316.3" y="81.82">ORI: 3</text>
</g>
<g font-family="Liberation Sans, sans-serif" font-size="28" fill="#575757" stroke="#575757" stroke-width="0.5">
<text transform="translate(148.98,696.62) rotate(-90) scale(0.921,1.065)">APR</text>
<text transform="translate(293.94,702.03) rotate(-90) scale(0.970,1.065)">MAY</text>
<text transform="translate(436.18,691.00) rotate(-90) scale(0.925,1.065)">JUN</text>
<text transform="translate(579.77,686.00) rotate(-90) scale(0.892,1.065)">JUL</text>
<text transform="translate(723.56,700.08) rotate(-90) scale(0.942,1.065)">AUG</text>
<text transform="translate(871.98,693.88) rotate(-90) scale(0.880,1.065)">SEP</text>
<text transform="translate(1017.15,700.38) rotate(-90) scale(0.978,1.065)">OCT</text>
<text transform="translate(1169.56,704.14) rotate(-90) scale(0.964,1.065)">NOV</text>
<text transform="translate(1319.18,702.03) rotate(-90) scale(0.969,1.065)">DEC</text>
<text transform="translate(1470.15,688.62) rotate(-90) scale(0.912,1.065)">JAN</text>
<text transform="translate(1628.15,696.14) rotate(-90) scale(0.928,1.065)">FEB</text>
<text transform="translate(1765.56,705.57) rotate(-90) scale(0.982,1.065)">MAR</text>
</g>
<g stroke-width="4.17">
<line x1="106" y1="834" x2="130" y2="834" stroke="#bddf26"/>
<line x1="165" y1="834" x2="345" y2="834" stroke="#bddf26"/>
<line x1="366" y1="834" x2="625" y2="834" stroke="#bddf26"/>
<line x1="636" y1="834" x2="787" y2="834" stroke="#bddf26"/>
<line x1="807" y1="834" x2="900" y2="834" stroke="#bddf26"/>
<line x1="920" y1="834" x2="973" y2="834" stroke="#bddf26"/>
<line x1="984" y1="834" x2="1066" y2="834" stroke="#bddf26"/>
<line x1="1082" y1="834" x2="1204" y2="834" stroke="#bddf26"/>
<line x1="1244" y1="834" x2="1326" y2="834" stroke="#bddf26"/>
<line x1="1337" y1="834" x2="1356" y2="834" stroke="#bddf26"/>
<line x1="1381" y1="834" x2="1444" y2="834" stroke="#bddf26"/>
<line x1="1459" y1="834" x2="1512" y2="834" stroke="#bddf26"/>
<line x1="1523" y1="834" x2="1547" y2="834" stroke="#bddf26"/>
<line x1="1724" y1="834" x2="1748" y2="834" stroke="#bddf26"/>
<line x1="1758" y1="834" x2="1782" y2="834" stroke="#bddf26"/>
<line x1="165" y1="818" x2="189" y2="818" stroke="#81d34d"/>
<line x1="224" y1="818" x2="287" y2="818" stroke="#81d34d"/>
<line x1="312" y1="818" x2="341" y2="818" stroke="#81d34d"/>
<line x1="366" y1="818" x2="493" y2="818" stroke="#81d34d"/>
<line x1="508" y1="818" x2="654" y2="818" stroke="#81d34d"/>
<line x1="704" y1="818" x2="738" y2="818" stroke="#81d34d"/>
<line x1="773" y1="818" x2="846" y2="818" stroke="#81d34d"/>
<line x1="871" y1="818" x2="988" y2="818" stroke="#81d34d"/>
<line x1="1003" y1="818" x2="1017" y2="818" stroke="#81d34d"/>
<line x1="1062" y1="818" x2="1213" y2="818" stroke="#81d34d"/>
<line x1="1244" y1="818" x2="1267" y2="818" stroke="#81d34d"/>
<line x1="1293" y1="818" x2="1316" y2="818" stroke="#81d34d"/>
<line x1="1342" y1="818" x2="1365" y2="818" stroke="#81d34d"/>
<line x1="1386" y1="818" x2="1429" y2="818" stroke="#81d34d"/>
<line x1="1459" y1="818" x2="1483" y2="818" stroke="#81d34d"/>
<line x1="1548" y1="818" x2="1571" y2="818" stroke="#81d34d"/>
<line x1="165" y1="802" x2="189" y2="802" stroke="#4ec36b"/>
<line x1="258" y1="802" x2="488" y2="802" stroke="#4ec36b"/>
<line x1="508" y1="802" x2="615" y2="802" stroke="#4ec36b"/>
<line x1="626" y1="802" x2="718" y2="802" stroke="#4ec36b"/>
<line x1="729" y1="802" x2="826" y2="802" stroke="#4ec36b"/>
<line x1="949" y1="802" x2="1150" y2="802" stroke="#4ec36b"/>
<line x1="1160" y1="802" x2="1248" y2="802" stroke="#4ec36b"/>
<line x1="1258" y1="802" x2="1444" y2="802" stroke="#4ec36b"/>
<line x1="1459" y1="802" x2="1483" y2="802" stroke="#4ec36b"/>
<line x1="1553" y1="802" x2="1576" y2="802" stroke="#4ec36b"/>
<line x1="194" y1="785" x2="218" y2="785" stroke="#2ab07f"/>
<line x1="322" y1="785" x2="507" y2="785" stroke="#2ab07f"/>
<line x1="518" y1="785" x2="542" y2="785" stroke="#2ab07f"/>
<line x1="557" y1="785" x2="684" y2="785" stroke="#2ab07f"/>
<line x1="807" y1="785" x2="831" y2="785" stroke="#2ab07f"/>
<line x1="954" y1="785" x2="973" y2="785" stroke="#2ab07f"/>
<line x1="989" y1="785" x2="1125" y2="785" stroke="#2ab07f"/>
<line x1="1155" y1="785" x2="1218" y2="785" stroke="#2ab07f"/>
<line x1="1244" y1="785" x2="1267" y2="785" stroke="#2ab07f"/>
<line x1="1317" y1="785" x2="1341" y2="785" stroke="#2ab07f"/>
<line x1="1396" y1="785" x2="1419" y2="785" stroke="#2ab07f"/>
<line x1="1464" y1="785" x2="1650" y2="785" stroke="#2ab07f"/>
<line x1="341" y1="769" x2="370" y2="769" stroke="#1e9b8a"/>
<line x1="410" y1="769" x2="448" y2="769" stroke="#1e9b8a"/>
<line x1="469" y1="769" x2="493" y2="769" stroke="#1e9b8a"/>
<line x1="528" y1="769" x2="546" y2="769" stroke="#1e9b8a"/>
<line x1="562" y1="769" x2="591" y2="769" stroke="#1e9b8a"/>
<line x1="616" y1="769" x2="649" y2="769" stroke="#1e9b8a"/>
<line x1="959" y1="769" x2="988" y2="769" stroke="#1e9b8a"/>
<line x1="1062" y1="769" x2="1086" y2="769" stroke="#1e9b8a"/>
<line x1="1101" y1="769" x2="1125" y2="769" stroke="#1e9b8a"/>
<line x1="1160" y1="769" x2="1194" y2="769" stroke="#1e9b8a"/>
<line x1="1249" y1="769" x2="1272" y2="769" stroke="#1e9b8a"/>
<line x1="1425" y1="769" x2="1512" y2="769" stroke="#1e9b8a"/>
<line x1="420" y1="752" x2="444" y2="752" stroke="#25858e"/>
<line x1="533" y1="752" x2="556" y2="752" stroke="#25858e"/>
<line x1="567" y1="752" x2="591" y2="752" stroke="#25858e"/>
<line x1="621" y1="752" x2="743" y2="752" stroke="#25858e"/>
<line x1="969" y1="752" x2="1135" y2="752" stroke="#25858e"/>
<line x1="1185" y1="752" x2="1346" y2="752" stroke="#25858e"/>
<line x1="1469" y1="752" x2="1493" y2="752" stroke="#25858e"/>
<line x1="430" y1="736" x2="453" y2="736" stroke="#2d708e"/>
<line x1="577" y1="736" x2="733" y2="736" stroke="#2d708e"/>
<line x1="994" y1="736" x2="1105" y2="736" stroke="#2d708e"/>
<line x1="1116" y1="736" x2="1223" y2="736" stroke="#2d708e"/>
<line x1="1263" y1="736" x2="1292" y2="736" stroke="#2d708e"/>
<line x1="1489" y1="736" x2="1512" y2="736" stroke="#2d708e"/>
<line x1="592" y1="720" x2="615" y2="720" stroke="#375a8c"/>
<line x1="655" y1="720" x2="772" y2="720" stroke="#375a8c"/>
<line x1="1072" y1="720" x2="1243" y2="720" stroke="#375a8c"/>
<line x1="1263" y1="720" x2="1287" y2="720" stroke="#375a8c"/>
<line x1="596" y1="703" x2="733" y2="703" stroke="#424086"/>
<line x1="1092" y1="703" x2="1120" y2="703" stroke="#424086"/>
<line x1="1200" y1="703" x2="1223" y2="703" stroke="#424086"/>
<line x1="1273" y1="703" x2="1326" y2="703" stroke="#424086"/>
<line x1="1111" y1="687" x2="1135" y2="687" stroke="#482475"/>
</g>
<g stroke="#cccccc" stroke-opacity="0.5" stroke-width="2.08" stroke-dasharray="2.08 3.43">
<line x1="75" y1="842.3" x2="75" y2="641.4"/>
<line x1="219" y1="842.3" x2="219" y2="641.4"/>
<line x1="365" y1="842.3" x2="365" y2="641.4"/>
<line x1="506" y1="842.3" x2="506" y2="641.4"/>
<line x1="651" y1="842.3" x2="651" y2="641.4"/>
<line x1="797" y1="842.3" x2="797" y2="641.4"/>
<line x1="940" y1="842.3" x2="940" y2="641.4"/>
<line x1="1091" y1="842.3" x2="1091" y2="641.4"/>
<line x1="1239" y1="842.3" x2="1239" y2="641.4"/>
<line x1="1394" y1="842.3" x2="1394" y2="641.4"/>
<line x1="1548" y1="842.3" x2="1548" y2="641.4"/>
<line x1="1687" y1="842.3" x2="1687" y2="641.4"/>
</g>
<line x1="1043.5" y1="842.3" x2="1043.5" y2="641.4" stroke="#ff0000" stroke-width="1.39" stroke-dasharray="5.14 2.22"/>
<g font-family="Liberation Sans, sans-serif" font-size="10.5" fill="#ffffff" text-anchor="middle">
<text x="117.3" y="831.8">KSE</text>
<text x="254.7" y="831.8">ETA</text>
<text x="495.4" y="831.8">NZC</text>
<text x="710.7" y="831.8">NDA</text>
<text x="853.9" y="831.8">SPE</text>
<text x="946.4" y="831.8">ARD</text>
<text x="1024.6" y="831.8">EGE</text>
<text x="1142.3" y="831.8">NTA</text>
<text x="1284.3" y="831.8">MON</text>
<text x="1343.3" y="831.8">URS</text>
<text x="1411.8" y="831.8">AHY</text>
<text x="1485.7" y="831.8">GUM</text>
<text x="1535.4" y="831.8">OHY</text>
<text x="1736.0" y="831.8">XHE</text>
<text x="1769.8" y="831.8">EVI</text>
<text x="176.3" y="815.5">AVB</text>
<text x="254.5" y="815.5">ELY</text>
<text x="324.0" y="815.5">CAM</text>
<text x="431.7" y="815.5">SSG</text>
<text x="578.7" y="815.5">PCA</text>
<text x="720.7" y="815.5">AUD</text>
<text x="809.4" y="815.5">AUR</text>
<text x="931.1" y="815.5">DSX</text>
<text x="1010.8" y="815.5">OCU</text>
<text x="1138.1" y="815.5">OER</text>
<text x="1254.6" y="815.5">DKD</text>
<text x="1304.0" y="815.5">DSV</text>
<text x="1353.0" y="815.5">ALY</text>
<text x="1408.0" y="815.5">JLE</text>
<text x="1471.9" y="815.5">SCC</text>
<text x="1559.2" y="815.5">FEV</text>
<text x="176.3" y="799.1">LYR</text>
<text x="372.0" y="799.1">JMC</text>
<text x="558.9" y="799.1">JPE</text>
<text x="671.2" y="799.1">PAU</text>
<text x="774.2" y="799.1">NIA</text>
<text x="1049.6" y="799.1">STA</text>
<text x="1206.3" y="799.1">NOO</text>
<text x="1353.3" y="799.1">COM</text>
<text x="1470.7" y="799.1">NCC</text>
<text x="1564.4" y="799.1">FED</text>
<text x="206.0" y="782.8">HVI</text>
<text x="412.2" y="782.8">ARI</text>
<text x="529.7" y="782.8">SZC</text>
<text x="618.4" y="782.8">CAP</text>
<text x="818.2" y="782.8">NUE</text>
<text x="961.1" y="782.8">OCT</text>
<text x="1059.4" y="782.8">ORI</text>
<text x="1186.6" y="782.8">AMO</text>
<text x="1255.1" y="782.8">DPC</text>
<text x="1328.8" y="782.8">XVI</text>
<text x="1407.5" y="782.8">QUA</text>
<text x="1559.5" y="782.8">AAN</text>
<text x="353.2" y="766.5">TAH</text>
<text x="431.2" y="766.5">JEA</text>
<text x="481.4" y="766.5">JIP</text>
<text x="539.0" y="766.5">PPS</text>
<text x="578.7" y="766.5">ZCS</text>
<text x="632.7" y="766.5">GDR</text>
<text x="971.1" y="766.5">DRA</text>
<text x="1073.1" y="766.5">LUM</text>
<text x="1113.1" y="766.5">RPU</text>
<text x="1177.3" y="766.5">THA</text>
<text x="1259.4" y="766.5">PSU</text>
<text x="1470.6" y="766.5">XCB</text>
<text x="431.7" y="750.2">JRC</text>
<text x="544.2" y="750.2">CAN</text>
<text x="578.0" y="750.2">FAN</text>
<text x="681.2" y="750.2">PER</text>
<text x="1049.8" y="750.2">CTA</text>
<text x="1265.3" y="750.2">HYD</text>
<text x="1481.0" y="750.2">XUM</text>
<text x="441.2" y="733.8">COR</text>
<text x="657.9" y="733.8">SDA</text>
<text x="1048.9" y="733.8">LMI</text>
<text x="1166.6" y="733.8">LEO</text>
<text x="1274.4" y="733.8">EHY</text>
<text x="1500.5" y="733.8">ECV</text>
<text x="603.7" y="717.5">JXA</text>
<text x="715.9" y="717.5">KCG</text>
<text x="1156.6" y="717.5">AND</text>
<text x="1274.8" y="717.5">DAD</text>
<text x="666.5" y="701.2">ERI</text>
<text x="1108.4" y="701.2">SLD</text>
<text x="1211.3" y="701.2">ORS</text>
<text x="1299.8" y="701.2">GEM</text>
<text x="1122.8" y="684.8">KUM</text>
</g>
<g stroke="#ffffff" stroke-width="2.1">
<path d="M114,834H122M118,830V838"/>
<path d="M240,834H248M244,830V838"/>
<path d="M511,834H519M515,830V838"/>
<path d="M707,834H715M711,830V838"/>
<path d="M834,834H842M838,830V838"/>
<path d="M962,834H970M966,830V838"/>
<path d="M987,834H995M991,830V838"/>
<path d="M1117,834H1125M1121,830V838"/>
<path d="M1296,834H1304M1300,830V838"/>
<path d="M1342,834H1350M1346,830V838"/>
<path d="M1413,834H1421M1417,830V838"/>
<path d="M1482,834H1490M1486,830V838"/>
<path d="M1531,834H1539M1535,830V838"/>
<path d="M1732,834H1740M1736,830V838"/>
<path d="M1766,834H1774M1770,830V838"/>
<path d="M173,818H181M177,814V822"/>
<path d="M256,818H264M260,814V822"/>
<path d="M324,818H332M328,814V822"/>
<path d="M438,818H446M442,814V822"/>
<path d="M599,818H607M603,814V822"/>
<path d="M717,818H725M721,814V822"/>
<path d="M794,818H802M798,814V822"/>
<path d="M940,818H948M944,814V822"/>
<path d="M1006,818H1014M1010,814V822"/>
<path d="M1153,818H1161M1157,814V822"/>
<path d="M1251,818H1259M1255,814V822"/>
<path d="M1300,818H1308M1304,814V822"/>
<path d="M1350,818H1358M1354,814V822"/>
<path d="M1403,818H1411M1407,814V822"/>
<path d="M1467,818H1475M1471,814V822"/>
<path d="M1555,818H1563M1559,814V822"/>
<path d="M175,802H183M179,798V806"/>
<path d="M379,802H387M383,798V806"/>
<path d="M545,802H553M549,798V806"/>
<path d="M683,802H691M687,798V806"/>
<path d="M742,802H750M746,798V806"/>
<path d="M1075,802H1083M1079,798V806"/>
<path d="M1217,802H1225M1221,798V806"/>
<path d="M1305,802H1313M1309,798V806"/>
<path d="M1467,802H1475M1471,798V806"/>
<path d="M1560,802H1568M1564,798V806"/>
<path d="M202,785H210M206,781V789"/>
<path d="M401,785H409M405,781V789"/>
<path d="M526,785H534M530,781V789"/>
<path d="M639,785H647M643,781V789"/>
<path d="M815,785H823M819,781V789"/>
<path d="M960,785H968M964,781V789"/>
<path d="M1041,785H1049M1045,781V789"/>
<path d="M1188,785H1196M1192,781V789"/>
<path d="M1251,785H1259M1255,781V789"/>
<path d="M1325,785H1333M1329,781V789"/>
<path d="M1403,785H1411M1407,781V789"/>
<path d="M1546,785H1554M1550,781V789"/>
<path d="M356,769H364M360,765V773"/>
<path d="M427,769H435M431,765V773"/>
<path d="M477,769H485M481,765V773"/>
<path d="M536,769H544M540,765V773"/>
<path d="M571,769H579M575,765V773"/>
<path d="M631,769H639M635,765V773"/>
<path d="M974,769H982M978,765V773"/>
<path d="M1070,769H1078M1074,765V773"/>
<path d="M1109,769H1117M1113,765V773"/>
<path d="M1178,769H1186M1182,765V773"/>
<path d="M1256,769H1264M1260,765V773"/>
<path d="M1467,769H1475M1471,765V773"/>
<path d="M428,752H436M432,748V756"/>
<path d="M540,752H548M544,748V756"/>
<path d="M575,752H583M579,748V756"/>
<path d="M704,752H712M708,748V756"/>
<path d="M1095,752H1103M1099,748V756"/>
<path d="M1271,752H1279M1275,748V756"/>
<path d="M1477,752H1485M1481,748V756"/>
<path d="M438,736H446M442,732V740"/>
<path d="M631,736H639M635,732V740"/>
<path d="M1039,736H1047M1043,732V740"/>
<path d="M1168,736H1176M1172,732V740"/>
<path d="M1275,736H1283M1279,732V740"/>
<path d="M1497,736H1505M1501,732V740"/>
<path d="M599,720H607M603,716V724"/>
<path d="M727,720H735M731,716V724"/>
<path d="M1188,720H1196M1192,716V724"/>
<path d="M1271,720H1279M1275,716V724"/>
<path d="M688,703H696M692,699V707"/>
<path d="M1102,703H1110M1106,699V707"/>
<path d="M1207,703H1215M1211,699V707"/>
<path d="M1300,703H1308M1304,699V707"/>
<path d="M1119,687H1127M1123,683V691"/>
</g>
<rect x="20.5" y="641.5" width="1765" height="201" fill="none" stroke="#ffffff" stroke-width="1.11"/>
<g stroke="#ffffff" stroke-width="1.11">
<line x1="20.5" y1="842.5" x2="20.5" y2="847.4"/>
<line x1="265.5" y1="842.5" x2="265.5" y2="847.4"/>
<line x1="510.5" y1="842.5" x2="510.5" y2="847.4"/>
<line x1="755.5" y1="842.5" x2="755.5" y2="847.4"/>
<line x1="1000.5" y1="842.5" x2="1000.5" y2="847.4"/>
<line x1="1246.5" y1="842.5" x2="1246.5" y2="847.4"/>
<line x1="1491.5" y1="842.5" x2="1491.5" y2="847.4"/>
<line x1="1736.5" y1="842.5" x2="1736.5" y2="847.4"/>
</g>
<g font-family="Liberation Sans, sans-serif" font-size="13.9" fill="#ffffff" text-anchor="middle">
<text x="20.30" y="862.2">0</text>
<text x="265.47" y="862.2">50</text>
<text x="510.63" y="862.2">100</text>
<text x="755.80" y="862.2">150</text>
<text x="1000.97" y="862.2">200</text>
<text x="1246.13" y="862.2">250</text>
<text x="1491.30" y="862.2">300</text>
<text x="1736.47" y="862.2">350</text>
<text transform="translate(902.5,882.2) scale(1.142,1)">Solar longitude (deg)</text>
</g>
</svg>
</body></html>
